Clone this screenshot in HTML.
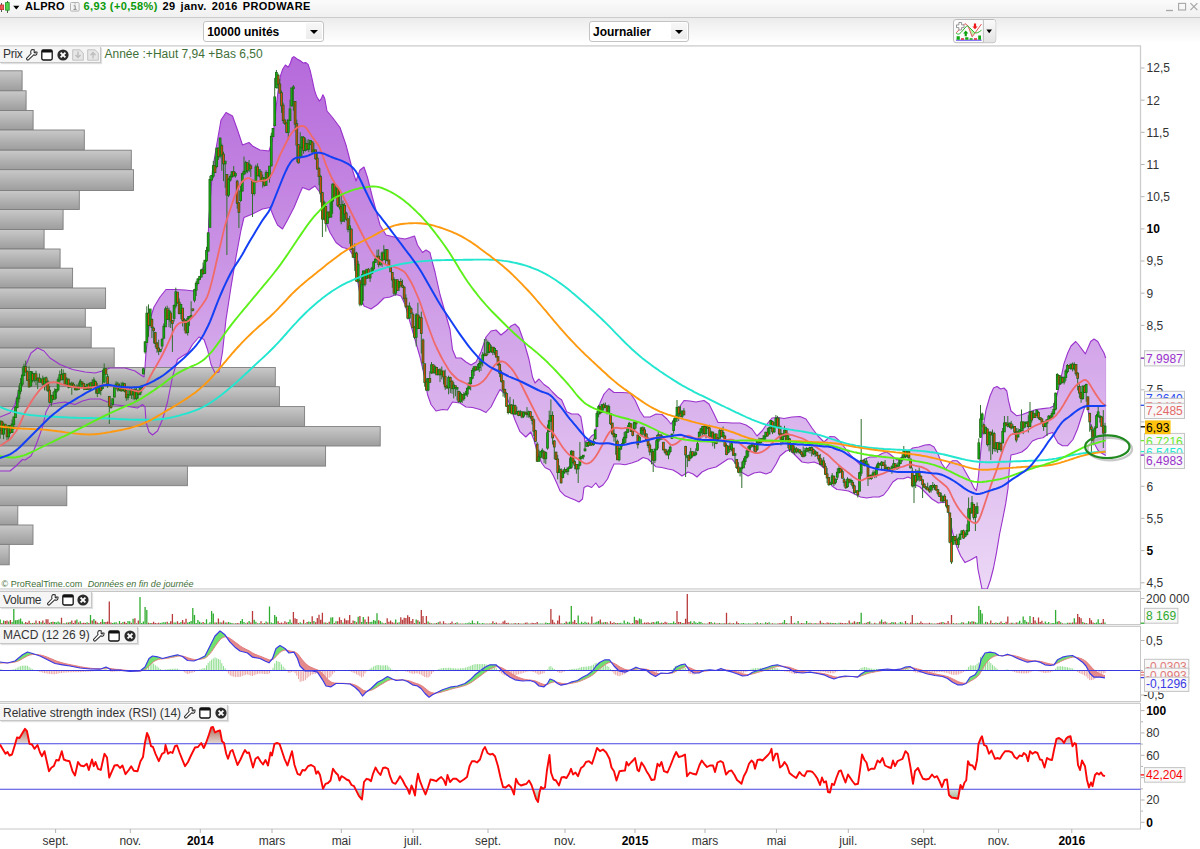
<!DOCTYPE html>
<html lang="fr"><head><meta charset="utf-8"><title>ALPRO PRODWARE</title>
<style>
html,body{margin:0;padding:0;background:#fff}
body{width:1200px;height:849px;position:relative;overflow:hidden;font-family:"Liberation Sans",Arial,sans-serif;font-size:12px;color:#333}
#title{position:absolute;left:0;top:0;width:1200px;height:17px;background:linear-gradient(#fbfbfb,#f0f0f0);border-bottom:1px solid #cbcbcb;box-sizing:content-box}
#title .t{position:absolute;top:0;line-height:13px;font-size:11px;font-weight:bold;color:#000;white-space:nowrap}
#tool{position:absolute;left:0;top:18px;width:1200px;height:28px;background:linear-gradient(#ececec,#f6f6f6 45%,#fff 90%)}
.dd{position:absolute;top:3px;height:21px;background:#fff;border:1px solid #c3c3c3;border-radius:3px;box-sizing:border-box;font-weight:bold;font-size:12px;color:#000;line-height:20px;padding-left:3px;white-space:nowrap}
.dd i{position:absolute;right:1px;top:1px;width:16px;height:16.4px;background:linear-gradient(#f7f7f7,#ececec);display:block}
.dd i:after{content:"";position:absolute;left:4px;top:7.2px;border-left:4px solid transparent;border-right:4px solid transparent;border-top:4.5px solid #000}
.plab{position:absolute;left:0;background:#f5f5f5;border-right:1px solid #c6c6c6;border-bottom:1px solid #c6c6c6;box-shadow:1px 1px 1px rgba(0,0,0,.12);box-sizing:border-box}
.plab .pt{position:absolute;left:3px;top:0.8px;font-size:12px;line-height:15px;color:#333;white-space:nowrap}
.plab .nar{letter-spacing:-0.3px}
#yr{position:absolute;left:104.5px;top:46.5px;font-size:12px;line-height:15px;color:#3f6f38;white-space:nowrap}
#copy{position:absolute;left:1.5px;top:578.6px;font-size:9px;line-height:11px;color:#3f6f38;white-space:nowrap}
#copy em{margin-left:3px}
.k{stroke:#1f6414;stroke-width:2.7}.u{stroke:#12b412;stroke-width:1.15}.d{stroke:#d9480c;stroke-width:1.15}
</style></head><body>
<div id="title">
 <svg width="20" height="17" viewBox="0 0 20 17" style="position:absolute;left:0;top:0"><path d="M1.5,3V12M7.5,1V13" stroke="#555" stroke-width="1"/><rect x="0" y="5" width="3.6" height="4.6" fill="#f25a5a" stroke="#c03030" stroke-width=".8"/><rect x="5.6" y="2.6" width="3.6" height="7.6" fill="#4fd34f" stroke="#1f8f1f" stroke-width=".8"/><path d="M13.2,5.8h6.2l-3.1,3.6z" fill="#000"/></svg>
 <span class="t" style="left:25px;top:-0.2px;letter-spacing:0.28px">ALPRO</span>
 <svg width="10" height="10" viewBox="0 0 10 10" style="position:absolute;left:69.5px;top:1.5px"><rect x=".5" y=".5" width="8.6" height="8.6" rx="1" fill="#f4f4f4" stroke="#b4b4b4"/><path d="M3.6,3.8h1.6v3.4M3.4,7.4h3.2M4.6,1.9h.9" stroke="#8a8a8a" stroke-width="1" fill="none"/></svg>
 <span class="t" style="left:83.6px;top:-0.2px;color:#0a9a0a;letter-spacing:0.36px">6,93 (+0,58%)</span>
 <span class="t" style="left:162.5px;top:-0.2px;letter-spacing:0.42px;word-spacing:1.4px">29 janv. 2016 PRODWARE</span>
 <svg width="36" height="14" viewBox="0 0 36 14" style="position:absolute;left:1164px;top:0"><path d="M2,10.5h7" stroke="#a6a6a6" stroke-width="1.3"/><rect x="14.6" y="3.4" width="7" height="6.6" fill="none" stroke="#a6a6a6" stroke-width="1.1"/><path d="M26.4,3.2l7,7M33.4,3.2l-7,7" stroke="#a6a6a6" stroke-width="1.2"/></svg>
</div>
<div id="tool">
 <div class="dd" style="left:203.2px;width:120.6px">10000 unités<i></i></div>
 <div class="dd" style="left:589px;width:99.8px">Journalier<i></i></div>
 <svg width="44" height="25" viewBox="0 0 44 25" style="position:absolute;left:953px;top:0.6px">
  <defs><linearGradient id="gbt" x1="0" y1="0" x2="0" y2="1"><stop offset="0" stop-color="#fafafa"/><stop offset="1" stop-color="#e4e4e4"/></linearGradient></defs>
  <rect x=".5" y=".5" width="42.2" height="23.2" rx="2.6" fill="#fbfbfb" stroke="#bcbcbc"/>
  <path d="M30.5,1H40.4a2.2,2.2 0 0 1 2.2,2.2V21a2.2,2.2 0 0 1 -2.2,2.2H30.5Z" fill="url(#gbt)"/>
  <path d="M30.4,1V23.3" stroke="#bdbdbd"/>
  <path d="M3,21.2h25.6" stroke="#6a5af0" stroke-width="1.2"/>
  <path d="M3.6,17.3h3.2v3.4H3.6ZM12.2,18.2h3.2v2.5h-3.2ZM16.6,19.2h3v1.5h-3ZM25.2,16.4h2.8v4.3h-2.8Z" fill="#12a812"/>
  <path d="M8,19.2h3v1.5H8ZM21,19.2h3v1.5h-3Z" fill="#e0203a"/>
  <path d="M15.5,7.4L19.3,17.4L22,13.6Z" fill="#b8f0a8"/>
  <path d="M3.2,13.8L12,4.6L15,6.8L19.2,17.8L28.5,5" fill="none" stroke="#e25a5a" stroke-width="1"/>
  <path d="M3.2,14.2C5,15.6 6,15.5 8,13.5L13.5,7.2C15,6.6 16,8 17,9L21.5,13.6C23,14.5 25,14 28.5,11.2" fill="none" stroke="#2cb82c" stroke-width="1"/>
  <path d="M5.9,3.5h2.7v2.4h2.4v2.7h-2.4v2.4h-2.7v-2.4h-2.4v-2.7h2.4z" fill="#fff" stroke="#8a8a8a" stroke-width=".9"/>
  <path d="M12.75,11.6l2.6,2.8h-1.5v2.8h-2.2v-2.8h-1.5z" fill="#0aa00a"/>
  <path d="M22,10.2l-2.6,-2.8h1.5v-2.8h2.2v2.8h1.5z" fill="#f01818"/>
  <path d="M33.4,10.6h5.6l-2.8,3.6z" fill="#000"/>
 </svg>
</div>
<svg id="chart" width="1200" height="849" viewBox="0 0 1200 849" style="position:absolute;left:0;top:0">
<defs>
<linearGradient id="gbar" x1="0" y1="0" x2="0" y2="1"><stop offset="0" stop-color="#c9c9c9"/><stop offset="1" stop-color="#9d9d9d"/></linearGradient>
<linearGradient id="gbb" gradientUnits="userSpaceOnUse" x1="0" y1="46" x2="0" y2="589"><stop offset="0" stop-color="#9a32cd" stop-opacity="0.74"/><stop offset="1" stop-color="#9a32cd" stop-opacity="0.19"/></linearGradient>
<linearGradient id="rsiu" gradientUnits="userSpaceOnUse" x1="0" y1="726" x2="0" y2="744"><stop offset="0" stop-color="#b0604e"/><stop offset="1" stop-color="#e2dcd8"/></linearGradient>
<linearGradient id="rsid" gradientUnits="userSpaceOnUse" x1="0" y1="789" x2="0" y2="804"><stop offset="0" stop-color="#e0e6dc"/><stop offset="1" stop-color="#7f9f6e"/></linearGradient>
<clipPath id="cmain"><rect x="0" y="47" width="1140.5" height="542"/></clipPath>
<clipPath id="cvol"><rect x="0" y="591.5" width="1140.5" height="33.0"/></clipPath>
<clipPath id="cmacd"><rect x="0" y="626.5" width="1140.5" height="75.0"/></clipPath>
<clipPath id="c70"><rect x="0" y="703.5" width="1140.5" height="40.25"/></clipPath>
<clipPath id="c30"><rect x="0" y="789.25" width="1140.5" height="39.75"/></clipPath>
</defs>
<rect x="-1" y="45.9" width="1141.5" height="543.1" fill="#fff" stroke="#cdcdcd" stroke-width="1.3"/>
<rect x="-1" y="591.5" width="1141.5" height="33.0" fill="#fff" stroke="#c6c6c6" stroke-width="1"/>
<rect x="-1" y="626.5" width="1141.5" height="75.0" fill="#fff" stroke="#c6c6c6" stroke-width="1"/>
<rect x="-1" y="703.5" width="1141.5" height="125.5" fill="#fff" stroke="#c6c6c6" stroke-width="1"/>
<rect x="0" y="589.6" width="1140.5" height="1.3" fill="#ececec"/>
<rect x="0" y="624.9" width="1140.5" height="1.3" fill="#ececec"/>
<rect x="0" y="701.9" width="1140.5" height="1.3" fill="#ececec"/>
<g clip-path="url(#cmain)">
<path d="M0,417L10,413 15,404.5 20,387 25,367 31,353 37.5,348 44,351 50,358 60,364.5 72.5,369.5 85,372 95,373 102.5,371 110,368 125,368 135,371 140,374.5 144,377 145,367 146,352 150,319.5 154,307 160,297 166,289.5 175,289.5 185,290 194,291 197.5,284.5 202.5,269.5 207.5,257 208.8,220 212.5,170 217.5,140 221,120 226,112.5 232.5,116 237.5,130 242.5,145 249,142.5 252.5,146 260,150 269,151 272.5,140 275,118 276.3,106 278.4,88.4 280.5,75.7 282.6,69.3 285.4,65 288.3,67.2 290.4,63 292.2,57.7 293.9,56.6 296.7,58.7 300.3,60.8 303.1,63 305.9,62.6 308.1,64.4 310.2,70.7 312.3,79.9 314.4,89.8 316.5,96.2 319.4,101.1 321.5,98.3 322.9,94.8 324.7,98.3 326.1,106 327,111 332.5,117.5 340,127.5 346,145 352.5,170 356,181 360,170 364,167 367.5,177.5 372.5,197.5 380,225 386,235 396,237.5 405,239 410,237.5 414.5,236 417.5,245 422.5,252.5 426,250 430,252.5 431,257 435,272 440,294.5 445,312 450,329.5 452.5,349.5 456,358 461,358 466,362 471,365 476,362 481,352 486,337 491,331 496,330 501,335 506,331 511,326 515,324 519,328 524,342 529,359.5 532.5,377 535,383 539,379 544,384.5 549,388 552.5,392 557.5,397 561.7,400 566.7,411.7 571.7,414 578,414 580.8,416.7 582.5,426.7 585,441.7 588,440 591.7,435.8 595,434 596.7,425 598,411.7 600,403 604,394 609,388.5 614,392.5 622,392.5 630,393 635,400 640,411 644,417 650,417 656,414 662,414.5 667,419 671,424 675,418 680,406 684,400.5 690,401 696,402 704,400.5 709,404 714,414 718,422.5 724,422.5 732,423 740,423 746,425 752,429 757,436 762,431 767,424 772,418 778,417.5 784,418.5 792,417 800,416.5 806,419 812,428 818,436 824,442 830,436.5 834.6,436.7 839,440.5 845,448 851.4,456 857.5,462 860.6,465 863.7,459.6 869.8,457 876,457 882,453.5 886.6,452 891,455 897,460 902,457 906.5,452.7 912.7,448 918.8,447 925,445 930,444.6 934,447 938,454 941.7,463.5 945.6,469 949.4,463.5 952.5,460.7 957,460.7 961.6,465 966,472.7 970.5,480.7 974.3,488.4 976.3,490.7 977.4,485.3 978.5,475.7 980.8,451 983,428 986,410 990,396 993.5,388 997,386.5 1000.6,389 1004,388 1006.8,391 1008.5,400.7 1011,411 1016.5,415.7 1021.8,414.8 1028.9,412 1036,409.5 1043,408.6 1050,407.7 1053.6,406 1057,395 1060.7,379.5 1064,363.6 1067.7,353 1071,346 1075.7,341.5 1078,344 1082,349.4 1085.4,353.9 1088,347.7 1090.7,341.5 1094,339 1097.8,341.5 1101,347.7 1104,353 1105.7,358 1105.7,455.4 1105.7,455.4 1101,452.8 1097.8,450 1094,443 1091.6,432.5 1089,414.8 1086.8,405 1084.5,407.7 1081,418 1077.5,429 1073,439.5 1067.7,445.7 1062.4,445.7 1058,443 1055,437.8 1052.7,432.5 1048,434 1043,437.8 1037.7,438.7 1032.4,441 1027,448 1021.8,452 1016.5,453.7 1011,455 1009.4,467.8 1008,488.4 1005.7,503.7 1002.7,519 999.6,534 996.5,552.7 993.5,568 990.4,580 987.3,589 982,589 980.5,581.7 978,569.5 976.6,556.5 970.5,560 965,562.6 960.6,555.7 956.7,546.5 953,534 950,520.5 947.5,505 944.5,502 938.4,503 932,499 926,493 920,487 915.7,485 912,478.8 908,477 903.5,478.8 897.4,478.8 892.8,482 888,489.5 883.6,495 879,497 873,497 866.7,498 860.6,497 854.5,494 848.4,491 842,490 837,489.5 832,486 828,478 824,468 819,464 814,462 808,463 802,462 796,456 790,450 786,451 780,456 776,464 771,472 766,474 760,472 754,473 748,476 741,472 736,464 732,459 728,459 722,463 716,467 708,469 702,472 697,477 693,474 688,472 682,476 678,473 673,470 668,469 661.7,467.5 655.8,466.7 651.7,462.5 648,459 643,457.5 638,460.8 631.7,463 625,464.7 620,464 614,464 610.8,471 607.5,479 603,485 599,487.5 595.8,483 591.7,487.5 587.5,485.8 584,487.5 582.5,499 579,502 575,500 570,498 565,495.8 560,490.8 556.7,483 553,475 550,470 545,467.5 541.7,463 537.5,453 534,440 530.8,432 525.8,437 520,431.7 515,420 508,400 504,393 500,389.5 496,397 491,407 486,412.5 480,409.5 472.5,407.5 466,407 460,403 452.5,402 447.5,410 442.5,409.5 436,411 431,404.5 427.5,394.5 424,374.5 420,357 415,339.5 410,322 405,304.5 401,296 396,294.5 390,297 384,298 377.5,304.5 371,309 364,306 360,294.5 356,272 354,257 349,249 342.5,247.5 336,242.5 330,232.5 325,220 322.5,207.5 320,192.5 315,186 309,190 302.5,187.5 300,193 294,207.5 287.5,220 282.5,229 277.5,225 274,217.5 270,207.5 262.5,209 252.5,214 244,217.5 241,230 236,257 231,287 226,319.5 222.5,352 219,372 215,373 211,364.5 207.5,349.5 204,339.5 199,337 192.5,344.5 187.5,353 182.5,356 177.5,359.5 172.5,377 167.5,402 162.5,419.5 157.5,431 152.5,435 149,432 146,422 145,407 142.5,404.5 137.5,408 125,406 112.5,404.5 107.5,402 100,399 90,399 82.5,401 75,404.5 65,402 57.5,403 50,404.5 46,412 42.5,427 37.5,441 34,450 31,456 25,460 22.5,459.5 16,466 10,471 0,471Z" fill="url(#gbb)" stroke="none"/>
<rect x="-1" y="70.8" width="23.1" height="20" fill="url(#gbar)" stroke="#7d7d7d" stroke-width="0.9"/>
<rect x="-1" y="90.8" width="27.1" height="19.8" fill="url(#gbar)" stroke="#7d7d7d" stroke-width="0.9"/>
<rect x="-1" y="110.5" width="34.1" height="19.5" fill="url(#gbar)" stroke="#7d7d7d" stroke-width="0.9"/>
<rect x="-1" y="130" width="85.3" height="20.2" fill="url(#gbar)" stroke="#7d7d7d" stroke-width="0.9"/>
<rect x="-1" y="150.2" width="132.3" height="19.4" fill="url(#gbar)" stroke="#7d7d7d" stroke-width="0.9"/>
<rect x="-1" y="169.7" width="134.5" height="20.8" fill="url(#gbar)" stroke="#7d7d7d" stroke-width="0.9"/>
<rect x="-1" y="190.5" width="80.3" height="19" fill="url(#gbar)" stroke="#7d7d7d" stroke-width="0.9"/>
<rect x="-1" y="209.5" width="64.1" height="20" fill="url(#gbar)" stroke="#7d7d7d" stroke-width="0.9"/>
<rect x="-1" y="229.5" width="45.1" height="19.5" fill="url(#gbar)" stroke="#7d7d7d" stroke-width="0.9"/>
<rect x="-1" y="249" width="61.1" height="19.2" fill="url(#gbar)" stroke="#7d7d7d" stroke-width="0.9"/>
<rect x="-1" y="268.2" width="73.6" height="19.8" fill="url(#gbar)" stroke="#7d7d7d" stroke-width="0.9"/>
<rect x="-1" y="288" width="106.6" height="20.5" fill="url(#gbar)" stroke="#7d7d7d" stroke-width="0.9"/>
<rect x="-1" y="308.5" width="86.3" height="18.8" fill="url(#gbar)" stroke="#7d7d7d" stroke-width="0.9"/>
<rect x="-1" y="327.2" width="92.2" height="20.8" fill="url(#gbar)" stroke="#7d7d7d" stroke-width="0.9"/>
<rect x="-1" y="348" width="115.2" height="19.5" fill="url(#gbar)" stroke="#7d7d7d" stroke-width="0.9"/>
<rect x="-1" y="367.5" width="276.3" height="19.2" fill="url(#gbar)" stroke="#7d7d7d" stroke-width="0.9"/>
<rect x="-1" y="386.7" width="280.4" height="19.9" fill="url(#gbar)" stroke="#7d7d7d" stroke-width="0.9"/>
<rect x="-1" y="406.6" width="305.6" height="20" fill="url(#gbar)" stroke="#7d7d7d" stroke-width="0.9"/>
<rect x="-1" y="426.6" width="381.2" height="19.4" fill="url(#gbar)" stroke="#7d7d7d" stroke-width="0.9"/>
<rect x="-1" y="446" width="326.6" height="20.1" fill="url(#gbar)" stroke="#7d7d7d" stroke-width="0.9"/>
<rect x="-1" y="466.1" width="188.4" height="19.6" fill="url(#gbar)" stroke="#7d7d7d" stroke-width="0.9"/>
<rect x="-1" y="485.7" width="67.8" height="20" fill="url(#gbar)" stroke="#7d7d7d" stroke-width="0.9"/>
<rect x="-1" y="505.7" width="18.8" height="19.3" fill="url(#gbar)" stroke="#7d7d7d" stroke-width="0.9"/>
<rect x="-1" y="525" width="34" height="19.4" fill="url(#gbar)" stroke="#7d7d7d" stroke-width="0.9"/>
<rect x="-1" y="544.4" width="10.2" height="20.4" fill="url(#gbar)" stroke="#7d7d7d" stroke-width="0.9"/>
<path d="M0,417L10,413 15,404.5 20,387 25,367 31,353 37.5,348 44,351 50,358 60,364.5 72.5,369.5 85,372 95,373 102.5,371 110,368 125,368 135,371 140,374.5 144,377 145,367 146,352 150,319.5 154,307 160,297 166,289.5 175,289.5 185,290 194,291 197.5,284.5 202.5,269.5 207.5,257 208.8,220 212.5,170 217.5,140 221,120 226,112.5 232.5,116 237.5,130 242.5,145 249,142.5 252.5,146 260,150 269,151 272.5,140 275,118 276.3,106 278.4,88.4 280.5,75.7 282.6,69.3 285.4,65 288.3,67.2 290.4,63 292.2,57.7 293.9,56.6 296.7,58.7 300.3,60.8 303.1,63 305.9,62.6 308.1,64.4 310.2,70.7 312.3,79.9 314.4,89.8 316.5,96.2 319.4,101.1 321.5,98.3 322.9,94.8 324.7,98.3 326.1,106 327,111 332.5,117.5 340,127.5 346,145 352.5,170 356,181 360,170 364,167 367.5,177.5 372.5,197.5 380,225 386,235 396,237.5 405,239 410,237.5 414.5,236 417.5,245 422.5,252.5 426,250 430,252.5 431,257 435,272 440,294.5 445,312 450,329.5 452.5,349.5 456,358 461,358 466,362 471,365 476,362 481,352 486,337 491,331 496,330 501,335 506,331 511,326 515,324 519,328 524,342 529,359.5 532.5,377 535,383 539,379 544,384.5 549,388 552.5,392 557.5,397 561.7,400 566.7,411.7 571.7,414 578,414 580.8,416.7 582.5,426.7 585,441.7 588,440 591.7,435.8 595,434 596.7,425 598,411.7 600,403 604,394 609,388.5 614,392.5 622,392.5 630,393 635,400 640,411 644,417 650,417 656,414 662,414.5 667,419 671,424 675,418 680,406 684,400.5 690,401 696,402 704,400.5 709,404 714,414 718,422.5 724,422.5 732,423 740,423 746,425 752,429 757,436 762,431 767,424 772,418 778,417.5 784,418.5 792,417 800,416.5 806,419 812,428 818,436 824,442 830,436.5 834.6,436.7 839,440.5 845,448 851.4,456 857.5,462 860.6,465 863.7,459.6 869.8,457 876,457 882,453.5 886.6,452 891,455 897,460 902,457 906.5,452.7 912.7,448 918.8,447 925,445 930,444.6 934,447 938,454 941.7,463.5 945.6,469 949.4,463.5 952.5,460.7 957,460.7 961.6,465 966,472.7 970.5,480.7 974.3,488.4 976.3,490.7 977.4,485.3 978.5,475.7 980.8,451 983,428 986,410 990,396 993.5,388 997,386.5 1000.6,389 1004,388 1006.8,391 1008.5,400.7 1011,411 1016.5,415.7 1021.8,414.8 1028.9,412 1036,409.5 1043,408.6 1050,407.7 1053.6,406 1057,395 1060.7,379.5 1064,363.6 1067.7,353 1071,346 1075.7,341.5 1078,344 1082,349.4 1085.4,353.9 1088,347.7 1090.7,341.5 1094,339 1097.8,341.5 1101,347.7 1104,353 1105.7,358" fill="none" stroke="#9a32cd" stroke-width="1.1" stroke-linejoin="round"/>
<path d="M0,471L10,471 16,466 22.5,459.5 25,460 31,456 34,450 37.5,441 42.5,427 46,412 50,404.5 57.5,403 65,402 75,404.5 82.5,401 90,399 100,399 107.5,402 112.5,404.5 125,406 137.5,408 142.5,404.5 145,407 146,422 149,432 152.5,435 157.5,431 162.5,419.5 167.5,402 172.5,377 177.5,359.5 182.5,356 187.5,353 192.5,344.5 199,337 204,339.5 207.5,349.5 211,364.5 215,373 219,372 222.5,352 226,319.5 231,287 236,257 241,230 244,217.5 252.5,214 262.5,209 270,207.5 274,217.5 277.5,225 282.5,229 287.5,220 294,207.5 300,193 302.5,187.5 309,190 315,186 320,192.5 322.5,207.5 325,220 330,232.5 336,242.5 342.5,247.5 349,249 354,257 356,272 360,294.5 364,306 371,309 377.5,304.5 384,298 390,297 396,294.5 401,296 405,304.5 410,322 415,339.5 420,357 424,374.5 427.5,394.5 431,404.5 436,411 442.5,409.5 447.5,410 452.5,402 460,403 466,407 472.5,407.5 480,409.5 486,412.5 491,407 496,397 500,389.5 504,393 508,400 515,420 520,431.7 525.8,437 530.8,432 534,440 537.5,453 541.7,463 545,467.5 550,470 553,475 556.7,483 560,490.8 565,495.8 570,498 575,500 579,502 582.5,499 584,487.5 587.5,485.8 591.7,487.5 595.8,483 599,487.5 603,485 607.5,479 610.8,471 614,464 620,464 625,464.7 631.7,463 638,460.8 643,457.5 648,459 651.7,462.5 655.8,466.7 661.7,467.5 668,469 673,470 678,473 682,476 688,472 693,474 697,477 702,472 708,469 716,467 722,463 728,459 732,459 736,464 741,472 748,476 754,473 760,472 766,474 771,472 776,464 780,456 786,451 790,450 796,456 802,462 808,463 814,462 819,464 824,468 828,478 832,486 837,489.5 842,490 848.4,491 854.5,494 860.6,497 866.7,498 873,497 879,497 883.6,495 888,489.5 892.8,482 897.4,478.8 903.5,478.8 908,477 912,478.8 915.7,485 920,487 926,493 932,499 938.4,503 944.5,502 947.5,505 950,520.5 953,534 956.7,546.5 960.6,555.7 965,562.6 970.5,560 976.6,556.5 978,569.5 980.5,581.7 982,589 987.3,589 990.4,580 993.5,568 996.5,552.7 999.6,534 1002.7,519 1005.7,503.7 1008,488.4 1009.4,467.8 1011,455 1016.5,453.7 1021.8,452 1027,448 1032.4,441 1037.7,438.7 1043,437.8 1048,434 1052.7,432.5 1055,437.8 1058,443 1062.4,445.7 1067.7,445.7 1073,439.5 1077.5,429 1081,418 1084.5,407.7 1086.8,405 1089,414.8 1091.6,432.5 1094,443 1097.8,450 1101,452.8 1105.7,455.4" fill="none" stroke="#9a32cd" stroke-width="1.1" stroke-linejoin="round"/>
<path d="M1105.7,358V455.4" stroke="#9a32cd" stroke-opacity="0.5" stroke-width="0.6"/>
<path d="M0.2,421V438.7M1.9,421V434.3M3.6,422.4V439.2M5.3,423.8V429.2M7,428V440.3M8.7,425.4V440M10.4,425.7V434M12.1,419.6V432.4M13.8,416.6V429.8M15.5,406.1V418M17.2,396.6V408.1M18.9,385.5V402.6M20.6,378.1V394.3M22.3,367.6V386.2M24,363.7V375.8M25.7,360.7V371.8M27.4,370.5V380.3M29.1,366.4V387.7M30.8,371.3V386.6M32.6,371.3V382.4M34.3,372.9V382.3M36,370.8V385.4M37.7,377.7V389.1M39.4,373.5V382M41.1,378.9V382.7M42.8,375.6V385.7M44.5,378V390.4M46.2,376.5V390.6M47.9,379.9V391.8M49.6,386V403.4M51.3,394.6V406.2M53,392V400.2M54.7,388.3V399.1M56.4,389.4V398.9M58.1,377.4V391.3M59.8,370.5V382.4M61.5,368.8V379.6M63.2,369.5V379.8M64.9,372.7V384.9M66.7,377.2V385.1M68.4,378.7V388.4M70.1,383V387.8M71.8,381.6V394.8M73.5,382.4V386.9M75.2,385.5V390M76.9,384.3V390.2M78.6,382.6V389.3M80.3,379.1V387.4M82,381.8V384.8M83.7,382.8V390.2M85.4,386.5V389.4M87.1,384.2V389.5M88.8,382.9V390.2M90.5,382.8V389.9M92.2,379.4V386.3M93.9,377.3V385.8M95.6,380.7V393.7M97.3,383.1V397M99,385.9V393.4M100.8,386.1V395.3M102.5,369.8V389.6M104.2,363.5V383M105.9,368.3V374.2M107.6,374V387.9M109.3,396.6V424M111,405.6V408.8M112.7,398.8V405.6M114.4,387V397.3M116.1,381.3V388.8M117.8,381.9V391.6M119.5,383.5V391.2M121.2,382.4V391.8M122.9,381.8V391M124.6,383.6V392.3M126.3,389.7V400.8M128,394.2V400.2M129.7,387.3V395.3M131.4,388V399M133.1,389.5V399.7M134.9,387.4V400.2M136.6,386.9V401.1M138.3,390.2V398.6M140,387V395.3M141.7,385V392.7M143.4,367.7V374.1M145.1,341.4V353.6M146.8,306.3V342.5M148.5,304.4V336.8M150.2,309.2V326.1M151.9,318.3V338.1M153.6,326.7V343.4M155.3,331.8V347.5M157,342V352.7M158.7,339.7V355.1M160.4,349.4V352.3M162.1,337.9V349.1M163.8,323.4V339.3M165.5,306.7V326.6M167.2,305.7V320M169,307.7V327.2M170.7,310.8V328M172.4,320V352M174.1,304.7V321.6M175.8,287.6V308.3M177.5,292V303.7M179.2,298.4V314.4M180.9,303.8V319.1M182.6,307.8V326.5M184.3,318.1V330.7M186,319.7V332.9M187.7,316V335.5M189.4,316.1V326M191.1,301.2V317.1M192.8,309V311.4M194.5,289.7V302.4M196.2,280.8V296M197.9,278.1V283.7M199.6,276.2V279.5M201.3,268.7V277.6M203.1,262.5V274.9M204.8,260V273.2M206.5,246.8V262M208.2,232V251.6M209.9,175.9V227.6M211.6,175.5V180.8M213.3,160.9V178.2M215,156.8V172.3M216.7,147.7V168.4M218.4,147.6V160M220.1,137.4V158.4M221.8,143.6V170.8M223.5,151.7V181.1M225.2,160.9V187.8M226.9,174.2V255M228.6,177.6V197.1M230.3,174.4V181.6M232,171.7V177.9M233.7,166V176.6M235.4,171.8V177.7M237.2,179.8V208.7M238.9,202.7V228M240.6,185.8V201.9M242.3,172.4V191.3M244,156.6V175.3M245.7,160.8V174.1M247.4,162.8V173.2M249.1,160V172.2M250.8,164.5V176.9M252.5,179.8V217M254.2,180V195.5M255.9,164.7V181.7M257.6,163.4V175.6M259.3,169.9V177.4M261,170.9V181M262.7,174.5V187.7M264.4,177.3V186.5M266.1,170.2V185.3M267.8,171.9V177.6M269.5,166.2V182.6M271.3,132.7V166.5M273,128.3V137.1M274.7,77.9V126.3M276.4,70V88.6M278.1,73.7V89.1M279.8,79V93.1M281.5,90.5V112.9M283.2,102.8V123.3M284.9,119.6V125M286.6,122.3V133.1M288.3,119.9V139.9M290,99.6V120.5M291.7,88.2V106.7M293.4,85V110.8M295.1,101.4V131.2M296.8,119.6V162.2M298.5,144.1V163.5M300.2,132.2V157.3M301.9,136.1V157.5M303.6,136.1V153.7M305.4,137.7V151.5M307.1,139.6V150.6M308.8,139V152.2M310.5,140.4V144.4M312.2,141.2V151.8M313.9,142.8V152.3M315.6,149.7V159.7M317.3,153V169.5M319,167V185.3M320.7,174.9V202.4M322.4,191.8V237M324.1,200.5V220.2M325.8,205.6V231.6M327.5,211.6V223.6M329.2,211.2V218.2M330.9,199.7V217.5M332.6,183.3V213.9M334.3,181.9V197.1M336,186.8V198.1M337.7,187.3V207M339.5,189.5V209.5M341.2,194.4V224.3M342.9,200.5V221.8M344.6,203.1V222.2M346.3,211.7V220.8M348,218.1V232.3M349.7,215.8V243.8M351.4,228.4V249.3M353.1,248.5V258M354.8,243.3V270.9M356.5,251.8V281.7M358.2,260.8V282.8M359.9,279.7V306.3M361.6,274.1V305.6M363.3,270.8V301.1M365,271.1V286.4M366.7,269.5V279M368.4,267.9V278M370.1,271.8V281.9M371.8,266.8V274.3M373.6,261.1V271.6M375.3,258.4V262.2M377,249.7V260.4M378.7,249.4V267.3M380.4,260V265.6M382.1,251.4V266.8M383.8,245.2V260M385.5,249.5V264.9M387.2,249.4V261.5M388.9,259.7V267.3M390.6,265.9V271.6M392.3,272.2V287.8M394,277.3V295.3M395.7,279.9V295.7M397.4,279.4V290.3M399.1,281.2V290.9M400.8,278.3V286.1M402.5,279.8V288M404.2,286.2V301.5M405.9,294.3V307.5M407.7,305.6V319.3M409.4,302.4V319M411.1,307.3V314.1M412.8,312.2V328.2M414.5,326.1V338.9M416.2,313V346.4M417.9,302.7V328.5M419.6,315.7V328.5M421.3,311.6V353.6M423,338.5V369.5M424.7,364V386.7M426.4,378.3V390.7M428.1,378.4V391.2M429.8,371.3V382.9M431.5,362V373.9M433.2,364.3V372.7M434.9,365.3V373.4M436.6,367.5V374.6M438.3,369V375M440,368.2V382.1M441.8,366.5V379.5M443.5,371.2V384.5M445.2,369.6V389.9M446.9,384.9V388.9M448.6,375.7V394.3M450.3,376.7V393.1M452,380.8V393.8M453.7,382V398.4M455.4,385.7V396.3M457.1,387.4V400.4M458.8,390.6V402.9M460.5,391.8V402.8M462.2,394.2V402.9M463.9,392.1V400.7M465.6,390.9V395.1M467.3,386.7V396.9M469,382.7V388.8M470.7,377.5V390.4M472.4,368.1V379.4M474.1,366.3V376M475.9,365.9V371M477.6,364V369.7M479.3,360.2V372.1M481,360.8V370.9M482.7,352.1V366.4M484.4,339V356.3M486.1,338.6V356.2M487.8,340.5V355M489.5,342.5V353.2M491.2,345.1V353M492.9,347.3V355.1M494.6,346.9V354.9M496.3,350.1V356.9M498,356.3V365.3M499.7,360.8V377.1M501.4,370.3V382.6M503.1,380V396.7M504.8,388.6V397.8M506.5,392.3V406.8M508.2,404.5V414.4M510,396.8V413.1M511.7,404V414.2M513.4,399.3V414.7M515.1,404.6V414.9M516.8,406.8V414M518.5,410.5V416.2M520.2,409.9V415.2M521.9,411.9V418.3M523.6,411.5V418M525.3,411.8V414.7M527,407.1V417.5M528.7,410.6V417.7M530.4,411.2V418.9M532.1,416.2V424.5M533.8,418.4V436.1M535.5,429.8V441.8M537.2,442.1V461.9M538.9,449.5V461.5M540.6,451V458.4M542.3,448.3V458.4M544.1,450.7V463.1M545.8,451.5V464.1M547.5,424.6V449.7M549.2,410.6V432.2M550.9,399.4V421.9M552.6,411.4V444.5M554.3,440.2V459.1M556,451.8V459.5M557.7,454.9V479.4M559.4,465.3V472.7M561.1,468.1V483.6M562.8,470.7V478.3M564.5,467.4V473.8M566.2,469V473.5M567.9,468V475.1M569.6,457.7V468.8M571.3,450V468.8M573,450.6V464M574.7,459.8V469.3M576.4,464.5V473.7M578.2,464.9V483M579.9,442V466.3M581.6,456V459.2M583.3,455.3V459.3M585,441.6V451.5M586.7,442.3V446.8M588.4,440.7V446.9M590.1,439.7V445.5M591.8,440.4V446.1M593.5,438.6V445.7M595.2,428.8V439.7M596.9,411.2V426.9M598.6,404.8V417.3M600.3,406.8V414.3M602,403.9V412.7M603.7,402.9V410.3M605.4,402.5V408M607.1,405.1V414.4M608.8,404.6V413.4M610.5,413.4V425.1M612.3,422.7V435.2M614,428V441.7M615.7,434.4V454.8M617.4,439.5V459.7M619.1,448.1V461.4M620.8,444.6V450.1M622.5,438.7V446.5M624.2,432V445.2M625.9,431.5V443M627.6,425.1V432.6M629.3,421.9V428.6M631,423.8V431.9M632.7,431V436.4M634.4,421.9V431.6M636.1,420.9V428.5M637.8,434.9V448.5M639.5,436.2V442.9M641.2,426.9V435.6M642.9,426.3V435.7M644.6,427.1V438M646.4,433.4V441.4M648.1,437.1V448.1M649.8,443.1V455.4M651.5,449.6V464.3M653.2,451.2V472M654.9,448.8V463.1M656.6,434.9V450.3M658.3,431.4V448.5M660,435V440.4M661.7,434.3V439.5M663.4,441.9V450.4M665.1,448.9V454.1M666.8,449.4V455M668.5,449.3V459.2M670.2,445.4V453.4M671.9,433.5V439.1M673.6,418.3V433.6M675.3,416.9V425.8M677,400V422M678.7,406.1V421M680.5,406.1V416.6M682.2,410.7V419.2M683.9,408.1V415.1M685.6,445.8V477M687.3,455.7V467.1M689,454.3V461.4M690.7,447.8V458.8M692.4,451.3V457.6M694.1,451V455.7M695.8,448.3V455.8M697.5,438.7V451.2M699.2,430.8V441.8M700.9,427.8V436.8M702.6,426.3V437.2M704.3,423.9V436M706,426V438.4M707.7,426.4V428.5M709.4,424.8V437.2M711.1,430.7V439.5M712.8,431.6V446.3M714.6,434.1V448.7M716.3,433.7V444.2M718,437.5V440.8M719.7,428.7V438.3M721.4,428.8V437.1M723.1,426.6V438.1M724.8,434.7V447.1M726.5,443.4V455.2M728.2,446.3V453.5M729.9,442V452M731.6,441.9V451.3M733.3,448.2V455.6M735,453.1V464.1M736.7,459.7V469M738.4,462.2V473.3M740.1,468.2V476.5M741.8,461.6V488M743.5,458.2V467.9M745.2,455.7V464.8M746.9,449.2V458.7M748.7,445.5V456.7M750.4,445.9V450.7M752.1,443.1V446.1M753.8,442.9V451.4M755.5,446.1V452.7M757.2,440.4V450.9M758.9,437.5V445.2M760.6,438.4V443.5M762.3,437.9V441.4M764,435.7V440.6M765.7,431.7V439.7M767.4,428V436.7M769.1,427.4V434.2M770.8,420.6V428.5M772.5,420.8V434.1M774.2,422.1V432.8M775.9,415V427.2M777.6,415.9V428.2M779.3,417.7V438.1M781,425.8V445.5M782.8,433.2V444.4M784.5,425.8V436.9M786.2,428.2V442.3M787.9,432.8V448.1M789.6,438V452M791.3,443.3V452.6M793,444.2V453.3M794.7,446.3V454.7M796.4,447.1V453.4M798.1,448.1V453.4M799.8,449V453.9M801.5,450.9V456.8M803.2,446.5V456.9M804.9,447.9V456.9M806.6,447.2V452.1M808.3,448.6V452.5M810,446.6V453.5M811.7,446.5V456.4M813.4,448.4V455.1M815.1,450V456.9M816.9,452.3V455.6M818.6,455.1V461.5M820.3,454V464.8M822,458.6V466.1M823.7,457.2V467.4M825.4,463.1V474.8M827.1,467.9V483.1M828.8,477.3V485.8M830.5,482.7V485M832.2,473.1V484.4M833.9,475.9V486M835.6,478.4V484.4M837.3,468.4V480M839,465.8V473.3M840.7,468.4V472.1M842.4,469V478.5M844.1,477.9V486.5M845.8,482.1V489M847.5,477.2V487.9M849.2,478.9V483.3M851,478.7V484.9M852.7,480V488.7M854.4,484.6V494.3M856.1,490.6V492.6M857.8,490.6V497.5M859.5,471.8V491.2M861.2,419V476.1M862.9,460.5V465.4M864.6,458.7V466.4M866.3,458V466.2M868,463.2V486M869.7,475V479.5M871.4,474.6V479.8M873.1,470.4V477M874.8,470.6V478.2M876.5,464.4V477.5M878.2,461.6V468.5M879.9,463V464.8M881.6,461.1V470.5M883.3,462.5V465.7M885.1,460V469.6M886.8,466.9V469.5M888.5,466.8V470.5M890.2,467.9V471.8M891.9,465.3V473.8M893.6,459.5V468.5M895.3,463.5V468.2M897,464.5V470M898.7,459V469.1M900.4,458V464.3M902.1,454.4V461.7M903.8,446V457.6M905.5,450.3V458.1M907.2,450.3V458M908.9,451.5V459M910.6,458.6V468.4M912.3,467.6V487.4M914,475.1V503M915.7,469.1V488.1M917.4,470.6V480.7M919.2,467.5V481.5M920.9,475V480.5M922.6,479.5V498M924.3,483.3V487.6M926,486.5V490M927.7,482.6V489.7M929.4,485.7V492.9M931.1,485V492.6M932.8,482V490.3M934.5,483.9V489.9M936.2,485.2V490.5M937.9,489.4V495.4M939.6,492.7V496.4M941.3,492.7V501.2M943,495.9V503.2M944.7,494.1V500.6M946.4,500V508.3M948.1,505.8V512.6M949.8,512.5V543.3M951.5,518V563.9M953.3,535.8V544.4M955,536.7V540.5M956.7,534.4V544.9M958.4,536.7V547.8M960.1,534.2V539.8M961.8,530.5V534.6M963.5,529.6V538.8M965.2,532.1V537.3M966.9,524.2V535.6M968.6,497.5V531.7M970.3,507.8V520.2M972,496V512.9M973.7,504.1V519.7M975.4,506.2V531M977.1,502.4V513.8M978.8,438.3V459.5M980.5,405V437.8M982.2,412.5V427.4M983.9,423.8V434.6M985.6,427.3V434.1M987.4,428.3V446.4M989.1,431.3V451.3M990.8,431.2V460M992.5,429.6V454.3M994.2,431.8V451.5M995.9,442.4V451.8M997.6,442.2V452.9M999.3,441.6V449.5M1001,441.9V451.9M1002.7,428V442.8M1004.4,416V431.8M1006.1,422.1V425.3M1007.8,416V427.4M1009.5,422.7V428M1011.2,420.9V429.5M1012.9,424.1V427.9M1014.6,426.6V434.8M1016.3,428V442.4M1018,428.2V437.1M1019.7,429V434.2M1021.5,409.5V431.7M1023.2,421.6V434.1M1024.9,421.6V427.5M1026.6,421.8V423.4M1028.3,415.2V432.5M1030,402V426.3M1031.7,411.2V422.7M1033.4,410.5V418.3M1035.1,412.7V418M1036.8,409.7V415.6M1038.5,411.2V419.3M1040.2,417.5V420.4M1041.9,418.1V423.3M1043.6,421.4V430.8M1045.3,420.5V427.2M1047,419.9V436M1048.7,415.1V420.8M1050.4,414.9V419.5M1052.1,411.1V418.2M1053.8,402.9V414.6M1055.6,392.6V410.4M1057.3,373.2V389.5M1059,375.8V384.8M1060.7,375.2V385M1062.4,376.6V383.3M1064.1,376.9V384.4M1065.8,369.2V380.9M1067.5,364V373.4M1069.2,365.4V368M1070.9,363.9V370M1072.6,362.5V371.4M1074.3,362.3V370.6M1076,364.5V375.9M1077.7,372.1V390.4M1079.4,384.3V397.8M1081.1,391.7V402.7M1082.8,385.4V399.9M1084.5,385.1V393M1086.2,383.6V401.7M1087.9,396.2V410.1M1089.7,412.7V431.7M1091.4,424.4V452M1093.1,429.3V445.4M1094.8,426.2V437.5M1096.5,414V428.5M1098.2,405.5V416.5M1099.9,415.9V422.6M1101.6,416V426.3M1103.3,410V448M1105,422.9V435.3" stroke="#2f6e2c" stroke-width="1" fill="none"/>
<g fill="none">
<path class="k" d="M0.2,420.6V431"/><path class="u" d="M0.2,421.3V430.3"/>
<path class="k" d="M1.9,420.9V434.5"/><path class="d" d="M1.9,421.6V433.8"/>
<path class="k" d="M3.6,423.9V434.5"/><path class="u" d="M3.6,424.6V433.8"/>
<path class="k" d="M5.3,423.9V429.5"/><path class="d" d="M5.3,424.6V428.8"/>
<path class="k" d="M7,428.1V437.2"/><path class="d" d="M7,428.8V436.5"/>
<path class="k" d="M8.7,425V437.2"/><path class="u" d="M8.7,425.7V436.5"/>
<path class="k" d="M10.4,425V433"/><path class="d" d="M10.4,425.7V432.3"/>
<path class="k" d="M12.1,423.5V433"/><path class="u" d="M12.1,424.2V432.3"/>
<path class="k" d="M13.8,416.6V424.9"/><path class="u" d="M13.8,417.3V424.2"/>
<path class="k" d="M15.5,406.7V418"/><path class="u" d="M15.5,407.4V417.3"/>
<path class="k" d="M17.2,397.8V408.1"/><path class="u" d="M17.2,398.5V407.4"/>
<path class="k" d="M18.9,390.2V399.2"/><path class="u" d="M18.9,390.9V398.5"/>
<path class="k" d="M20.6,383.1V391.6"/><path class="u" d="M20.6,383.8V390.9"/>
<path class="k" d="M22.3,374.7V384.5"/><path class="u" d="M22.3,375.4V383.8"/>
<path class="k" d="M24,366.2V376.1"/><path class="u" d="M24,366.9V375.4"/>
<path class="k" d="M25.7,366.2V372.5"/><path class="d" d="M25.7,366.9V371.8"/>
<path class="k" d="M27.4,371.1V380.8"/><path class="d" d="M27.4,371.8V380.1"/>
<path class="k" d="M29.1,379.4V387.3"/><path class="d" d="M29.1,380.1V386.6"/>
<path class="k" d="M30.8,371.1V386.5"/><path class="u" d="M30.8,371.8V385.8"/>
<path class="k" d="M32.6,373.2V380.6"/><path class="d" d="M32.6,373.9V379.9"/>
<path class="k" d="M34.3,373.4V380.6"/><path class="u" d="M34.3,374.1V379.9"/>
<path class="k" d="M36,373.4V380.6"/><path class="d" d="M36,374.1V379.9"/>
<path class="k" d="M37.7,377.7V380.6"/><path class="u" d="M37.7,378.4V379.9"/>
<path class="k" d="M39.4,377.7V382.6"/><path class="d" d="M39.4,378.4V381.9"/>
<path class="k" d="M41.1,378.6V382.6"/><path class="u" d="M41.1,379.3V381.9"/>
<path class="k" d="M42.8,378.6V384.5"/><path class="d" d="M42.8,379.3V383.8"/>
<path class="k" d="M44.5,377.5V384.5"/><path class="u" d="M44.5,378.2V383.8"/>
<path class="k" d="M46.2,377.5V382.2"/><path class="d" d="M46.2,378.2V381.5"/>
<path class="k" d="M47.9,381.4V391.2"/><path class="d" d="M47.9,382.1V390.5"/>
<path class="k" d="M49.6,389.8V402.6"/><path class="d" d="M49.6,390.5V401.9"/>
<path class="k" d="M51.3,395V402.6"/><path class="u" d="M51.3,395.7V401.9"/>
<path class="k" d="M53,395V399.6"/><path class="d" d="M53,395.7V398.9"/>
<path class="k" d="M54.7,390.9V399.6"/><path class="u" d="M54.7,391.6V398.9"/>
<path class="k" d="M56.4,388.9V392.3"/><path class="u" d="M56.4,389.6V391.6"/>
<path class="k" d="M58.1,379.3V390.3"/><path class="u" d="M58.1,380V389.6"/>
<path class="k" d="M59.8,374.3V380.7"/><path class="u" d="M59.8,375V380"/>
<path class="k" d="M61.5,374.3V380.2"/><path class="d" d="M61.5,375V379.5"/>
<path class="k" d="M63.2,373.3V380.2"/><path class="u" d="M63.2,374V379.5"/>
<path class="k" d="M64.9,373.3V384.6"/><path class="d" d="M64.9,374V383.9"/>
<path class="k" d="M66.7,378.7V384.6"/><path class="u" d="M66.7,379.4V383.9"/>
<path class="k" d="M68.4,378.7V387.5"/><path class="d" d="M68.4,379.4V386.8"/>
<path class="k" d="M70.1,382.8V387.5"/><path class="u" d="M70.1,383.5V386.8"/>
<path class="k" d="M71.8,382.8V385.2"/><path class="d" d="M71.8,383.5V384.5"/>
<path class="k" d="M73.5,383.9V387.2"/><path class="d" d="M73.5,384.6V386.5"/>
<path class="k" d="M75.2,386.1V390.3"/><path class="d" d="M75.2,386.8V389.6"/>
<path class="k" d="M76.9,385.7V390.3"/><path class="u" d="M76.9,386.4V389.6"/>
<path class="k" d="M78.6,385.7V389.8"/><path class="d" d="M78.6,386.4V389.1"/>
<path class="k" d="M80.3,380.7V387.9"/><path class="u" d="M80.3,381.4V387.2"/>
<path class="k" d="M82,381.5V384.5"/><path class="d" d="M82,382.2V383.8"/>
<path class="k" d="M83.7,383.1V387.6"/><path class="d" d="M83.7,383.8V386.9"/>
<path class="k" d="M85.4,386.2V389.9"/><path class="d" d="M85.4,386.9V389.2"/>
<path class="k" d="M87.1,383.8V389.9"/><path class="u" d="M87.1,384.5V389.2"/>
<path class="k" d="M88.8,383.8V389.5"/><path class="d" d="M88.8,384.5V388.8"/>
<path class="k" d="M90.5,382.4V389.5"/><path class="u" d="M90.5,383.1V388.8"/>
<path class="k" d="M92.2,382.4V386.1"/><path class="d" d="M92.2,383.1V385.4"/>
<path class="k" d="M93.9,379.5V386.1"/><path class="u" d="M93.9,380.2V385.4"/>
<path class="k" d="M95.6,381.3V387.2"/><path class="d" d="M95.6,382V386.5"/>
<path class="k" d="M97.3,385.8V393.7"/><path class="d" d="M97.3,386.5V393"/>
<path class="k" d="M99,385.5V393.7"/><path class="u" d="M99,386.2V393"/>
<path class="k" d="M100.8,385.5V391"/><path class="d" d="M100.8,386.2V390.3"/>
<path class="k" d="M102.5,386.5V388.9"/><path class="u" d="M102.5,387.2V388.2"/>
<path class="k" d="M104.2,368.3V382.4"/><path class="u" d="M104.2,369V381.7"/>
<path class="k" d="M105.9,368.3V374.6"/><path class="d" d="M105.9,369V373.9"/>
<path class="k" d="M107.6,376.3V384.3"/><path class="d" d="M107.6,377V383.6"/>
<path class="k" d="M109.3,396V406.9"/><path class="d" d="M109.3,396.7V406.2"/>
<path class="k" d="M111,405.5V407.9"/><path class="d" d="M111,406.2V407.2"/>
<path class="k" d="M112.7,398.3V404.8"/><path class="u" d="M112.7,399V404.1"/>
<path class="k" d="M114.4,386.7V397.5"/><path class="u" d="M114.4,387.4V396.8"/>
<path class="k" d="M116.1,383.6V388.1"/><path class="u" d="M116.1,384.3V387.4"/>
<path class="k" d="M117.8,383.6V390.4"/><path class="d" d="M117.8,384.3V389.7"/>
<path class="k" d="M119.5,385.7V390.4"/><path class="u" d="M119.5,386.4V389.7"/>
<path class="k" d="M121.2,385.7V391.2"/><path class="d" d="M121.2,386.4V390.5"/>
<path class="k" d="M122.9,383.3V391.2"/><path class="u" d="M122.9,384V390.5"/>
<path class="k" d="M124.6,383.3V391.5"/><path class="d" d="M124.6,384V390.8"/>
<path class="k" d="M126.3,390.1V398.1"/><path class="d" d="M126.3,390.8V397.4"/>
<path class="k" d="M128,394.1V398.1"/><path class="u" d="M128,394.8V397.4"/>
<path class="k" d="M129.7,389.8V395.5"/><path class="u" d="M129.7,390.5V394.8"/>
<path class="k" d="M131.4,389.8V395.2"/><path class="d" d="M131.4,390.5V394.5"/>
<path class="k" d="M133.1,388.9V395.2"/><path class="u" d="M133.1,389.6V394.5"/>
<path class="k" d="M134.9,388.9V398.8"/><path class="d" d="M134.9,389.6V398.1"/>
<path class="k" d="M136.6,389.9V398.8"/><path class="u" d="M136.6,390.6V398.1"/>
<path class="k" d="M138.3,389.9V394.8"/><path class="d" d="M138.3,390.6V394.1"/>
<path class="k" d="M140,386.8V394.8"/><path class="u" d="M140,387.5V394.1"/>
<path class="k" d="M141.7,385.8V388.2"/><path class="u" d="M141.7,386.5V387.5"/>
<path class="k" d="M143.4,368.4V374.3"/><path class="u" d="M143.4,369.1V373.6"/>
<path class="k" d="M145.1,341.4V352.3"/><path class="u" d="M145.1,342.1V351.6"/>
<path class="k" d="M146.8,312.8V342.8"/><path class="u" d="M146.8,313.5V342.1"/>
<path class="k" d="M148.5,312.8V325.8"/><path class="d" d="M148.5,313.5V325.1"/>
<path class="k" d="M150.2,308.6V325.8"/><path class="u" d="M150.2,309.3V325.1"/>
<path class="k" d="M151.9,319V327.8"/><path class="d" d="M151.9,319.7V327.1"/>
<path class="k" d="M153.6,327.8V331.1"/><path class="d" d="M153.6,328.5V330.4"/>
<path class="k" d="M155.3,332.1V343.9"/><path class="d" d="M155.3,332.8V343.2"/>
<path class="k" d="M157,342.5V349"/><path class="d" d="M157,343.2V348.3"/>
<path class="k" d="M158.7,347.6V351.7"/><path class="d" d="M158.7,348.3V351"/>
<path class="k" d="M160.4,349V351.7"/><path class="u" d="M160.4,349.7V351"/>
<path class="k" d="M162.1,338.9V346.4"/><path class="u" d="M162.1,339.6V345.7"/>
<path class="k" d="M163.8,325.8V338.5"/><path class="u" d="M163.8,326.5V337.8"/>
<path class="k" d="M165.5,308.4V327.2"/><path class="u" d="M165.5,309.1V326.5"/>
<path class="k" d="M167.2,308.4V319.7"/><path class="d" d="M167.2,309.1V319"/>
<path class="k" d="M169,310.3V319.7"/><path class="u" d="M169,311V319"/>
<path class="k" d="M170.7,312.6V321.6"/><path class="d" d="M170.7,313.3V320.9"/>
<path class="k" d="M172.4,320.2V323.9"/><path class="d" d="M172.4,320.9V323.2"/>
<path class="k" d="M174.1,304.9V318.8"/><path class="u" d="M174.1,305.6V318.1"/>
<path class="k" d="M175.8,291.4V306.3"/><path class="u" d="M175.8,292.1V305.6"/>
<path class="k" d="M177.5,291.8V303.2"/><path class="d" d="M177.5,292.5V302.5"/>
<path class="k" d="M179.2,301.8V314"/><path class="d" d="M179.2,302.5V313.3"/>
<path class="k" d="M180.9,304V314"/><path class="u" d="M180.9,304.7V313.3"/>
<path class="k" d="M182.6,307.8V320.7"/><path class="d" d="M182.6,308.5V320"/>
<path class="k" d="M184.3,319.3V321.7"/><path class="d" d="M184.3,320V321"/>
<path class="k" d="M186,320.3V333.4"/><path class="d" d="M186,321V332.7"/>
<path class="k" d="M187.7,318V333"/><path class="u" d="M187.7,318.7V332.3"/>
<path class="k" d="M189.4,316.1V319.4"/><path class="u" d="M189.4,316.8V318.7"/>
<path class="k" d="M191.1,315.1V317.5"/><path class="u" d="M191.1,315.8V316.8"/>
<path class="k" d="M192.8,308.4V310.8"/><path class="d" d="M192.8,309.1V310.1"/>
<path class="k" d="M194.5,289.2V300.7"/><path class="u" d="M194.5,289.9V300"/>
<path class="k" d="M196.2,282.7V290.6"/><path class="u" d="M196.2,283.4V289.9"/>
<path class="k" d="M197.9,278.5V284.1"/><path class="u" d="M197.9,279.2V283.4"/>
<path class="k" d="M199.6,276V279.9"/><path class="u" d="M199.6,276.7V279.2"/>
<path class="k" d="M201.3,269.5V277.4"/><path class="u" d="M201.3,270.2V276.7"/>
<path class="k" d="M203.1,269.5V273.9"/><path class="d" d="M203.1,270.2V273.2"/>
<path class="k" d="M204.8,259.8V273.9"/><path class="u" d="M204.8,260.5V273.2"/>
<path class="k" d="M206.5,250V261.2"/><path class="u" d="M206.5,250.7V260.5"/>
<path class="k" d="M208.2,232.5V251.4"/><path class="u" d="M208.2,233.2V250.7"/>
<path class="k" d="M209.9,179.1V227.7"/><path class="u" d="M209.9,179.8V227"/>
<path class="k" d="M211.6,175.1V180.5"/><path class="u" d="M211.6,175.8V179.8"/>
<path class="k" d="M213.3,165.2V176.5"/><path class="u" d="M213.3,165.9V175.8"/>
<path class="k" d="M215,165.2V172.9"/><path class="d" d="M215,165.9V172.2"/>
<path class="k" d="M216.7,147.7V166.9"/><path class="u" d="M216.7,148.4V166.2"/>
<path class="k" d="M218.4,147.7V156.7"/><path class="d" d="M218.4,148.4V156"/>
<path class="k" d="M220.1,137.7V156.5"/><path class="u" d="M220.1,138.4V155.8"/>
<path class="k" d="M221.8,145.2V155.2"/><path class="d" d="M221.8,145.9V154.5"/>
<path class="k" d="M223.5,153.8V164.2"/><path class="d" d="M223.5,154.5V163.5"/>
<path class="k" d="M225.2,160.8V164.2"/><path class="u" d="M225.2,161.5V163.5"/>
<path class="k" d="M226.9,174V195.6"/><path class="d" d="M226.9,174.7V194.9"/>
<path class="k" d="M228.6,179.1V195.6"/><path class="u" d="M228.6,179.8V194.9"/>
<path class="k" d="M230.3,175.9V180.5"/><path class="u" d="M230.3,176.6V179.8"/>
<path class="k" d="M232,171.2V177.3"/><path class="u" d="M232,171.9V176.6"/>
<path class="k" d="M233.7,171.2V176.3"/><path class="d" d="M233.7,171.9V175.6"/>
<path class="k" d="M235.4,173V176.3"/><path class="u" d="M235.4,173.7V175.6"/>
<path class="k" d="M237.2,180.8V203.7"/><path class="d" d="M237.2,181.5V203"/>
<path class="k" d="M238.9,202.3V212.8"/><path class="d" d="M238.9,203V212.1"/>
<path class="k" d="M240.6,190.6V201.1"/><path class="u" d="M240.6,191.3V200.4"/>
<path class="k" d="M242.3,173.2V191.5"/><path class="u" d="M242.3,173.9V190.8"/>
<path class="k" d="M244,170.8V174.6"/><path class="u" d="M244,171.5V173.9"/>
<path class="k" d="M245.7,162.2V172.2"/><path class="u" d="M245.7,162.9V171.5"/>
<path class="k" d="M247.4,162.2V170.6"/><path class="d" d="M247.4,162.9V169.9"/>
<path class="k" d="M249.1,163.7V170.6"/><path class="u" d="M249.1,164.4V169.9"/>
<path class="k" d="M250.8,165.6V169.1"/><path class="d" d="M250.8,166.3V168.4"/>
<path class="k" d="M252.5,179.8V194.1"/><path class="d" d="M252.5,180.5V193.4"/>
<path class="k" d="M254.2,181V194.1"/><path class="u" d="M254.2,181.7V193.4"/>
<path class="k" d="M255.9,166.5V182.4"/><path class="u" d="M255.9,167.2V181.7"/>
<path class="k" d="M257.6,166.5V176.2"/><path class="d" d="M257.6,167.2V175.5"/>
<path class="k" d="M259.3,169.3V176.2"/><path class="u" d="M259.3,170V175.5"/>
<path class="k" d="M261,171.4V181.7"/><path class="d" d="M261,172.1V181"/>
<path class="k" d="M262.7,177.3V181.7"/><path class="u" d="M262.7,178V181"/>
<path class="k" d="M264.4,177.6V185.7"/><path class="d" d="M264.4,178.3V185"/>
<path class="k" d="M266.1,172.2V185.7"/><path class="u" d="M266.1,172.9V185"/>
<path class="k" d="M267.8,172.2V178.2"/><path class="d" d="M267.8,172.9V177.5"/>
<path class="k" d="M269.5,165.7V178.2"/><path class="u" d="M269.5,166.4V177.5"/>
<path class="k" d="M271.3,135.7V166.3"/><path class="u" d="M271.3,136.4V165.6"/>
<path class="k" d="M273,128.1V137.1"/><path class="u" d="M273,128.8V136.4"/>
<path class="k" d="M274.7,96.4V126"/><path class="u" d="M274.7,97.1V125.3"/>
<path class="k" d="M276.4,72V88.1"/><path class="u" d="M276.4,72.7V87.4"/>
<path class="k" d="M278.1,74.8V85"/><path class="d" d="M278.1,75.5V84.3"/>
<path class="k" d="M279.8,83.6V93.6"/><path class="d" d="M279.8,84.3V92.9"/>
<path class="k" d="M281.5,92.2V106.2"/><path class="d" d="M281.5,92.9V105.5"/>
<path class="k" d="M283.2,104.8V121"/><path class="d" d="M283.2,105.5V120.3"/>
<path class="k" d="M284.9,119.6V123.9"/><path class="d" d="M284.9,120.3V123.2"/>
<path class="k" d="M286.6,122.5V132.7"/><path class="d" d="M286.6,123.2V132"/>
<path class="k" d="M288.3,119.6V132.7"/><path class="u" d="M288.3,120.3V132"/>
<path class="k" d="M290,108.5V121"/><path class="u" d="M290,109.2V120.3"/>
<path class="k" d="M291.7,87.5V106.3"/><path class="u" d="M291.7,88.2V105.6"/>
<path class="k" d="M293.4,86.5V88.9"/><path class="u" d="M293.4,87.2V88.2"/>
<path class="k" d="M295.1,101V124.6"/><path class="d" d="M295.1,101.7V123.9"/>
<path class="k" d="M296.8,123.2V145.6"/><path class="d" d="M296.8,123.9V144.9"/>
<path class="k" d="M298.5,144.2V163.3"/><path class="d" d="M298.5,144.9V162.6"/>
<path class="k" d="M300.2,146.9V157.7"/><path class="u" d="M300.2,147.6V157"/>
<path class="k" d="M301.9,136.5V148.3"/><path class="u" d="M301.9,137.2V147.6"/>
<path class="k" d="M303.6,137.1V150.8"/><path class="d" d="M303.6,137.8V150.1"/>
<path class="k" d="M305.4,143V150.8"/><path class="u" d="M305.4,143.7V150.1"/>
<path class="k" d="M307.1,143V149.8"/><path class="d" d="M307.1,143.7V149.1"/>
<path class="k" d="M308.8,143.5V149.8"/><path class="u" d="M308.8,144.2V149.1"/>
<path class="k" d="M310.5,140V144.9"/><path class="u" d="M310.5,140.7V144.2"/>
<path class="k" d="M312.2,141.5V152.4"/><path class="d" d="M312.2,142.2V151.7"/>
<path class="k" d="M313.9,149.6V152.4"/><path class="u" d="M313.9,150.3V151.7"/>
<path class="k" d="M315.6,149.6V159.2"/><path class="d" d="M315.6,150.3V158.5"/>
<path class="k" d="M317.3,157.8V169.6"/><path class="d" d="M317.3,158.5V168.9"/>
<path class="k" d="M319,168.2V177.1"/><path class="d" d="M319,168.9V176.4"/>
<path class="k" d="M320.7,176.3V193.7"/><path class="d" d="M320.7,177V193"/>
<path class="k" d="M322.4,192.3V219.5"/><path class="d" d="M322.4,193V218.8"/>
<path class="k" d="M324.1,201.7V219.5"/><path class="u" d="M324.1,202.4V218.8"/>
<path class="k" d="M325.8,206V223.8"/><path class="d" d="M325.8,206.7V223.1"/>
<path class="k" d="M327.5,211.7V223.8"/><path class="u" d="M327.5,212.4V223.1"/>
<path class="k" d="M329.2,211.7V217.4"/><path class="d" d="M329.2,212.4V216.7"/>
<path class="k" d="M330.9,200.1V217.4"/><path class="u" d="M330.9,200.8V216.7"/>
<path class="k" d="M332.6,183.8V201.5"/><path class="u" d="M332.6,184.5V200.8"/>
<path class="k" d="M334.3,183.8V197.6"/><path class="d" d="M334.3,184.5V196.9"/>
<path class="k" d="M336,187.4V197.6"/><path class="u" d="M336,188.1V196.9"/>
<path class="k" d="M337.7,188.5V205.7"/><path class="d" d="M337.7,189.2V205"/>
<path class="k" d="M339.5,204.3V207.5"/><path class="d" d="M339.5,205V206.8"/>
<path class="k" d="M341.2,206.1V221.5"/><path class="d" d="M341.2,206.8V220.8"/>
<path class="k" d="M342.9,204V221.5"/><path class="u" d="M342.9,204.7V220.8"/>
<path class="k" d="M344.6,205V214.2"/><path class="d" d="M344.6,205.7V213.5"/>
<path class="k" d="M346.3,212.8V219.8"/><path class="d" d="M346.3,213.5V219.1"/>
<path class="k" d="M348,218.4V229.7"/><path class="d" d="M348,219.1V229"/>
<path class="k" d="M349.7,225.4V229.7"/><path class="u" d="M349.7,226.1V229"/>
<path class="k" d="M351.4,228.8V249.8"/><path class="d" d="M351.4,229.5V249.1"/>
<path class="k" d="M353.1,248.4V257.6"/><path class="d" d="M353.1,249.1V256.9"/>
<path class="k" d="M354.8,252.8V257.6"/><path class="u" d="M354.8,253.5V256.9"/>
<path class="k" d="M356.5,252.8V281.6"/><path class="d" d="M356.5,253.5V280.9"/>
<path class="k" d="M358.2,263.8V281.6"/><path class="u" d="M358.2,264.5V280.9"/>
<path class="k" d="M359.9,280.4V304.6"/><path class="d" d="M359.9,281.1V303.9"/>
<path class="k" d="M361.6,283.8V304.6"/><path class="u" d="M361.6,284.5V303.9"/>
<path class="k" d="M363.3,270.5V285.2"/><path class="u" d="M363.3,271.2V284.5"/>
<path class="k" d="M365,270.5V284.6"/><path class="d" d="M365,271.2V283.9"/>
<path class="k" d="M366.7,268.9V278.6"/><path class="u" d="M366.7,269.6V277.9"/>
<path class="k" d="M368.4,268.9V278.4"/><path class="d" d="M368.4,269.6V277.7"/>
<path class="k" d="M370.1,272.6V278.4"/><path class="u" d="M370.1,273.3V277.7"/>
<path class="k" d="M371.8,267.8V274"/><path class="u" d="M371.8,268.5V273.3"/>
<path class="k" d="M373.6,261.5V269.2"/><path class="u" d="M373.6,262.2V268.5"/>
<path class="k" d="M375.3,258.7V262.9"/><path class="u" d="M375.3,259.4V262.2"/>
<path class="k" d="M377,255.8V260.1"/><path class="u" d="M377,256.5V259.4"/>
<path class="k" d="M378.7,255.8V265.1"/><path class="d" d="M378.7,256.5V264.4"/>
<path class="k" d="M380.4,259.3V265.1"/><path class="u" d="M380.4,260V264.4"/>
<path class="k" d="M382.1,252.6V260.7"/><path class="u" d="M382.1,253.3V260"/>
<path class="k" d="M383.8,252.6V260.1"/><path class="d" d="M383.8,253.3V259.4"/>
<path class="k" d="M385.5,249.3V260.1"/><path class="u" d="M385.5,250V259.4"/>
<path class="k" d="M387.2,249.3V261"/><path class="d" d="M387.2,250V260.3"/>
<path class="k" d="M388.9,259.6V267.9"/><path class="d" d="M388.9,260.3V267.2"/>
<path class="k" d="M390.6,266.5V272.2"/><path class="d" d="M390.6,267.2V271.5"/>
<path class="k" d="M392.3,272V280.5"/><path class="d" d="M392.3,272.7V279.8"/>
<path class="k" d="M394,279.3V293.6"/><path class="d" d="M394,280V292.9"/>
<path class="k" d="M395.7,279.4V293.6"/><path class="u" d="M395.7,280.1V292.9"/>
<path class="k" d="M397.4,279.4V291"/><path class="d" d="M397.4,280.1V290.3"/>
<path class="k" d="M399.1,281V287.7"/><path class="u" d="M399.1,281.7V287"/>
<path class="k" d="M400.8,281V286.3"/><path class="d" d="M400.8,281.7V285.6"/>
<path class="k" d="M402.5,284.9V287.5"/><path class="d" d="M402.5,285.6V286.8"/>
<path class="k" d="M404.2,286.7V299.1"/><path class="d" d="M404.2,287.4V298.4"/>
<path class="k" d="M405.9,297.7V307.2"/><path class="d" d="M405.9,298.4V306.5"/>
<path class="k" d="M407.7,305.8V318.5"/><path class="d" d="M407.7,306.5V317.8"/>
<path class="k" d="M409.4,305.7V318.5"/><path class="u" d="M409.4,306.4V317.8"/>
<path class="k" d="M411.1,308.2V313.7"/><path class="d" d="M411.1,308.9V313"/>
<path class="k" d="M412.8,313.9V328.2"/><path class="d" d="M412.8,314.6V327.5"/>
<path class="k" d="M414.5,326.8V337.7"/><path class="d" d="M414.5,327.5V337"/>
<path class="k" d="M416.2,314.5V337.7"/><path class="u" d="M416.2,315.2V337"/>
<path class="k" d="M417.9,314.5V329"/><path class="d" d="M417.9,315.2V328.3"/>
<path class="k" d="M419.6,317.3V329"/><path class="u" d="M419.6,318V328.3"/>
<path class="k" d="M421.3,317.3V333.9"/><path class="d" d="M421.3,318V333.2"/>
<path class="k" d="M423,339.6V363.3"/><path class="d" d="M423,340.3V362.6"/>
<path class="k" d="M424.7,363.3V382.9"/><path class="d" d="M424.7,364V382.2"/>
<path class="k" d="M426.4,381.5V390.5"/><path class="d" d="M426.4,382.2V389.8"/>
<path class="k" d="M428.1,378V390.5"/><path class="u" d="M428.1,378.7V389.8"/>
<path class="k" d="M429.8,378V382.7"/><path class="d" d="M429.8,378.7V382"/>
<path class="k" d="M431.5,364.4V373.4"/><path class="u" d="M431.5,365.1V372.7"/>
<path class="k" d="M433.2,364.4V373.3"/><path class="d" d="M433.2,365.1V372.6"/>
<path class="k" d="M434.9,366.3V373.3"/><path class="u" d="M434.9,367V372.6"/>
<path class="k" d="M436.6,367V375.2"/><path class="d" d="M436.6,367.7V374.5"/>
<path class="k" d="M438.3,369.5V375.2"/><path class="u" d="M438.3,370.2V374.5"/>
<path class="k" d="M440,369.5V375.2"/><path class="d" d="M440,370.2V374.5"/>
<path class="k" d="M441.8,370.6V375.2"/><path class="u" d="M441.8,371.3V374.5"/>
<path class="k" d="M443.5,370.6V377.3"/><path class="d" d="M443.5,371.3V376.6"/>
<path class="k" d="M445.2,375.9V387.3"/><path class="d" d="M445.2,376.6V386.6"/>
<path class="k" d="M446.9,385.9V388.3"/><path class="d" d="M446.9,386.6V387.6"/>
<path class="k" d="M448.6,377.1V388.3"/><path class="u" d="M448.6,377.8V387.6"/>
<path class="k" d="M450.3,377.1V382"/><path class="d" d="M450.3,377.8V381.3"/>
<path class="k" d="M452,380.6V389.1"/><path class="d" d="M452,381.3V388.4"/>
<path class="k" d="M453.7,384.6V389.1"/><path class="u" d="M453.7,385.3V388.4"/>
<path class="k" d="M455.4,385.3V387.7"/><path class="d" d="M455.4,386V387"/>
<path class="k" d="M457.1,387.1V389.5"/><path class="u" d="M457.1,387.8V388.8"/>
<path class="k" d="M458.8,391V402"/><path class="d" d="M458.8,391.7V401.3"/>
<path class="k" d="M460.5,393.1V402"/><path class="u" d="M460.5,393.8V401.3"/>
<path class="k" d="M462.2,394.1V400.4"/><path class="d" d="M462.2,394.8V399.7"/>
<path class="k" d="M463.9,394.1V399.1"/><path class="u" d="M463.9,394.8V398.4"/>
<path class="k" d="M465.6,393V395.5"/><path class="u" d="M465.6,393.7V394.8"/>
<path class="k" d="M467.3,388V394.4"/><path class="u" d="M467.3,388.7V393.7"/>
<path class="k" d="M469,382.6V389.4"/><path class="u" d="M469,383.3V388.7"/>
<path class="k" d="M470.7,377.1V384"/><path class="u" d="M470.7,377.8V383.3"/>
<path class="k" d="M472.4,370V378.5"/><path class="u" d="M472.4,370.7V377.8"/>
<path class="k" d="M474.1,366.4V371.4"/><path class="u" d="M474.1,367.1V370.7"/>
<path class="k" d="M475.9,366.4V370.3"/><path class="d" d="M475.9,367.1V369.6"/>
<path class="k" d="M477.6,366.6V370.3"/><path class="u" d="M477.6,367.3V369.6"/>
<path class="k" d="M479.3,363V368"/><path class="u" d="M479.3,363.7V367.3"/>
<path class="k" d="M481,361.3V364.4"/><path class="u" d="M481,362V363.7"/>
<path class="k" d="M482.7,354.6V362.7"/><path class="u" d="M482.7,355.3V362"/>
<path class="k" d="M484.4,353.6V356"/><path class="u" d="M484.4,354.3V355.3"/>
<path class="k" d="M486.1,353.6V356"/><path class="d" d="M486.1,354.3V355.3"/>
<path class="k" d="M487.8,342V353.1"/><path class="u" d="M487.8,342.7V352.4"/>
<path class="k" d="M489.5,343.8V352.1"/><path class="d" d="M489.5,344.5V351.4"/>
<path class="k" d="M491.2,346.8V352.1"/><path class="u" d="M491.2,347.5V351.4"/>
<path class="k" d="M492.9,346.8V352.6"/><path class="d" d="M492.9,347.5V351.9"/>
<path class="k" d="M494.6,348V352.6"/><path class="u" d="M494.6,348.7V351.9"/>
<path class="k" d="M496.3,350.2V357.6"/><path class="d" d="M496.3,350.9V356.9"/>
<path class="k" d="M498,356.2V365.5"/><path class="d" d="M498,356.9V364.8"/>
<path class="k" d="M499.7,364.1V373.8"/><path class="d" d="M499.7,364.8V373.1"/>
<path class="k" d="M501.4,372.4V381.8"/><path class="d" d="M501.4,373.1V381.1"/>
<path class="k" d="M503.1,380.4V390.4"/><path class="d" d="M503.1,381.1V389.7"/>
<path class="k" d="M504.8,389V393.1"/><path class="d" d="M504.8,389.7V392.4"/>
<path class="k" d="M506.5,393V406.7"/><path class="d" d="M506.5,393.7V406"/>
<path class="k" d="M508.2,405.3V413"/><path class="d" d="M508.2,406V412.3"/>
<path class="k" d="M510,404.6V413"/><path class="u" d="M510,405.3V412.3"/>
<path class="k" d="M511.7,404.6V414.1"/><path class="d" d="M511.7,405.3V413.4"/>
<path class="k" d="M513.4,405.3V414.1"/><path class="u" d="M513.4,406V413.4"/>
<path class="k" d="M515.1,405.3V414.4"/><path class="d" d="M515.1,406V413.7"/>
<path class="k" d="M516.8,411.2V414.4"/><path class="u" d="M516.8,411.9V413.7"/>
<path class="k" d="M518.5,411.2V415.8"/><path class="d" d="M518.5,411.9V415.1"/>
<path class="k" d="M520.2,411.4V415.8"/><path class="u" d="M520.2,412.1V415.1"/>
<path class="k" d="M521.9,411.4V417.4"/><path class="d" d="M521.9,412.1V416.7"/>
<path class="k" d="M523.6,411.7V416.6"/><path class="u" d="M523.6,412.4V415.9"/>
<path class="k" d="M525.3,411.7V414.1"/><path class="d" d="M525.3,412.4V413.4"/>
<path class="k" d="M527,412.7V415.1"/><path class="d" d="M527,413.4V414.4"/>
<path class="k" d="M528.7,411.4V415.1"/><path class="u" d="M528.7,412.1V414.4"/>
<path class="k" d="M530.4,411.4V417.3"/><path class="d" d="M530.4,412.1V416.6"/>
<path class="k" d="M532.1,415.9V420.8"/><path class="d" d="M532.1,416.6V420.1"/>
<path class="k" d="M533.8,419.4V431.6"/><path class="d" d="M533.8,420.1V430.9"/>
<path class="k" d="M535.5,430.2V441.7"/><path class="d" d="M535.5,430.9V441"/>
<path class="k" d="M537.2,443.8V461.7"/><path class="d" d="M537.2,444.5V461"/>
<path class="k" d="M538.9,456.3V461.7"/><path class="u" d="M538.9,457V461"/>
<path class="k" d="M540.6,451.1V457.7"/><path class="u" d="M540.6,451.8V457"/>
<path class="k" d="M542.3,449.9V452.5"/><path class="u" d="M542.3,450.6V451.8"/>
<path class="k" d="M544.1,451.4V459.1"/><path class="d" d="M544.1,452.1V458.4"/>
<path class="k" d="M545.8,452.2V459.1"/><path class="u" d="M545.8,452.9V458.4"/>
<path class="k" d="M547.5,432.3V448.5"/><path class="u" d="M547.5,433V447.8"/>
<path class="k" d="M549.2,420.2V431.9"/><path class="u" d="M549.2,420.9V431.2"/>
<path class="k" d="M550.9,415V421.6"/><path class="u" d="M550.9,415.7V420.9"/>
<path class="k" d="M552.6,415V438.3"/><path class="d" d="M552.6,415.7V437.6"/>
<path class="k" d="M554.3,440.5V447.4"/><path class="d" d="M554.3,441.2V446.7"/>
<path class="k" d="M556,451.7V460"/><path class="d" d="M556,452.4V459.3"/>
<path class="k" d="M557.7,458.6V472.9"/><path class="d" d="M557.7,459.3V472.2"/>
<path class="k" d="M559.4,469.3V472.9"/><path class="u" d="M559.4,470V472.2"/>
<path class="k" d="M561.1,469.3V483.2"/><path class="d" d="M561.1,470V482.5"/>
<path class="k" d="M562.8,471.1V477.9"/><path class="u" d="M562.8,471.8V477.2"/>
<path class="k" d="M564.5,469.2V472.5"/><path class="u" d="M564.5,469.9V471.8"/>
<path class="k" d="M566.2,469.2V471.8"/><path class="d" d="M566.2,469.9V471.1"/>
<path class="k" d="M567.9,467.4V471.8"/><path class="u" d="M567.9,468.1V471.1"/>
<path class="k" d="M569.6,466.4V468.8"/><path class="u" d="M569.6,467.1V468.1"/>
<path class="k" d="M571.3,450.9V467.8"/><path class="u" d="M571.3,451.6V467.1"/>
<path class="k" d="M573,450.9V462.6"/><path class="d" d="M573,451.6V461.9"/>
<path class="k" d="M574.7,461.2V465.5"/><path class="d" d="M574.7,461.9V464.8"/>
<path class="k" d="M576.4,464.1V469.3"/><path class="d" d="M576.4,464.8V468.6"/>
<path class="k" d="M578.2,464.2V469.3"/><path class="u" d="M578.2,464.9V468.6"/>
<path class="k" d="M579.9,457.2V465.6"/><path class="u" d="M579.9,457.9V464.9"/>
<path class="k" d="M581.6,455.9V458.6"/><path class="u" d="M581.6,456.6V457.9"/>
<path class="k" d="M583.3,454.8V457.3"/><path class="u" d="M583.3,455.5V456.6"/>
<path class="k" d="M585,448.5V451.2"/><path class="u" d="M585,449.2V450.5"/>
<path class="k" d="M586.7,442.2V446.7"/><path class="u" d="M586.7,442.9V446"/>
<path class="k" d="M588.4,442.2V445.7"/><path class="d" d="M588.4,442.9V445"/>
<path class="k" d="M590.1,441.2V445.7"/><path class="u" d="M590.1,441.9V445"/>
<path class="k" d="M591.8,441.2V445.1"/><path class="d" d="M591.8,441.9V444.4"/>
<path class="k" d="M593.5,441.1V445.1"/><path class="u" d="M593.5,441.8V444.4"/>
<path class="k" d="M595.2,429.6V439.2"/><path class="u" d="M595.2,430.3V438.5"/>
<path class="k" d="M596.9,413.1V426.9"/><path class="u" d="M596.9,413.8V426.2"/>
<path class="k" d="M598.6,406.2V414.5"/><path class="u" d="M598.6,406.9V413.8"/>
<path class="k" d="M600.3,406.2V413.2"/><path class="d" d="M600.3,406.9V412.5"/>
<path class="k" d="M602,404.3V412.7"/><path class="u" d="M602,405V412"/>
<path class="k" d="M603.7,404.3V408.1"/><path class="d" d="M603.7,405V407.4"/>
<path class="k" d="M605.4,405.5V408.1"/><path class="u" d="M605.4,406.2V407.4"/>
<path class="k" d="M607.1,405.5V413.1"/><path class="d" d="M607.1,406.2V412.4"/>
<path class="k" d="M608.8,406.1V413.1"/><path class="u" d="M608.8,406.8V412.4"/>
<path class="k" d="M610.5,413V424.1"/><path class="d" d="M610.5,413.7V423.4"/>
<path class="k" d="M612.3,422.7V434.4"/><path class="d" d="M612.3,423.4V433.7"/>
<path class="k" d="M614,433V437.2"/><path class="d" d="M614,433.7V436.5"/>
<path class="k" d="M615.7,434V437.2"/><path class="u" d="M615.7,434.7V436.5"/>
<path class="k" d="M617.4,440.8V460.2"/><path class="d" d="M617.4,441.5V459.5"/>
<path class="k" d="M619.1,448.1V460.2"/><path class="u" d="M619.1,448.8V459.5"/>
<path class="k" d="M620.8,444.5V449.5"/><path class="u" d="M620.8,445.2V448.8"/>
<path class="k" d="M622.5,442.9V445.3"/><path class="u" d="M622.5,443.6V444.6"/>
<path class="k" d="M624.2,436.8V443.3"/><path class="u" d="M624.2,437.5V442.6"/>
<path class="k" d="M625.9,431.4V438.2"/><path class="u" d="M625.9,432.1V437.5"/>
<path class="k" d="M627.6,427.2V432.8"/><path class="u" d="M627.6,427.9V432.1"/>
<path class="k" d="M629.3,422.8V428.6"/><path class="u" d="M629.3,423.5V427.9"/>
<path class="k" d="M631,423.3V432"/><path class="d" d="M631,424V431.3"/>
<path class="k" d="M632.7,430.6V435.8"/><path class="d" d="M632.7,431.3V435.1"/>
<path class="k" d="M634.4,421.8V429.3"/><path class="u" d="M634.4,422.5V428.6"/>
<path class="k" d="M636.1,421.8V424.2"/><path class="d" d="M636.1,422.5V423.5"/>
<path class="k" d="M637.8,434.6V445.1"/><path class="d" d="M637.8,435.3V444.4"/>
<path class="k" d="M639.5,436.8V442.5"/><path class="u" d="M639.5,437.5V441.8"/>
<path class="k" d="M641.2,427.5V435.1"/><path class="u" d="M641.2,428.2V434.4"/>
<path class="k" d="M642.9,427.5V430.8"/><path class="d" d="M642.9,428.2V430.1"/>
<path class="k" d="M644.6,429.4V434.5"/><path class="d" d="M644.6,430.1V433.8"/>
<path class="k" d="M646.4,433.6V440.6"/><path class="d" d="M646.4,434.3V439.9"/>
<path class="k" d="M648.1,439.2V446"/><path class="d" d="M648.1,439.9V445.3"/>
<path class="k" d="M649.8,444.6V452.3"/><path class="d" d="M649.8,445.3V451.6"/>
<path class="k" d="M651.5,448.9V452.3"/><path class="u" d="M651.5,449.6V451.6"/>
<path class="k" d="M653.2,451.2V460.7"/><path class="d" d="M653.2,451.9V460"/>
<path class="k" d="M654.9,448.7V460.7"/><path class="u" d="M654.9,449.4V460"/>
<path class="k" d="M656.6,440.2V450.1"/><path class="u" d="M656.6,440.9V449.4"/>
<path class="k" d="M658.3,434.4V441.6"/><path class="u" d="M658.3,435.1V440.9"/>
<path class="k" d="M660,434.4V439.4"/><path class="d" d="M660,435.1V438.7"/>
<path class="k" d="M661.7,435.6V439.4"/><path class="u" d="M661.7,436.3V438.7"/>
<path class="k" d="M663.4,441.9V450.3"/><path class="d" d="M663.4,442.6V449.6"/>
<path class="k" d="M665.1,448.9V452.7"/><path class="d" d="M665.1,449.6V452"/>
<path class="k" d="M666.8,451.3V455.3"/><path class="d" d="M666.8,452V454.6"/>
<path class="k" d="M668.5,450.6V455.3"/><path class="u" d="M668.5,451.3V454.6"/>
<path class="k" d="M670.2,446.7V452"/><path class="u" d="M670.2,447.4V451.3"/>
<path class="k" d="M671.9,433.8V438.7"/><path class="u" d="M671.9,434.5V438"/>
<path class="k" d="M673.6,420.5V431"/><path class="u" d="M673.6,421.2V430.3"/>
<path class="k" d="M675.3,417.6V421.9"/><path class="u" d="M675.3,418.3V421.2"/>
<path class="k" d="M677,406.9V419"/><path class="u" d="M677,407.6V418.3"/>
<path class="k" d="M678.7,406.9V414.3"/><path class="d" d="M678.7,407.6V413.6"/>
<path class="k" d="M680.5,412.9V416.7"/><path class="d" d="M680.5,413.6V416"/>
<path class="k" d="M682.2,410.6V416.7"/><path class="u" d="M682.2,411.3V416"/>
<path class="k" d="M683.9,410.6V415.3"/><path class="d" d="M683.9,411.3V414.6"/>
<path class="k" d="M685.6,446V455.3"/><path class="d" d="M685.6,446.7V454.6"/>
<path class="k" d="M687.3,455.3V457.7"/><path class="u" d="M687.3,456V457"/>
<path class="k" d="M689,455.3V460.7"/><path class="d" d="M689,456V460"/>
<path class="k" d="M690.7,451.4V458.4"/><path class="u" d="M690.7,452.1V457.7"/>
<path class="k" d="M692.4,451.4V456.2"/><path class="d" d="M692.4,452.1V455.5"/>
<path class="k" d="M694.1,453.5V456.2"/><path class="u" d="M694.1,454.2V455.5"/>
<path class="k" d="M695.8,452.2V454.9"/><path class="u" d="M695.8,452.9V454.2"/>
<path class="k" d="M697.5,443.3V450.7"/><path class="u" d="M697.5,444V450"/>
<path class="k" d="M699.2,432V440.3"/><path class="u" d="M699.2,432.7V439.6"/>
<path class="k" d="M700.9,428.4V433.4"/><path class="u" d="M700.9,429.1V432.7"/>
<path class="k" d="M702.6,426V429.8"/><path class="u" d="M702.6,426.7V429.1"/>
<path class="k" d="M704.3,426V434"/><path class="d" d="M704.3,426.7V433.3"/>
<path class="k" d="M706,426.3V434"/><path class="u" d="M706,427V433.3"/>
<path class="k" d="M707.7,426.3V428.9"/><path class="d" d="M707.7,427V428.2"/>
<path class="k" d="M709.4,427.5V436.6"/><path class="d" d="M709.4,428.2V435.9"/>
<path class="k" d="M711.1,431.7V436.6"/><path class="u" d="M711.1,432.4V435.9"/>
<path class="k" d="M712.8,431.7V442.7"/><path class="d" d="M712.8,432.4V442"/>
<path class="k" d="M714.6,433.6V442.7"/><path class="u" d="M714.6,434.3V442"/>
<path class="k" d="M716.3,433.6V443.9"/><path class="d" d="M716.3,434.3V443.2"/>
<path class="k" d="M718,437.4V439.8"/><path class="d" d="M718,438.1V439.1"/>
<path class="k" d="M719.7,430.1V438.7"/><path class="u" d="M719.7,430.8V438"/>
<path class="k" d="M721.4,430.1V436.9"/><path class="d" d="M721.4,430.8V436.2"/>
<path class="k" d="M723.1,432V436.9"/><path class="u" d="M723.1,432.7V436.2"/>
<path class="k" d="M724.8,435.6V446.4"/><path class="d" d="M724.8,436.3V445.7"/>
<path class="k" d="M726.5,445V455"/><path class="d" d="M726.5,445.7V454.3"/>
<path class="k" d="M728.2,445.7V452.8"/><path class="u" d="M728.2,446.4V452.1"/>
<path class="k" d="M729.9,445.7V449.7"/><path class="d" d="M729.9,446.4V449"/>
<path class="k" d="M731.6,443.3V449.7"/><path class="u" d="M731.6,444V449"/>
<path class="k" d="M733.3,447.7V455.7"/><path class="d" d="M733.3,448.4V455"/>
<path class="k" d="M735,453.3V455.7"/><path class="u" d="M735,454V455"/>
<path class="k" d="M736.7,459V468"/><path class="d" d="M736.7,459.7V467.3"/>
<path class="k" d="M738.4,466.6V472.6"/><path class="d" d="M738.4,467.3V471.9"/>
<path class="k" d="M740.1,467.8V472.6"/><path class="u" d="M740.1,468.5V471.9"/>
<path class="k" d="M741.8,466.8V469.2"/><path class="u" d="M741.8,467.5V468.5"/>
<path class="k" d="M743.5,460.6V468.2"/><path class="u" d="M743.5,461.3V467.5"/>
<path class="k" d="M745.2,456.3V462"/><path class="u" d="M745.2,457V461.3"/>
<path class="k" d="M746.9,450.4V457.7"/><path class="u" d="M746.9,451.1V457"/>
<path class="k" d="M748.7,446.3V451.8"/><path class="u" d="M748.7,447V451.1"/>
<path class="k" d="M750.4,445.2V447.7"/><path class="u" d="M750.4,445.9V447"/>
<path class="k" d="M752.1,443.3V446.6"/><path class="u" d="M752.1,444V445.9"/>
<path class="k" d="M753.8,443.3V447.2"/><path class="d" d="M753.8,444V446.5"/>
<path class="k" d="M755.5,445.8V452.1"/><path class="d" d="M755.5,446.5V451.4"/>
<path class="k" d="M757.2,440.9V449.8"/><path class="u" d="M757.2,441.6V449.1"/>
<path class="k" d="M758.9,440.9V443.3"/><path class="d" d="M758.9,441.6V442.6"/>
<path class="k" d="M760.6,438.4V443.2"/><path class="u" d="M760.6,439.1V442.5"/>
<path class="k" d="M762.3,438.4V442.1"/><path class="d" d="M762.3,439.1V441.4"/>
<path class="k" d="M764,435.3V440"/><path class="u" d="M764,436V439.3"/>
<path class="k" d="M765.7,431.9V436.7"/><path class="u" d="M765.7,432.6V436"/>
<path class="k" d="M767.4,431.9V436.3"/><path class="d" d="M767.4,432.6V435.6"/>
<path class="k" d="M769.1,427.3V434.5"/><path class="u" d="M769.1,428V433.8"/>
<path class="k" d="M770.8,420V428.7"/><path class="u" d="M770.8,420.7V428"/>
<path class="k" d="M772.5,421.3V432.3"/><path class="d" d="M772.5,422V431.6"/>
<path class="k" d="M774.2,425.8V432.3"/><path class="u" d="M774.2,426.5V431.6"/>
<path class="k" d="M775.9,417.7V427"/><path class="u" d="M775.9,418.4V426.3"/>
<path class="k" d="M777.6,417.7V427.3"/><path class="d" d="M777.6,418.4V426.6"/>
<path class="k" d="M779.3,425.9V434.5"/><path class="d" d="M779.3,426.6V433.8"/>
<path class="k" d="M781,433.1V440"/><path class="d" d="M781,433.8V439.3"/>
<path class="k" d="M782.8,433.7V440"/><path class="u" d="M782.8,434.4V439.3"/>
<path class="k" d="M784.5,429.7V435.1"/><path class="u" d="M784.5,430.4V434.4"/>
<path class="k" d="M786.2,429.7V442.1"/><path class="d" d="M786.2,430.4V441.4"/>
<path class="k" d="M787.9,434.8V442.1"/><path class="u" d="M787.9,435.5V441.4"/>
<path class="k" d="M789.6,438.5V449.7"/><path class="d" d="M789.6,439.2V449"/>
<path class="k" d="M791.3,443.7V449.7"/><path class="u" d="M791.3,444.4V449"/>
<path class="k" d="M793,444.6V452.5"/><path class="d" d="M793,445.3V451.8"/>
<path class="k" d="M794.7,448.5V452.5"/><path class="u" d="M794.7,449.2V451.8"/>
<path class="k" d="M796.4,448.5V452.1"/><path class="d" d="M796.4,449.2V451.4"/>
<path class="k" d="M798.1,449.5V452.1"/><path class="u" d="M798.1,450.2V451.4"/>
<path class="k" d="M799.8,449.5V452.8"/><path class="d" d="M799.8,450.2V452.1"/>
<path class="k" d="M801.5,451.4V455.1"/><path class="d" d="M801.5,452.1V454.4"/>
<path class="k" d="M803.2,453.7V457.2"/><path class="d" d="M803.2,454.4V456.5"/>
<path class="k" d="M804.9,450.3V456.1"/><path class="u" d="M804.9,451V455.4"/>
<path class="k" d="M806.6,448.1V451.7"/><path class="u" d="M806.6,448.8V451"/>
<path class="k" d="M808.3,448.1V451"/><path class="d" d="M808.3,448.8V450.3"/>
<path class="k" d="M810,447V451"/><path class="u" d="M810,447.7V450.3"/>
<path class="k" d="M811.7,447.2V450.6"/><path class="d" d="M811.7,447.9V449.9"/>
<path class="k" d="M813.4,449.2V454.3"/><path class="d" d="M813.4,449.9V453.6"/>
<path class="k" d="M815.1,450.9V454.3"/><path class="u" d="M815.1,451.6V453.6"/>
<path class="k" d="M816.9,451.8V456.2"/><path class="d" d="M816.9,452.5V455.5"/>
<path class="k" d="M818.6,454.8V459.3"/><path class="d" d="M818.6,455.5V458.6"/>
<path class="k" d="M820.3,457.9V464.8"/><path class="d" d="M820.3,458.6V464.1"/>
<path class="k" d="M822,460.5V464.8"/><path class="u" d="M822,461.2V464.1"/>
<path class="k" d="M823.7,460.5V467.3"/><path class="d" d="M823.7,461.2V466.6"/>
<path class="k" d="M825.4,465.9V474.8"/><path class="d" d="M825.4,466.6V474.1"/>
<path class="k" d="M827.1,473.4V478.4"/><path class="d" d="M827.1,474.1V477.7"/>
<path class="k" d="M828.8,477V485.1"/><path class="d" d="M828.8,477.7V484.4"/>
<path class="k" d="M830.5,482.5V485.1"/><path class="u" d="M830.5,483.2V484.4"/>
<path class="k" d="M832.2,475.4V483.9"/><path class="u" d="M832.2,476.1V483.2"/>
<path class="k" d="M833.9,475.7V484.1"/><path class="d" d="M833.9,476.4V483.4"/>
<path class="k" d="M835.6,478.8V482.8"/><path class="u" d="M835.6,479.5V482.1"/>
<path class="k" d="M837.3,471.8V477.6"/><path class="u" d="M837.3,472.5V476.9"/>
<path class="k" d="M839,468V473.2"/><path class="u" d="M839,468.7V472.5"/>
<path class="k" d="M840.7,468V472.5"/><path class="d" d="M840.7,468.7V471.8"/>
<path class="k" d="M842.4,471.1V478.6"/><path class="d" d="M842.4,471.8V477.9"/>
<path class="k" d="M844.1,479.3V482.8"/><path class="d" d="M844.1,480V482.1"/>
<path class="k" d="M845.8,481.4V488.1"/><path class="d" d="M845.8,482.1V487.4"/>
<path class="k" d="M847.5,478.8V487.1"/><path class="u" d="M847.5,479.5V486.4"/>
<path class="k" d="M849.2,478.8V482.4"/><path class="d" d="M849.2,479.5V481.7"/>
<path class="k" d="M851,480V482.4"/><path class="u" d="M851,480.7V481.7"/>
<path class="k" d="M852.7,482V486.2"/><path class="d" d="M852.7,482.7V485.5"/>
<path class="k" d="M854.4,485.5V492.9"/><path class="d" d="M854.4,486.2V492.2"/>
<path class="k" d="M856.1,490.4V492.9"/><path class="u" d="M856.1,491.1V492.2"/>
<path class="k" d="M857.8,490.4V495.3"/><path class="d" d="M857.8,491.1V494.6"/>
<path class="k" d="M859.5,472.2V491.6"/><path class="u" d="M859.5,472.9V490.9"/>
<path class="k" d="M861.2,459.9V473.6"/><path class="u" d="M861.2,460.6V472.9"/>
<path class="k" d="M862.9,459.9V464.8"/><path class="d" d="M862.9,460.6V464.1"/>
<path class="k" d="M864.6,463.4V466"/><path class="d" d="M864.6,464.1V465.3"/>
<path class="k" d="M866.3,460.6V466"/><path class="u" d="M866.3,461.3V465.3"/>
<path class="k" d="M868,464.3V479.1"/><path class="d" d="M868,465V478.4"/>
<path class="k" d="M869.7,474.8V479.1"/><path class="u" d="M869.7,475.5V478.4"/>
<path class="k" d="M871.4,474.8V479"/><path class="d" d="M871.4,475.5V478.3"/>
<path class="k" d="M873.1,472.4V476.8"/><path class="u" d="M873.1,473.1V476.1"/>
<path class="k" d="M874.8,472.4V475.8"/><path class="d" d="M874.8,473.1V475.1"/>
<path class="k" d="M876.5,466.6V475.3"/><path class="u" d="M876.5,467.3V474.6"/>
<path class="k" d="M878.2,463.1V468"/><path class="u" d="M878.2,463.8V467.3"/>
<path class="k" d="M879.9,463.1V465.5"/><path class="d" d="M879.9,463.8V464.8"/>
<path class="k" d="M881.6,461.8V465.5"/><path class="u" d="M881.6,462.5V464.8"/>
<path class="k" d="M883.3,461.8V466"/><path class="d" d="M883.3,462.5V465.3"/>
<path class="k" d="M885.1,464.6V469.3"/><path class="d" d="M885.1,465.3V468.6"/>
<path class="k" d="M886.8,466.9V469.3"/><path class="u" d="M886.8,467.6V468.6"/>
<path class="k" d="M888.5,466.9V471"/><path class="d" d="M888.5,467.6V470.3"/>
<path class="k" d="M890.2,469.6V472"/><path class="d" d="M890.2,470.3V471.3"/>
<path class="k" d="M891.9,466.3V472"/><path class="u" d="M891.9,467V471.3"/>
<path class="k" d="M893.6,463.3V467.7"/><path class="u" d="M893.6,464V467"/>
<path class="k" d="M895.3,463.3V467.7"/><path class="d" d="M895.3,464V467"/>
<path class="k" d="M897,465.3V467.7"/><path class="u" d="M897,466V467"/>
<path class="k" d="M898.7,462.5V466.7"/><path class="u" d="M898.7,463.2V466"/>
<path class="k" d="M900.4,458.9V463.9"/><path class="u" d="M900.4,459.6V463.2"/>
<path class="k" d="M902.1,457.4V460.3"/><path class="u" d="M902.1,458.1V459.6"/>
<path class="k" d="M903.8,449.6V457.7"/><path class="u" d="M903.8,450.3V457"/>
<path class="k" d="M905.5,450.2V456.7"/><path class="d" d="M905.5,450.9V456"/>
<path class="k" d="M907.2,450.9V456.7"/><path class="u" d="M907.2,451.6V456"/>
<path class="k" d="M908.9,451.1V458"/><path class="d" d="M908.9,451.8V457.3"/>
<path class="k" d="M910.6,458.7V468.3"/><path class="d" d="M910.6,459.4V467.6"/>
<path class="k" d="M912.3,470.8V486.3"/><path class="d" d="M912.3,471.5V485.6"/>
<path class="k" d="M914,475.2V486.3"/><path class="u" d="M914,475.9V485.6"/>
<path class="k" d="M915.7,475.2V482.4"/><path class="d" d="M915.7,475.9V481.7"/>
<path class="k" d="M917.4,470.8V480.3"/><path class="u" d="M917.4,471.5V479.6"/>
<path class="k" d="M919.2,470.8V477.3"/><path class="d" d="M919.2,471.5V476.6"/>
<path class="k" d="M920.9,475.9V480.8"/><path class="d" d="M920.9,476.6V480.1"/>
<path class="k" d="M922.6,479.4V485.1"/><path class="d" d="M922.6,480.1V484.4"/>
<path class="k" d="M924.3,483.7V487.7"/><path class="d" d="M924.3,484.4V487"/>
<path class="k" d="M926,486.3V488.8"/><path class="d" d="M926,487V488.1"/>
<path class="k" d="M927.7,487.4V490.4"/><path class="d" d="M927.7,488.1V489.7"/>
<path class="k" d="M929.4,489V491.6"/><path class="d" d="M929.4,489.7V490.9"/>
<path class="k" d="M931.1,485.2V490.4"/><path class="u" d="M931.1,485.9V489.7"/>
<path class="k" d="M932.8,485.2V487.6"/><path class="d" d="M932.8,485.9V486.9"/>
<path class="k" d="M934.5,485.1V487.6"/><path class="u" d="M934.5,485.8V486.9"/>
<path class="k" d="M936.2,485.1V490.6"/><path class="d" d="M936.2,485.8V489.9"/>
<path class="k" d="M937.9,489.2V493.7"/><path class="d" d="M937.9,489.9V493"/>
<path class="k" d="M939.6,492.3V497"/><path class="d" d="M939.6,493V496.3"/>
<path class="k" d="M941.3,495.6V501.5"/><path class="d" d="M941.3,496.3V500.8"/>
<path class="k" d="M943,495.8V501.5"/><path class="u" d="M943,496.5V500.8"/>
<path class="k" d="M944.7,495.8V501"/><path class="d" d="M944.7,496.5V500.3"/>
<path class="k" d="M946.4,499.6V506.5"/><path class="d" d="M946.4,500.3V505.8"/>
<path class="k" d="M948.1,505.1V512.7"/><path class="d" d="M948.1,505.8V512"/>
<path class="k" d="M949.8,512.6V542.6"/><path class="d" d="M949.8,513.3V541.9"/>
<path class="k" d="M951.5,541.2V562.3"/><path class="d" d="M951.5,541.9V561.6"/>
<path class="k" d="M953.3,536V544.7"/><path class="u" d="M953.3,536.7V544"/>
<path class="k" d="M955,536V540.9"/><path class="d" d="M955,536.7V540.2"/>
<path class="k" d="M956.7,539.5V544.9"/><path class="d" d="M956.7,540.2V544.2"/>
<path class="k" d="M958.4,538.3V544.9"/><path class="u" d="M958.4,539V544.2"/>
<path class="k" d="M960.1,533.6V539.7"/><path class="u" d="M960.1,534.3V539"/>
<path class="k" d="M961.8,530.4V535"/><path class="u" d="M961.8,531.1V534.3"/>
<path class="k" d="M963.5,530.4V538.5"/><path class="d" d="M963.5,531.1V537.8"/>
<path class="k" d="M965.2,533.5V536.7"/><path class="u" d="M965.2,534.2V536"/>
<path class="k" d="M966.9,530V534.9"/><path class="u" d="M966.9,530.7V534.2"/>
<path class="k" d="M968.6,508.4V531.4"/><path class="u" d="M968.6,509.1V530.7"/>
<path class="k" d="M970.3,508.4V513.5"/><path class="d" d="M970.3,509.1V512.8"/>
<path class="k" d="M972,502.3V513.5"/><path class="u" d="M972,503V512.8"/>
<path class="k" d="M973.7,503.9V517.8"/><path class="d" d="M973.7,504.6V517.1"/>
<path class="k" d="M975.4,514.1V517.8"/><path class="u" d="M975.4,514.8V517.1"/>
<path class="k" d="M977.1,506.2V513.8"/><path class="u" d="M977.1,506.9V513.1"/>
<path class="k" d="M978.8,442.4V459.2"/><path class="u" d="M978.8,443.1V458.5"/>
<path class="k" d="M980.5,418.5V437.7"/><path class="u" d="M980.5,419.2V437"/>
<path class="k" d="M982.2,413.6V419.9"/><path class="u" d="M982.2,414.3V419.2"/>
<path class="k" d="M983.9,424.4V433.6"/><path class="d" d="M983.9,425.1V432.9"/>
<path class="k" d="M985.6,426.7V433.6"/><path class="u" d="M985.6,427.4V432.9"/>
<path class="k" d="M987.4,428.6V444.8"/><path class="d" d="M987.4,429.3V444.1"/>
<path class="k" d="M989.1,431.9V444.8"/><path class="u" d="M989.1,432.6V444.1"/>
<path class="k" d="M990.8,431.9V435.3"/><path class="d" d="M990.8,432.6V434.6"/>
<path class="k" d="M992.5,432.9V435.3"/><path class="u" d="M992.5,433.6V434.6"/>
<path class="k" d="M994.2,433.2V449"/><path class="d" d="M994.2,433.9V448.3"/>
<path class="k" d="M995.9,442.3V449"/><path class="u" d="M995.9,443V448.3"/>
<path class="k" d="M997.6,442.3V450"/><path class="d" d="M997.6,443V449.3"/>
<path class="k" d="M999.3,443V450"/><path class="u" d="M999.3,443.7V449.3"/>
<path class="k" d="M1001,443V450.3"/><path class="d" d="M1001,443.7V449.6"/>
<path class="k" d="M1002.7,430.9V443.4"/><path class="u" d="M1002.7,431.6V442.7"/>
<path class="k" d="M1004.4,422.5V432.3"/><path class="u" d="M1004.4,423.2V431.6"/>
<path class="k" d="M1006.1,422.5V425.6"/><path class="d" d="M1006.1,423.2V424.9"/>
<path class="k" d="M1007.8,424.2V426.6"/><path class="d" d="M1007.8,424.9V425.9"/>
<path class="k" d="M1009.5,422.6V426.6"/><path class="u" d="M1009.5,423.3V425.9"/>
<path class="k" d="M1011.2,423.4V428.4"/><path class="d" d="M1011.2,424.1V427.7"/>
<path class="k" d="M1012.9,426V428.4"/><path class="u" d="M1012.9,426.7V427.7"/>
<path class="k" d="M1014.6,426V432.5"/><path class="d" d="M1014.6,426.7V431.8"/>
<path class="k" d="M1016.3,431.1V440.5"/><path class="d" d="M1016.3,431.8V439.8"/>
<path class="k" d="M1018,431.4V437.4"/><path class="u" d="M1018,432.1V436.7"/>
<path class="k" d="M1019.7,429.5V432.8"/><path class="u" d="M1019.7,430.2V432.1"/>
<path class="k" d="M1021.5,421.4V430.9"/><path class="u" d="M1021.5,422.1V430.2"/>
<path class="k" d="M1023.2,421.4V428.5"/><path class="d" d="M1023.2,422.1V427.8"/>
<path class="k" d="M1024.9,421.9V427.6"/><path class="u" d="M1024.9,422.6V426.9"/>
<path class="k" d="M1026.6,421.6V424"/><path class="u" d="M1026.6,422.3V423.3"/>
<path class="k" d="M1028.3,421.6V426.9"/><path class="d" d="M1028.3,422.3V426.2"/>
<path class="k" d="M1030,411.3V426.9"/><path class="u" d="M1030,412V426.2"/>
<path class="k" d="M1031.7,411.3V420.4"/><path class="d" d="M1031.7,412V419.7"/>
<path class="k" d="M1033.4,413.4V418.1"/><path class="u" d="M1033.4,414.1V417.4"/>
<path class="k" d="M1035.1,413.4V417.9"/><path class="d" d="M1035.1,414.1V417.2"/>
<path class="k" d="M1036.8,409.7V415.7"/><path class="u" d="M1036.8,410.4V415"/>
<path class="k" d="M1038.5,412.1V418.3"/><path class="d" d="M1038.5,412.8V417.6"/>
<path class="k" d="M1040.2,416.9V419.9"/><path class="d" d="M1040.2,417.6V419.2"/>
<path class="k" d="M1041.9,418.5V423"/><path class="d" d="M1041.9,419.2V422.3"/>
<path class="k" d="M1043.6,421.6V427"/><path class="d" d="M1043.6,422.3V426.3"/>
<path class="k" d="M1045.3,422.2V427"/><path class="u" d="M1045.3,422.9V426.3"/>
<path class="k" d="M1047,419.3V423.6"/><path class="u" d="M1047,420V422.9"/>
<path class="k" d="M1048.7,415.8V420.3"/><path class="u" d="M1048.7,416.5V419.6"/>
<path class="k" d="M1050.4,415.8V418.2"/><path class="d" d="M1050.4,416.5V417.5"/>
<path class="k" d="M1052.1,412.9V418.2"/><path class="u" d="M1052.1,413.6V417.5"/>
<path class="k" d="M1053.8,408.9V414.3"/><path class="u" d="M1053.8,409.6V413.6"/>
<path class="k" d="M1055.6,392.7V409.5"/><path class="u" d="M1055.6,393.4V408.8"/>
<path class="k" d="M1057.3,374.1V390.1"/><path class="u" d="M1057.3,374.8V389.4"/>
<path class="k" d="M1059,375.1V384.5"/><path class="d" d="M1059,375.8V383.8"/>
<path class="k" d="M1060.7,376.7V383.7"/><path class="u" d="M1060.7,377.4V383"/>
<path class="k" d="M1062.4,377.3V382.4"/><path class="d" d="M1062.4,378V381.7"/>
<path class="k" d="M1064.1,376.7V382.4"/><path class="u" d="M1064.1,377.4V381.7"/>
<path class="k" d="M1065.8,370.5V378.1"/><path class="u" d="M1065.8,371.2V377.4"/>
<path class="k" d="M1067.5,365.1V371.9"/><path class="u" d="M1067.5,365.8V371.2"/>
<path class="k" d="M1069.2,365.1V368.7"/><path class="d" d="M1069.2,365.8V368"/>
<path class="k" d="M1070.9,363.8V368.7"/><path class="u" d="M1070.9,364.5V368"/>
<path class="k" d="M1072.6,363.8V369.3"/><path class="d" d="M1072.6,364.5V368.6"/>
<path class="k" d="M1074.3,364.1V369.2"/><path class="u" d="M1074.3,364.8V368.5"/>
<path class="k" d="M1076,364.1V374.2"/><path class="d" d="M1076,364.8V373.5"/>
<path class="k" d="M1077.7,372.8V378.7"/><path class="d" d="M1077.7,373.5V378"/>
<path class="k" d="M1079.4,386V393.5"/><path class="d" d="M1079.4,386.7V392.8"/>
<path class="k" d="M1081.1,392.1V398.9"/><path class="d" d="M1081.1,392.8V398.2"/>
<path class="k" d="M1082.8,385.7V398.9"/><path class="u" d="M1082.8,386.4V398.2"/>
<path class="k" d="M1084.5,385.7V392.7"/><path class="d" d="M1084.5,386.4V392"/>
<path class="k" d="M1086.2,384.1V392.7"/><path class="u" d="M1086.2,384.8V392"/>
<path class="k" d="M1087.9,396.4V410"/><path class="d" d="M1087.9,397.1V409.3"/>
<path class="k" d="M1089.7,413.1V422.3"/><path class="d" d="M1089.7,413.8V421.6"/>
<path class="k" d="M1091.4,426.5V429.7"/><path class="d" d="M1091.4,427.2V429"/>
<path class="k" d="M1093.1,429.7V440.9"/><path class="d" d="M1093.1,430.4V440.2"/>
<path class="k" d="M1094.8,427.7V436.5"/><path class="u" d="M1094.8,428.4V435.8"/>
<path class="k" d="M1096.5,415.3V427.9"/><path class="u" d="M1096.5,416V427.2"/>
<path class="k" d="M1098.2,411.4V416.7"/><path class="u" d="M1098.2,412.1V416"/>
<path class="k" d="M1099.9,415.6V418"/><path class="u" d="M1099.9,416.3V417.3"/>
<path class="k" d="M1101.6,416.5V426.8"/><path class="d" d="M1101.6,417.2V426.1"/>
<path class="k" d="M1103.3,425.4V433.6"/><path class="d" d="M1103.3,426.1V432.9"/>
<path class="k" d="M1105,425.7V432.7"/><path class="u" d="M1105,426.4V432"/>
</g>
<path d="M0,446L1.5,445 3,444.1 4.5,443.1 6,442.1 7.5,441.1 9,440 10.5,438.6 12,436.8 13.5,434.8 15,432.8 16.5,430.7 18,428 19.5,424.8 21,421.3 22.5,417.8 24,414.4 25.5,411.4 27,408.7 28.5,406.2 30,403.7 31.5,401.2 33,398.9 34.5,396.8 36,394.8 37.5,392.8 39,390.9 40.5,389.2 42,387.8 43.5,386.5 45,385.2 46.5,384 48,383.2 49.5,382.7 51,382.5 52.5,382.3 54,382.2 55.5,382.3 57,382.7 58.5,383.2 60,383.7 61.5,384.2 63,384.6 64.5,385 66,385.4 67.5,385.8 69,386.1 70.5,386.5 72,386.8 73.5,387.1 75,387.2 76.5,387.4 78,387.6 79.5,387.7 81,387.8 82.5,387.9 84,387.9 85.5,387.8 87,387.6 88.5,387.5 90,387.4 91.5,387.3 93,387.2 94.5,387 96,386.7 97.5,386.4 99,386 100.5,385.6 102,385.2 103.5,384.9 105,384.7 106.5,384.8 108,385.1 109.5,385.4 111,385.7 112.5,386 114,386.3 115.5,386.6 117,386.9 118.5,387.2 120,387.5 121.5,387.8 123,388.1 124.5,388.4 126,388.7 127.5,389 129,389.3 130.5,389.6 132,390 133.5,390.4 135,390.8 136.5,391.1 138,391.5 139.5,391.5 141,390.8 142.5,389.5 144,387.8 145.5,385.7 147,383 148.5,380 150,377 151.5,374.1 153,371.3 154.5,368.7 156,366.2 157.5,363.7 159,361.1 160.5,358.4 162,355.5 163.5,352.5 165,349.5 166.5,346.4 168,343.2 169.5,339.8 171,336.3 172.5,332.8 174,329.6 175.5,327 177,325.2 178.5,323.8 180,322.9 181.5,322.4 183,322.3 184.5,322.2 186,322.1 187.5,321.5 189,320.5 190.5,319 192,317.5 193.5,316 195,314.3 196.5,312.5 198,310.5 199.5,308.5 201,306.5 202.5,304.4 204,302.2 205.5,300 207,297.1 208.5,293.2 210,288.2 211.5,282.8 213,276.9 214.5,270.5 216,263.8 217.5,257.2 219,250.8 220.5,244.5 222,238.1 223.5,231.6 225,225.7 226.5,220.5 228,216 229.5,211.5 231,207 232.5,202.5 234,198.1 235.5,194.2 237,190.6 238.5,187.3 240,184.6 241.5,182.5 243,181 244.5,179.7 246,178.7 247.5,178.1 249,178.1 250.5,178.8 252,180.2 253.5,181.2 255,181.7 256.5,181.6 258,181.3 259.5,181.1 261,180.9 262.5,180.7 264,180.5 265.5,180.3 267,179.7 268.5,178.7 270,177 271.5,174.6 273,171.8 274.5,168.4 276,164.9 277.5,161.2 279,157.6 280.5,154.2 282,151 283.5,148 285,145 286.5,142 288,139 289.5,136.3 291,133.9 292.5,132 294,130.3 295.5,128.9 297,127.8 298.5,126.9 300,126.3 301.5,126 303,126 304.5,126.5 306,127.8 307.5,129.8 309,132 310.5,134.2 312,136.4 313.5,138.5 315,140.6 316.5,142.6 318,144.7 319.5,147.3 321,150.8 322.5,155 324,159.4 325.5,163.4 327,167.2 328.5,170.7 330,174.2 331.5,177.5 333,180.3 334.5,182.7 336,184.7 337.5,186.7 339,188.8 340.5,191.2 342,194 343.5,197 345,200 346.5,203 348,206 349.5,209 351,212 352.5,215 354,218 355.5,221 357,224 358.5,227 360,230 361.5,233 363,235.9 364.5,238.8 366,241.7 367.5,244.6 369,247.3 370.5,249.9 372,252.2 373.5,254.6 375,256.6 376.5,258.1 378,259.2 379.5,260.4 381,261.5 382.5,262.6 384,263.7 385.5,264.5 387,265.1 388.5,265.5 390,265.9 391.5,266.3 393,266.7 394.5,267.2 396,267.6 397.5,268.1 399,268.8 400.5,269.6 402,270.4 403.5,271.2 405,272.6 406.5,274.5 408,277 409.5,279.5 411,282 412.5,284.8 414,288 415.5,291.5 417,295 418.5,298.5 420,302.3 421.5,306.5 423,311 424.5,315.5 426,320 427.5,324.3 429,328.5 430.5,332.5 432,336.5 433.5,340.5 435,344.2 436.5,347.5 438,350.5 439.5,353.5 441,356.5 442.5,359.3 444,362 445.5,364.5 447,367 448.5,369.5 450,371.7 451.5,373.5 453,375 454.5,376.5 456,378 457.5,379.2 459,380.2 460.5,380.9 462,381.6 463.5,382.3 465,383 466.5,383.7 468,384.4 469.5,385.1 471,385.8 472.5,386.1 474,386 475.5,385.6 477,385.1 478.5,384.5 480,383.6 481.5,382.4 483,381.2 484.5,379.7 486,377.9 487.5,375.8 489,373.5 490.5,371.2 492,369 493.5,366.8 495,364.9 496.5,363.4 498,362.4 499.5,361.7 501,361.3 502.5,361.5 504,361.9 505.5,362.8 507,364 508.5,365.5 510,367 511.5,368.6 513,370.6 514.5,372.8 516,375.3 517.5,377.8 519,380.4 520.5,383.1 522,386 523.5,389 525,392 526.5,395 528,398 529.5,401 531,404 532.5,407 534,409.9 535.5,412.9 537,415.8 538.5,418.8 540,421.3 541.5,423.3 543,425 544.5,426.6 546,428 547.5,429.1 549,429.8 550.5,430.5 552,431.7 553.5,433.4 555,435.6 556.5,437.8 558,440.1 559.5,442.4 561,444.8 562.5,447 564,449 565.5,450.8 567,452.5 568.5,454.1 570,455.4 571.5,456.3 573,456.8 574.5,457.3 576,457.9 577.5,458.7 579,459.7 580.5,460.8 582,461.8 583.5,462.7 585,463.4 586.5,463.6 588,463.3 589.5,462.8 591,461.9 592.5,460.5 594,458.8 595.5,456.8 597,454.6 598.5,452 600,449.3 601.5,446.5 603,443.6 604.5,440.6 606,437.8 607.5,435.2 609,432.8 610.5,431 612,429.6 613.5,428.6 615,427.9 616.5,427.7 618,427.9 619.5,428.1 621,428.3 622.5,428.3 624,428.2 625.5,427.9 627,427.8 628.5,427.9 630,428.3 631.5,429 633,429.7 634.5,430.6 636,431.7 637.5,432.9 639,434.1 640.5,435.1 642,436 643.5,436.8 645,437.5 646.5,438.2 648,438.7 649.5,438.8 651,438.5 652.5,438.2 654,438 655.5,437.8 657,437.5 658.5,437.2 660,437.3 661.5,437.8 663,438.5 664.5,439.2 666,440.3 667.5,441.7 669,443.3 670.5,444.5 672,445 673.5,444.8 675,444.2 676.5,443.4 678,442.3 679.5,441.1 681,439.9 682.5,438.7 684,437.7 685.5,436.7 687,435.9 688.5,435.6 690,436 691.5,436.8 693,437.5 694.5,438 696,438.5 697.5,438.6 699,438.2 700.5,437.3 702,436.3 703.5,435.7 705,435.7 706.5,436.2 708,437 709.5,437.8 711,438.5 712.5,439.2 714,440 715.5,440.5 717,440.8 718.5,440.7 720,440.5 721.5,440.3 723,440.1 724.5,440 726,439.9 727.5,439.8 729,439.7 730.5,439.6 732,439.7 733.5,440.1 735,440.8 736.5,441.4 738,442.2 739.5,443.2 741,444.5 742.5,445.8 744,446.9 745.5,448 747,449 748.5,450 750,450.9 751.5,451.6 753,452.2 754.5,452.9 756,453.2 757.5,453.1 759,452.8 760.5,452.4 762,451.8 763.5,451 765,450 766.5,449 768,447.8 769.5,446.2 771,444.5 772.5,442.8 774,441.2 775.5,439.8 777,438.5 778.5,437.2 780,436.2 781.5,435.5 783,435 784.5,434.5 786,434.2 787.5,434.2 789,434.5 790.5,434.8 792,435.1 793.5,435.5 795,436 796.5,436.5 798,437 799.5,437.5 801,438 802.5,438.5 804,439.2 805.5,440 807,441 808.5,442 810,443 811.5,444 813,445 814.5,446 816,447 817.5,448 819,449 820.5,450 822,451 823.5,452 825,453 826.5,454 828,455.1 829.5,456.4 831,457.9 832.5,459.3 834,460.8 835.5,462.2 837,463.6 838.5,464.9 840,466.2 841.5,467.5 843,468.7 844.5,469.8 846,470.9 847.5,472.1 849,473.3 850.5,474.5 852,475.8 853.5,477.1 855,478.1 856.5,479 858,479.7 859.5,480.3 861,480.4 862.5,480.1 864,479.3 865.5,478.6 867,478 868.5,477.6 870,477.2 871.5,476.9 873,476.5 874.5,476.1 876,475.8 877.5,475.4 879,474.9 880.5,474.4 882,473.8 883.5,473.3 885,472.7 886.5,472 888,471.3 889.5,470.7 891,470.1 892.5,469.5 894,469.1 895.5,468.6 897,468.1 898.5,467.7 900,467.4 901.5,467 903,466.6 904.5,466.1 906,465.5 907.5,464.9 909,464.5 910.5,464.4 912,464.7 913.5,465.2 915,465.6 916.5,465.9 918,466.3 919.5,466.5 921,466.9 922.5,467.4 924,468.1 925.5,468.8 927,469.6 928.5,470.7 930,472.1 931.5,473.7 933,475.3 934.5,476.8 936,478.2 937.5,479.4 939,480.6 940.5,481.8 942,483 943.5,484.3 945,485.5 946.5,486.8 948,488.7 949.5,491.2 951,494.5 952.5,497.7 954,500.7 955.5,503.4 957,506 958.5,508.3 960,510.4 961.5,512.3 963,514.2 964.5,515.9 966,517.4 967.5,518.7 969,520 970.5,521.1 972,522 973.5,522.7 975,523.2 976.5,522.8 978,521.3 979.5,518.5 981,514.9 982.5,510.5 984,506.1 985.5,501.5 987,497 988.5,492.4 990,488 991.5,483.6 993,479.6 994.5,475.7 996,471.8 997.5,467.4 999,462.5 1000.5,457.5 1002,452.7 1003.5,448.4 1005,444.6 1006.5,441.3 1008,438.6 1009.5,436.1 1011,434.7 1012.5,434 1014,433.9 1015.5,433.9 1017,433.7 1018.5,433.4 1020,433 1021.5,432.5 1023,432.1 1024.5,431.6 1026,431 1027.5,430.2 1029,429.3 1030.5,428.3 1032,427.4 1033.5,426.5 1035,425.8 1036.5,425.1 1038,424.5 1039.5,423.9 1041,423.4 1042.5,422.9 1044,422.4 1045.5,421.8 1047,421.2 1048.5,420.6 1050,419.9 1051.5,419 1053,418 1054.5,416.8 1056,415.3 1057.5,413.5 1059,411.6 1060.5,409.6 1062,407.3 1063.5,404.9 1065,402.3 1066.5,399.8 1068,397.1 1069.5,394.5 1071,392.1 1072.5,389.9 1074,388 1075.5,386.2 1077,384.7 1078.5,383.5 1080,382.4 1081.5,381.4 1083,380.4 1084.5,379.9 1086,380.2 1087.5,381.3 1089,383.3 1090.5,385.6 1092,388.1 1093.5,390.5 1095,392.9 1096.5,395.2 1098,397.5 1099.5,399.6 1101,401.6 1102.5,403.2 1104,404.7 1105.5,405.5 1105.7,406" fill="none" stroke="#f06a6a" stroke-width="1.8" stroke-linejoin="round"/>
<path d="M0,407L2,407.8 4,408.6 6,409.4 8,410.1 10,410.7 12,411.2 14,411.8 16,412.3 18,412.8 20,413.3 22,413.7 24,414.1 26,414.4 28,414.7 30,415 32,415.2 34,415.4 36,415.6 38,415.8 40,415.9 42,416.1 44,416.2 46,416.3 48,416.5 50,416.6 52,416.7 54,416.8 56,416.9 58,417 60,417.1 62,417.2 64,417.3 66,417.4 68,417.5 70,417.6 72,417.7 74,417.8 76,417.8 78,417.9 80,417.9 82,418 84,418 86,418 88,418 90,418 92,418 94,418.1 96,418.1 98,418.1 100,418.2 102,418.3 104,418.3 106,418.4 108,418.5 110,418.6 112,418.7 114,418.8 116,418.9 118,419.1 120,419.2 122,419.2 124,419.3 126,419.4 128,419.5 130,419.6 132,419.6 134,419.7 136,419.7 138,419.8 140,419.8 142,419.8 144,419.8 146,419.8 148,419.8 150,419.8 152,419.8 154,419.7 156,419.6 158,419.4 160,419.3 162,419 164,418.8 166,418.5 168,418.1 170,417.8 172,417.3 174,416.9 176,416.3 178,415.8 180,415.3 182,414.7 184,414.2 186,413.6 188,413 190,412.3 192,411.6 194,410.9 196,410.1 198,409.3 200,408.5 202,407.5 204,406.5 206,405.4 208,404.3 210,403 212,401.7 214,400.3 216,398.9 218,397.4 220,395.9 222,394.4 224,392.8 226,391.2 228,389.6 230,387.9 232,386.2 234,384.5 236,382.7 238,380.9 240,379.1 242,377.3 244,375.4 246,373.5 248,371.7 250,369.8 252,367.8 254,366 256,364.1 258,362.2 260,360.4 262,358.6 264,356.8 266,354.9 268,353 270,351 272,349 274,347 276,344.9 278,342.8 280,340.7 282,338.5 284,336.2 286,334 288,331.7 290,329.4 292,327.1 294,324.9 296,322.8 298,320.6 300,318.5 302,316.5 304,314.5 306,312.5 308,310.6 310,308.8 312,307 314,305.2 316,303.5 318,301.8 320,300.2 322,298.6 324,297 326,295.5 328,294 330,292.6 332,291.3 334,290 336,288.7 338,287.5 340,286.3 342,285.2 344,284.1 346,283.1 348,282.2 350,281.3 352,280.4 354,279.5 356,278.7 358,277.8 360,277 362,276.2 364,275.4 366,274.6 368,273.9 370,273.1 372,272.4 374,271.6 376,270.9 378,270.2 380,269.5 382,268.9 384,268.3 386,267.7 388,267.1 390,266.6 392,266.1 394,265.6 396,265.1 398,264.7 400,264.3 402,263.9 404,263.5 406,263.2 408,262.9 410,262.6 412,262.3 414,262.1 416,261.9 418,261.6 420,261.4 422,261.3 424,261.1 426,260.9 428,260.8 430,260.6 432,260.5 434,260.4 436,260.3 438,260.2 440,260.2 442,260.1 444,260.1 446,260 448,260 450,260 452,260 454,260 456,260 458,259.9 460,259.9 462,259.9 464,259.8 466,259.8 468,259.8 470,259.7 472,259.7 474,259.6 476,259.6 478,259.6 480,259.6 482,259.6 484,259.6 486,259.6 488,259.6 490,259.7 492,259.8 494,259.9 496,260 498,260.2 500,260.4 502,260.6 504,260.9 506,261.1 508,261.4 510,261.8 512,262.2 514,262.6 516,263 518,263.5 520,264 522,264.5 524,265.1 526,265.7 528,266.3 530,267 532,267.8 534,268.6 536,269.4 538,270.2 540,271.2 542,272.1 544,273.2 546,274.2 548,275.3 550,276.5 552,277.7 554,279 556,280.3 558,281.7 560,283.1 562,284.5 564,286 566,287.5 568,289.1 570,290.7 572,292.4 574,294 576,295.8 578,297.5 580,299.2 582,301 584,302.7 586,304.5 588,306.3 590,308.1 592,310 594,311.8 596,313.6 598,315.5 600,317.4 602,319.3 604,321.2 606,323.2 608,325.2 610,327.2 612,329.2 614,331.3 616,333.4 618,335.4 620,337.4 622,339.5 624,341.5 626,343.5 628,345.4 630,347.3 632,349.2 634,351 636,352.8 638,354.5 640,356.2 642,357.9 644,359.5 646,361.1 648,362.6 650,364.1 652,365.6 654,367 656,368.4 658,369.8 660,371.2 662,372.5 664,373.9 666,375.2 668,376.5 670,377.8 672,379.1 674,380.4 676,381.6 678,382.9 680,384.1 682,385.3 684,386.4 686,387.5 688,388.6 690,389.7 692,390.7 694,391.8 696,392.8 698,393.8 700,394.8 702,395.7 704,396.7 706,397.7 708,398.6 710,399.6 712,400.6 714,401.6 716,402.6 718,403.6 720,404.6 722,405.6 724,406.5 726,407.5 728,408.4 730,409.4 732,410.4 734,411.3 736,412.3 738,413.2 740,414.2 742,415.1 744,416 746,417 748,417.9 750,418.7 752,419.6 754,420.4 756,421.2 758,421.9 760,422.6 762,423.3 764,424 766,424.6 768,425.1 770,425.7 772,426.2 774,426.6 776,427.1 778,427.5 780,427.9 782,428.3 784,428.6 786,429 788,429.3 790,429.6 792,429.9 794,430.3 796,430.6 798,430.8 800,431.1 802,431.4 804,431.7 806,432.1 808,432.5 810,432.9 812,433.3 814,433.7 816,434.2 818,434.7 820,435.2 822,435.8 824,436.4 826,437.1 828,437.7 830,438.4 832,439.1 834,439.7 836,440.4 838,441 840,441.6 842,442.2 844,442.8 846,443.4 848,443.9 850,444.4 852,444.8 854,445.2 856,445.6 858,445.9 860,446.3 862,446.6 864,446.9 866,447.2 868,447.5 870,447.7 872,447.9 874,448.1 876,448.3 878,448.5 880,448.7 882,448.8 884,449 886,449.1 888,449.2 890,449.3 892,449.4 894,449.5 896,449.6 898,449.7 900,449.8 902,449.9 904,450 906,450.1 908,450.2 910,450.3 912,450.4 914,450.5 916,450.6 918,450.8 920,450.9 922,451.1 924,451.3 926,451.5 928,451.7 930,452 932,452.2 934,452.5 936,452.9 938,453.3 940,453.7 942,454.1 944,454.5 946,455 948,455.5 950,456 952,456.5 954,457 956,457.5 958,458 960,458.5 962,459 964,459.4 966,459.9 968,460.3 970,460.6 972,461 974,461.3 976,461.5 978,461.7 980,461.9 982,462 984,462.1 986,462.2 988,462.2 990,462.2 992,462.2 994,462.1 996,462.1 998,462 1000,461.9 1002,461.8 1004,461.8 1006,461.7 1008,461.6 1010,461.5 1012,461.5 1014,461.4 1016,461.3 1018,461.2 1020,461.2 1022,461.1 1024,461 1026,461 1028,460.9 1030,460.8 1032,460.8 1034,460.7 1036,460.6 1038,460.5 1040,460.4 1042,460.2 1044,460.1 1046,460 1048,459.8 1050,459.5 1052,459.3 1054,458.9 1056,458.6 1058,458.2 1060,457.8 1062,457.4 1064,457 1066,456.6 1068,456.1 1070,455.7 1072,455.2 1074,454.8 1076,454.4 1078,454.1 1080,453.7 1082,453.4 1084,453.2 1086,453 1088,452.8 1090,452.6 1092,452.4 1094,452.3 1096,452.1 1098,452 1100,451.9 1102,451.8 1104,451.7 1105.7,451.6" fill="none" stroke="#22e6cf" stroke-width="1.9" stroke-linejoin="round"/>
<path d="M0,426.5L2,426.7 4,427 6,427.2 8,427.4 10,427.6 12,427.8 14,428 16,428.2 18,428.4 20,428.5 22,428.6 24,428.7 26,428.8 28,428.9 30,429 32,429 34,429.1 36,429.2 38,429.2 40,429.3 42,429.5 44,429.6 46,429.8 48,430 50,430.2 52,430.5 54,430.7 56,431 58,431.3 60,431.5 62,431.8 64,432.1 66,432.4 68,432.6 70,432.9 72,433.1 74,433.4 76,433.6 78,433.9 80,434 82,434.2 84,434.3 86,434.4 88,434.5 90,434.5 92,434.4 94,434.3 96,434.2 98,433.9 100,433.7 102,433.4 104,433.1 106,432.8 108,432.4 110,432.1 112,431.7 114,431.3 116,431 118,430.6 120,430.2 122,429.8 124,429.4 126,428.9 128,428.5 130,428 132,427.4 134,426.8 136,426.2 138,425.5 140,424.8 142,424 144,423.2 146,422.3 148,421.4 150,420.3 152,419.3 154,418.2 156,417.1 158,415.9 160,414.7 162,413.5 164,412.3 166,411.1 168,409.9 170,408.8 172,407.6 174,406.4 176,405.2 178,404 180,402.7 182,401.5 184,400.2 186,398.9 188,397.6 190,396.2 192,394.8 194,393.4 196,391.9 198,390.3 200,388.6 202,386.9 204,385.1 206,383.2 208,381.3 210,379.2 212,377 214,374.8 216,372.5 218,370.3 220,367.9 222,365.6 224,363.2 226,360.8 228,358.4 230,356.1 232,353.7 234,351.5 236,349.2 238,347 240,344.8 242,342.7 244,340.6 246,338.6 248,336.6 250,334.7 252,332.8 254,330.9 256,329.1 258,327.3 260,325.5 262,323.8 264,322 266,320.3 268,318.5 270,316.7 272,314.8 274,312.9 276,310.9 278,308.8 280,306.7 282,304.6 284,302.5 286,300.3 288,298.1 290,296 292,293.9 294,292 296,290 298,288.2 300,286.4 302,284.7 304,283 306,281.3 308,279.6 310,278 312,276.4 314,274.8 316,273.2 318,271.6 320,270 322,268.4 324,266.8 326,265.1 328,263.5 330,262 332,260.4 334,258.9 336,257.4 338,255.9 340,254.4 342,253 344,251.7 346,250.4 348,249.2 350,248 352,246.8 354,245.7 356,244.6 358,243.5 360,242.5 362,241.5 364,240.5 366,239.5 368,238.5 370,237.5 372,236.5 374,235.4 376,234.3 378,233.2 380,232.1 382,231 384,230 386,229 388,228.1 390,227.2 392,226.4 394,225.7 396,225.2 398,224.7 400,224.3 402,224 404,223.8 406,223.6 408,223.4 410,223.3 412,223.2 414,223.1 416,223.1 418,223.2 420,223.3 422,223.5 424,223.7 426,224 428,224.4 430,224.8 432,225.2 434,225.7 436,226.3 438,226.9 440,227.5 442,228.2 444,228.9 446,229.6 448,230.3 450,231.1 452,231.9 454,232.8 456,233.7 458,234.7 460,235.7 462,236.7 464,237.8 466,239 468,240.2 470,241.4 472,242.7 474,244.1 476,245.5 478,246.9 480,248.4 482,249.9 484,251.4 486,252.9 488,254.4 490,255.8 492,257.4 494,258.9 496,260.5 498,262.1 500,263.7 502,265.3 504,267 506,268.7 508,270.5 510,272.3 512,274.2 514,276.2 516,278.1 518,280.1 520,282.1 522,284.2 524,286.3 526,288.4 528,290.5 530,292.7 532,294.9 534,297.2 536,299.5 538,301.8 540,304.1 542,306.5 544,308.8 546,311.2 548,313.6 550,316 552,318.4 554,320.8 556,323.1 558,325.5 560,327.8 562,330.1 564,332.4 566,334.6 568,336.8 570,339 572,341.1 574,343.2 576,345.3 578,347.4 580,349.4 582,351.4 584,353.3 586,355.3 588,357.1 590,359 592,360.9 594,362.7 596,364.6 598,366.5 600,368.3 602,370.2 604,372 606,373.8 608,375.7 610,377.5 612,379.2 614,380.9 616,382.6 618,384.2 620,385.7 622,387.2 624,388.7 626,390.1 628,391.6 630,393 632,394.4 634,395.8 636,397.2 638,398.6 640,400 642,401.4 644,402.7 646,404 648,405.2 650,406.5 652,407.6 654,408.7 656,409.7 658,410.7 660,411.6 662,412.4 664,413.2 666,413.9 668,414.6 670,415.2 672,415.8 674,416.4 676,417 678,417.6 680,418.1 682,418.7 684,419.3 686,419.8 688,420.4 690,421 692,421.6 694,422.1 696,422.7 698,423.2 700,423.7 702,424.2 704,424.7 706,425.1 708,425.6 710,426 712,426.4 714,426.9 716,427.3 718,427.8 720,428.3 722,428.8 724,429.4 726,430 728,430.6 730,431.3 732,432 734,432.7 736,433.5 738,434.2 740,435 742,435.8 744,436.5 746,437.2 748,437.8 750,438.5 752,439 754,439.5 756,439.9 758,440.3 760,440.6 762,440.8 764,441 766,441.2 768,441.3 770,441.4 772,441.4 774,441.4 776,441.4 778,441.4 780,441.4 782,441.3 784,441.3 786,441.2 788,441.2 790,441.1 792,441.1 794,441.1 796,441.1 798,441.2 800,441.3 802,441.4 804,441.5 806,441.6 808,441.7 810,441.9 812,442 814,442.1 816,442.2 818,442.3 820,442.4 822,442.4 824,442.5 826,442.6 828,442.8 830,442.9 832,443.1 834,443.3 836,443.5 838,443.8 840,444.1 842,444.5 844,444.9 846,445.2 848,445.6 850,446 852,446.3 854,446.7 856,447.1 858,447.4 860,447.7 862,448 864,448.4 866,448.6 868,448.9 870,449.2 872,449.5 874,449.7 876,450 878,450.3 880,450.5 882,450.7 884,451 886,451.2 888,451.4 890,451.7 892,451.9 894,452.1 896,452.4 898,452.6 900,452.8 902,453 904,453.3 906,453.5 908,453.7 910,453.9 912,454.2 914,454.4 916,454.7 918,455 920,455.3 922,455.7 924,456 926,456.4 928,456.8 930,457.3 932,457.7 934,458.2 936,458.6 938,459.1 940,459.6 942,460.1 944,460.6 946,461.1 948,461.6 950,462.1 952,462.7 954,463.3 956,463.8 958,464.4 960,465 962,465.6 964,466.2 966,466.8 968,467.3 970,467.9 972,468.4 974,468.8 976,469.1 978,469.4 980,469.6 982,469.7 984,469.8 986,469.7 988,469.7 990,469.5 992,469.4 994,469.2 996,469 998,468.9 1000,468.7 1002,468.5 1004,468.4 1006,468.2 1008,468.1 1010,467.9 1012,467.8 1014,467.6 1016,467.5 1018,467.3 1020,467.2 1022,467 1024,466.9 1026,466.8 1028,466.7 1030,466.6 1032,466.5 1034,466.4 1036,466.3 1038,466.2 1040,466 1042,465.9 1044,465.8 1046,465.6 1048,465.3 1050,465 1052,464.7 1054,464.3 1056,463.8 1058,463.3 1060,462.8 1062,462.2 1064,461.6 1066,460.9 1068,460.3 1070,459.6 1072,459 1074,458.3 1076,457.7 1078,457 1080,456.4 1082,455.9 1084,455.4 1086,454.9 1088,454.4 1090,454 1092,453.6 1094,453.2 1096,452.9 1098,452.6 1100,452.3 1102,452.1 1104,451.8 1105.7,451.6" fill="none" stroke="#ff9a10" stroke-width="1.9" stroke-linejoin="round"/>
<path d="M0,456L2,456.4 4,456.8 6,457.1 8,457.3 10,457.5 12,457.5 14,457.5 16,457.3 18,456.9 20,456.5 22,455.9 24,455.3 26,454.6 28,453.7 30,452.8 32,451.9 34,451 36,450 38,449 40,448 42,447 44,446 46,445 48,444 50,443 52,442.1 54,441.1 56,440.1 58,439.2 60,438.2 62,437.2 64,436.3 66,435.3 68,434.4 70,433.4 72,432.4 74,431.4 76,430.4 78,429.4 80,428.4 82,427.4 84,426.3 86,425.3 88,424.2 90,423.2 92,422.2 94,421.1 96,420.1 98,419.1 100,418.1 102,417.1 104,416.1 106,415.1 108,414.2 110,413.2 112,412.3 114,411.4 116,410.5 118,409.6 120,408.7 122,407.8 124,406.9 126,406.1 128,405.2 130,404.3 132,403.4 134,402.5 136,401.4 138,400.4 140,399.3 142,398.1 144,396.8 146,395.5 148,394.2 150,392.9 152,391.6 154,390.3 156,388.9 158,387.5 160,386.1 162,384.7 164,383.2 166,381.6 168,380.1 170,378.5 172,377.1 174,375.7 176,374.3 178,373.1 180,371.9 182,370.9 184,369.9 186,368.9 188,368 190,367.1 192,366.2 194,365.4 196,364.5 198,363.5 200,362.3 202,361 204,359.5 206,357.7 208,355.7 210,353.6 212,351.3 214,348.8 216,346.1 218,343.4 220,340.6 222,337.7 224,334.9 226,332 228,329.2 230,326.6 232,323.9 234,321.4 236,318.9 238,316.5 240,314 242,311.6 244,309.2 246,306.8 248,304.4 250,302 252,299.6 254,297.2 256,294.8 258,292.4 260,290 262,287.6 264,285.2 266,282.8 268,280.4 270,278 272,275.5 274,273 276,270.4 278,267.8 280,265.2 282,262.4 284,259.5 286,256.6 288,253.7 290,250.7 292,247.8 294,244.8 296,241.8 298,238.8 300,235.9 302,232.9 304,230 306,227.1 308,224.3 310,221.7 312,219.1 314,216.7 316,214.4 318,212.3 320,210.2 322,208.1 324,206 326,204.1 328,202.4 330,200.9 332,199.5 334,198.2 336,197.1 338,196.2 340,195.3 342,194.4 344,193.5 346,192.6 348,191.8 350,191 352,190.3 354,189.7 356,189.1 358,188.7 360,188.2 362,187.9 364,187.6 366,187.3 368,186.9 370,186.6 372,186.5 374,186.5 376,186.6 378,186.9 380,187.4 382,188 384,188.8 386,189.7 388,190.6 390,191.5 392,192.6 394,193.8 396,195 398,196.2 400,197.6 402,199 404,200.6 406,202.2 408,203.8 410,205.5 412,207.4 414,209.2 416,211.1 418,213.1 420,215 422,217.1 424,219.3 426,221.6 428,223.9 430,226.3 432,228.8 434,231.4 436,234 438,236.6 440,239.3 442,242 444,244.8 446,247.6 448,250.5 450,253.6 452,256.7 454,259.9 456,263.2 458,266.6 460,269.9 462,273.1 464,276.2 466,279.2 468,282.2 470,285 472,287.7 474,290.3 476,292.9 478,295.5 480,298 482,300.4 484,302.7 486,305 488,307.2 490,309.4 492,311.5 494,313.5 496,315.5 498,317.5 500,319.5 502,321.5 504,323.5 506,325.5 508,327.5 510,329.4 512,331.3 514,333.2 516,335 518,336.8 520,338.6 522,340.3 524,342 526,343.7 528,345.4 530,347 532,348.6 534,350.3 536,351.9 538,353.6 540,355.4 542,357.2 544,359 546,360.9 548,362.8 550,364.8 552,366.8 554,368.9 556,371 558,373.1 560,375.3 562,377.5 564,379.7 566,381.9 568,384.2 570,386.5 572,388.9 574,391.5 576,394 578,396.3 580,398.5 582,400.5 584,402.4 586,404 588,405.2 590,406.3 592,407.4 594,408.4 596,409.2 598,410 600,410.7 602,411.3 604,412 606,412.6 608,413.2 610,413.9 612,414.5 614,415.1 616,415.8 618,416.4 620,417 622,417.5 624,418 626,418.5 628,419 630,419.6 632,420.1 634,420.7 636,421.3 638,422 640,422.7 642,423.5 644,424.3 646,425.2 648,426.1 650,427.1 652,428 654,429 656,430 658,431 660,432 662,432.9 664,433.8 666,434.6 668,435.4 670,436.1 672,436.8 674,437.4 676,437.9 678,438.4 680,438.8 682,439.1 684,439.5 686,439.8 688,440 690,440.2 692,440.5 694,440.7 696,440.9 698,441.1 700,441.2 702,441.3 704,441.4 706,441.4 708,441.5 710,441.5 712,441.5 714,441.5 716,441.5 718,441.4 720,441.4 722,441.3 724,441.2 726,441.1 728,441 730,440.9 732,440.8 734,440.7 736,440.6 738,440.6 740,440.5 742,440.5 744,440.5 746,440.5 748,440.5 750,440.5 752,440.5 754,440.5 756,440.5 758,440.5 760,440.5 762,440.5 764,440.5 766,440.5 768,440.5 770,440.5 772,440.5 774,440.6 776,440.6 778,440.7 780,440.8 782,440.9 784,441 786,441.1 788,441.3 790,441.4 792,441.6 794,441.8 796,442 798,442.2 800,442.4 802,442.6 804,442.7 806,442.9 808,443 810,443.1 812,443.3 814,443.4 816,443.6 818,443.8 820,444 822,444.2 824,444.4 826,444.7 828,445 830,445.4 832,445.8 834,446.3 836,446.9 838,447.5 840,448.1 842,448.8 844,449.4 846,450 848,450.5 850,451.1 852,451.6 854,452.1 856,452.5 858,453 860,453.4 862,453.8 864,454.2 866,454.5 868,454.9 870,455.2 872,455.5 874,455.8 876,456 878,456.3 880,456.5 882,456.8 884,457 886,457.2 888,457.4 890,457.6 892,457.8 894,458.1 896,458.3 898,458.5 900,458.8 902,459 904,459.3 906,459.6 908,459.8 910,460.1 912,460.4 914,460.7 916,461.1 918,461.4 920,461.7 922,462.1 924,462.5 926,462.9 928,463.3 930,463.8 932,464.4 934,464.9 936,465.6 938,466.3 940,467 942,467.8 944,468.7 946,469.6 948,470.5 950,471.4 952,472.4 954,473.4 956,474.3 958,475.3 960,476.3 962,477.2 964,478.2 966,479 968,479.8 970,480.6 972,481.2 974,481.6 976,481.9 978,482 980,482.1 982,482 984,481.7 986,481.5 988,481.2 990,480.9 992,480.6 994,480.3 996,479.9 998,479.5 1000,479.1 1002,478.6 1004,478.1 1006,477.5 1008,476.9 1010,476.3 1012,475.6 1014,474.9 1016,474.2 1018,473.4 1020,472.7 1022,472 1024,471.3 1026,470.6 1028,469.9 1030,469.2 1032,468.5 1034,467.9 1036,467.2 1038,466.6 1040,466 1042,465.4 1044,464.8 1046,464.1 1048,463.5 1050,462.9 1052,462.2 1054,461.5 1056,460.8 1058,460 1060,459.1 1062,458.2 1064,457.2 1066,456.2 1068,455.2 1070,454.2 1072,453.1 1074,452.1 1076,451.1 1078,450.1 1080,449.1 1082,448.1 1084,447.2 1086,446.4 1088,445.6 1090,444.9 1092,444.2 1094,443.6 1096,443.1 1098,442.5 1100,441.9 1102,441.4 1104,440.9 1105.7,440.4" fill="none" stroke="#5cf01a" stroke-width="1.9" stroke-linejoin="round"/>
<path d="M0,458L2,457.3 4,456.6 6,455.9 8,455.2 10,454.3 12,453.2 14,451.8 16,450.4 18,448.8 20,447 22,445 24,443 26,441 28,439 30,437 32,435 34,433 36,431 38,429 40,427 42,425 44,423 46,421 48,419 50,417.1 52,415.4 54,413.8 56,412.2 58,410.6 60,409 62,407.5 64,406.1 66,404.9 68,403.7 70,402.5 72,401.3 74,400.1 76,398.9 78,397.7 80,396.5 82,395.3 84,394.1 86,392.9 88,391.8 90,390.8 92,389.8 94,388.9 96,387.9 98,387 100,386.2 102,385.6 104,385.2 106,384.9 108,384.8 110,385 112,385.4 114,385.8 116,386.2 118,386.5 120,386.7 122,386.9 124,387 126,387.2 128,387.3 130,387.4 132,387.4 134,387.3 136,387.2 138,387.1 140,386.8 142,386.2 144,385.4 146,384.6 148,383.8 150,382.9 152,381.9 154,380.8 156,379.6 158,378.5 160,377.4 162,376.2 164,374.8 166,373.2 168,371.6 170,370 172,368.4 174,366.8 176,365.1 178,363.3 180,361.5 182,359.7 184,357.9 186,356 188,354 190,352 192,350 194,347.9 196,345.6 198,343 200,340.3 202,337.3 204,333.9 206,330 208,326 210,321.6 212,316.7 214,311.3 216,306.1 218,301 220,296.2 222,291.5 224,286.9 226,282.6 228,278.5 230,274.5 232,270.8 234,267.4 236,264.4 238,261.4 240,258.3 242,255 244,251.5 246,247.8 248,244.3 250,240.8 252,237.5 254,234.2 256,230.8 258,227.5 260,224.2 262,221 264,218.1 266,215.3 268,212.7 270,209.2 272,205 274,200 276,195 278,190 280,185 282,180 284,175.2 286,170.7 288,166.5 290,163.2 292,160.5 294,158.8 296,157.8 298,157.5 300,157.4 302,157.1 304,156.7 306,156.3 308,155.6 310,154.8 312,153.9 314,153.1 316,152.7 318,152.7 320,152.8 322,153.2 324,153.7 326,154.6 328,155.5 330,156.4 332,157.2 334,158 336,158.7 338,159.4 340,160.1 342,160.9 344,161.8 346,162.9 348,163.9 350,165.3 352,167 354,169 356,171.7 358,175 360,179.1 362,183.2 364,187.5 366,191.7 368,195.9 370,200 372,204 374,207.8 376,211 378,213.8 380,216.2 382,218.8 384,221.3 386,223.9 388,226.5 390,229.2 392,231.8 394,234.5 396,237.2 398,239.8 400,242.5 402,245.2 404,247.8 406,250.5 408,253.1 410,255.7 412,258.4 414,261.2 416,263.9 418,266.7 420,269.7 422,273 424,276.5 426,280 428,283.5 430,287 432,290.5 434,294 436,297.5 438,301 440,304.3 442,307.5 444,310.5 446,313.5 448,316.5 450,319.5 452,322.5 454,325.5 456,328.5 458,331.5 460,334.4 462,337.2 464,339.9 466,342.6 468,345.3 470,347.9 472,350.3 474,352.6 476,354.9 478,357.2 480,359.2 482,361 484,362.5 486,364 488,365.5 490,366.8 492,368 494,369 496,370 498,371 500,372 502,373 504,374 506,375 508,376 510,376.9 512,377.8 514,378.6 516,379.4 518,380.2 520,381.1 522,382 524,383 526,384 528,385 530,386 532,387 534,388 536,389 538,390 540,390.9 542,391.7 544,392.4 546,393.1 548,393.8 550,395 552,396.7 554,398.9 556,401.2 558,403.6 560,406 562,408.5 564,411.2 566,413.9 568,416.6 570,419.1 572,421.4 574,423.8 576,426.2 578,428.6 580,431 582,433.3 584,435.6 586,437.8 588,439.5 590,440.9 592,441.7 594,442.5 596,443 598,443.3 600,443.5 602,443.5 604,443.4 606,443.2 608,443.2 610,443.5 612,444 614,444.5 616,444.8 618,445 620,445 622,445 624,444.8 626,444.5 628,444 630,443.5 632,443.1 634,442.8 636,442.5 638,442.2 640,441.9 642,441.5 644,441 646,440.5 648,440 650,439.5 652,439 654,438.5 656,438.1 658,437.8 660,437.5 662,437.2 664,437 666,436.8 668,436.5 670,436.2 672,436 674,435.6 676,435.2 678,434.9 680,434.8 682,435.1 684,435.8 686,436.4 688,437 690,437.5 692,438 694,438.5 696,438.9 698,439.2 700,439.5 702,439.8 704,439.9 706,440 708,440 710,440 712,440 714,440.1 716,440.2 718,440.4 720,440.5 722,440.8 724,441 726,441.2 728,441.5 730,441.8 732,442 734,442.2 736,442.5 738,442.6 740,442.8 742,442.9 744,443 746,443.1 748,443.2 750,443.4 752,443.5 754,443.8 756,444 758,444.2 760,444.5 762,444.6 764,444.8 766,444.9 768,444.9 770,444.8 772,444.5 774,444.2 776,444 778,443.9 780,443.8 782,443.6 784,443.6 786,443.6 788,443.8 790,443.9 792,444 794,444.1 796,444.2 798,444.4 800,444.5 802,444.6 804,444.8 806,444.9 808,445 810,445.1 812,445.2 814,445.4 816,445.5 818,445.8 820,446 822,446.2 824,446.4 826,446.5 828,446.6 830,446.9 832,447.4 834,448.2 836,449 838,449.7 840,450.3 842,451.2 844,452.2 846,453.5 848,454.8 850,456.1 852,457.4 854,458.6 856,459.9 858,461.1 860,462.3 862,463.4 864,464.4 866,465.4 868,466.2 870,467 872,467.6 874,468.2 876,468.8 878,469.3 880,469.6 882,469.8 884,470 886,470.2 888,470.5 890,470.8 892,471.2 894,471.5 896,471.8 898,471.9 900,472 902,472 904,472 906,472 908,472 910,472 912,472 914,472 916,472 918,472 920,472 922,472.1 924,472.2 926,472.5 928,472.7 930,472.9 932,473.2 934,473.4 936,473.6 938,473.8 940,474.2 942,474.8 944,475.7 946,476.6 948,477.6 950,478.7 952,479.8 954,481 956,482.3 958,483.7 960,485.1 962,486.6 964,488.1 966,489.4 968,490.6 970,491.6 972,492.5 974,493.3 976,493.9 978,494 980,493.7 982,493.2 984,492.6 986,491.9 988,491.3 990,490.6 992,490 994,489.3 996,488.7 998,488 1000,487.2 1002,486.3 1004,485.2 1006,483.9 1008,482.4 1010,480.9 1012,479.4 1014,478.1 1016,476.9 1018,475.6 1020,474.2 1022,472.9 1024,471.6 1026,470.1 1028,468.4 1030,466.5 1032,464.3 1034,461.8 1036,459.2 1038,456.6 1040,454 1042,451.2 1044,448.3 1046,445.2 1048,442.2 1050,439.5 1052,436.9 1054,434.1 1056,431 1058,427.8 1060,425 1062,422.4 1064,420.4 1066,418.8 1068,417.5 1070,416 1072,414.4 1074,412.8 1076,411.3 1078,409.9 1080,408.7 1082,407.6 1084,406.8 1086,406.2 1088,406 1090,406 1092,406 1094,406 1096,406 1098,406 1100,406 1102,405.9 1104,405.8 1105.7,405.6" fill="none" stroke="#1440f5" stroke-width="2.0" stroke-linejoin="round"/>
</g>
<ellipse cx="1109.8" cy="449" rx="22.2" ry="11.3" fill="none" stroke="#9a9a9a" stroke-opacity="0.55" stroke-width="2.4"/>
<ellipse cx="1107.3" cy="446.7" rx="22.2" ry="11.3" fill="none" stroke="#208a20" stroke-width="2.2"/>
<g clip-path="url(#cvol)">
<path d="M0.2,624V619.5M3.6,624V620.5M8.7,624V621.5M12.1,624V622M13.8,624V609M15.5,624V620.3M17.2,624V620.1M18.9,624V619.6M20.6,624V618.4M22.3,624V621.4M24,624V623.3M30.8,624V623M34.3,624V622.7M37.7,624V623.3M41.1,624V622.3M44.5,624V622.7M51.3,624V621.9M54.7,624V622.1M56.4,624V622.4M58.1,624V621.4M59.8,624V622.6M63.2,624V623.2M66.7,624V622.4M70.1,624V622.1M76.9,624V619.5M80.3,624V621.2M87.1,624V622.2M90.5,624V615M93.9,624V619.1M99,624V623M102.5,624V619.2M104.2,624V622.1M112.7,624V622.9M114.4,624V622.4M116.1,624V622.3M119.5,624V621.1M122.9,624V622.1M128,624V621.1M129.7,624V621.2M133.1,624V618.7M136.6,624V623.2M140,624V597M141.7,624V623.1M143.4,624V621.6M145.1,624V607M146.8,624V610M150.2,624V622.9M160.4,624V623M162.1,624V622.4M163.8,624V622.2M165.5,624V622.3M169,624V623.1M174.1,624V622.5M175.8,624V622.4M180.9,624V621.9M187.7,624V622.4M189.4,624V621.9M191.1,624V621M192.8,624V608M194.5,624V615M196.2,624V623.1M197.9,624V620M199.6,624V621.8M201.3,624V622.7M204.8,624V623M206.5,624V619.3M208.2,624V623.4M209.9,624V622.2M211.6,624V611M213.3,624V613.5M216.7,624V622.6M220.1,624V622.2M225.2,624V622.6M228.6,624V622M230.3,624V622.7M232,624V623.1M235.4,624V623.3M240.6,624V621M242.3,624V619.1M244,624V622M245.7,624V623.2M249.1,624V620.9M254.2,624V619.7M255.9,624V621.8M259.3,624V623.2M262.7,624V623.2M266.1,624V621.4M269.5,624V606.5M271.3,624V622.4M273,624V622.9M274.7,624V615M276.4,624V616.8M288.3,624V621.9M290,624V619.6M291.7,624V622.7M300.2,624V622.2M301.9,624V623.2M305.4,624V623.2M308.8,624V621.4M310.5,624V622.1M313.9,624V621.1M324.1,624V622.4M327.5,624V622.9M330.9,624V617.5M332.6,624V617.3M336,624V621.3M342.9,624V622.5M354.8,624V620.9M358.2,624V616.8M361.6,624V622M363.3,624V617M366.7,624V621.9M370.1,624V622.1M371.8,624V621.8M373.6,624V620.1M375.3,624V620.7M377,624V613.2M380.4,624V621M382.1,624V622.6M385.5,624V623M395.7,624V619.5M399.1,624V622.3M416.2,624V619.6M419.6,624V621.8M428.1,624V621.4M431.5,624V623.3M434.9,624V623.2M438.3,624V622.2M441.8,624V623.5M448.6,624V623.5M453.7,624V623.4M457.1,624V622.3M460.5,624V623.5M463.9,624V623.5M465.6,624V623.2M467.3,624V623.3M469,624V622.5M470.7,624V622.9M472.4,624V620.4M474.1,624V622.9M477.6,624V621.3M479.3,624V623.2M481,624V623.4M482.7,624V623.1M484.4,624V623.5M487.8,624V623.5M491.2,624V623.2M494.6,624V622.9M510,624V623.4M513.4,624V623.5M516.8,624V623.5M520.2,624V623.4M523.6,624V623.4M528.7,624V623.5M538.9,624V623.5M540.6,624V623.5M542.3,624V623.5M545.8,624V622.4M547.5,624V623.1M549.2,624V622.9M562.8,624V623.4M564.5,624V622.9M567.9,624V622.4M569.6,624V621.8M571.3,624V606M578.2,624V615.5M579.9,624V623.2M581.6,624V621.7M583.3,624V622.9M585,624V621.8M586.7,624V622.7M590.1,624V623.4M593.5,624V623.3M595.2,624V622.5M596.9,624V621.8M598.6,624V621M602,624V622.6M605.4,624V621.9M608.8,624V623.5M615.7,624V622.9M619.1,624V623.1M620.8,624V622.7M622.5,624V623.4M624.2,624V620.6M625.9,624V623.3M627.6,624V621.7M629.3,624V622.8M634.4,624V616.8M639.5,624V618.5M641.2,624V619.3M651.5,624V622.5M654.9,624V622.4M656.6,624V621.4M658.3,624V621.3M661.7,624V622.5M668.5,624V623.2M670.2,624V622.9M671.9,624V622.9M673.6,624V621.6M675.3,624V623.1M682.2,624V623.1M690.7,624V621.2M694.1,624V621.2M695.8,624V622.6M697.5,624V623.1M699.2,624V621.7M700.9,624V622M702.6,624V623.2M706,624V623.5M711.1,624V622M714.6,624V622.4M719.7,624V622.9M723.1,624V623.3M728.2,624V623.3M731.6,624V623.5M735,624V623.5M740.1,624V623.4M741.8,624V623.3M743.5,624V622.9M745.2,624V623.5M746.9,624V623.4M748.7,624V623.3M750.4,624V623.5M752.1,624V623.5M757.2,624V622.3M760.6,624V623.1M764,624V623.5M765.7,624V622.3M769.1,624V622.3M770.8,624V623.4M774.2,624V623.5M775.9,624V623.5M782.8,624V622.6M784.5,624V620.1M787.9,624V623.3M794.7,624V622.8M798.1,624V620.9M804.9,624V623.3M806.6,624V620.9M810,624V622.7M815.1,624V623.1M822,624V622.7M830.5,624V622.8M832.2,624V623.1M835.6,624V623.1M837.3,624V623.5M839,624V622.7M847.5,624V623.3M851,624V622.7M856.1,624V622.5M859.5,624V622.1M861.2,624V612.8M866.3,624V622.7M869.7,624V621.6M873.1,624V623.5M876.5,624V623.5M878.2,624V623.4M881.6,624V619.6M886.8,624V622.5M891.9,624V621.9M893.6,624V622.6M897,624V623.5M898.7,624V623.4M900.4,624V622.1M902.1,624V622.6M903.8,624V623.5M907.2,624V623.1M914,624V623.3M917.4,624V622.7M931.1,624V623.3M934.5,624V623.5M943,624V621.9M953.3,624V623.1M958.4,624V623.5M960.1,624V623.2M961.8,624V622.3M965.2,624V623.5M966.9,624V623.2M968.6,624V621.3M972,624V621.2M975.4,624V622.2M977.1,624V622.8M978.8,624V606M980.5,624V610M982.2,624V613.5M985.6,624V621.7M989.1,624V623.3M992.5,624V623.1M995.9,624V622.5M999.3,624V622.8M1002.7,624V623.1M1004.4,624V622.9M1009.5,624V623.4M1012.9,624V622.7M1018,624V622.6M1019.7,624V620.8M1021.5,624V623.2M1023.2,624V616.5M1024.9,624V620.1M1026.6,624V621.8M1030,624V616M1036.8,624V622.8M1045.3,624V621.6M1047,624V623.1M1048.7,624V621.9M1052.1,624V622.9M1053.8,624V622.9M1055.6,624V610M1057.3,624V621.8M1060.7,624V622.3M1064.1,624V623.4M1065.8,624V623.5M1067.5,624V622.8M1070.9,624V622.7M1074.3,624V618.3M1082.8,624V621.9M1086.2,624V623M1094.8,624V623M1096.5,624V622.4M1098.2,624V619.2M1099.9,624V623.1M1105,624V622.6" stroke="#30ac30" stroke-width="1.3" fill="none"/>
<path d="M1.9,624V622.9M5.3,624V621.1M7,624V620.4M10.4,624V620.1M25.7,624V622M27.4,624V622.7M29.1,624V620.7M32.6,624V622.9M36,624V620.5M39.4,624V621M42.8,624V620.5M46.2,624V619.3M47.9,624V619.3M49.6,624V622.7M53,624V621.8M61.5,624V617.7M64.9,624V623.3M68.4,624V622.4M71.8,624V620.6M73.5,624V622.9M75.2,624V620.5M78.6,624V622.4M82,624V623M83.7,624V622.7M85.4,624V623M88.8,624V623.1M92.2,624V620.5M95.6,624V620.8M97.3,624V622.6M100.8,624V622.1M105.9,624V621.9M107.6,624V621.6M109.3,624V601.5M111,624V622.4M117.8,624V623.4M121.2,624V622.9M124.6,624V621.7M126.3,624V623M131.4,624V622.8M134.9,624V618.2M138.3,624V620.5M148.5,624V622.7M151.9,624V623.1M153.6,624V621.7M155.3,624V623.1M157,624V623.2M158.7,624V622.7M167.2,624V621.8M170.7,624V621.2M172.4,624V614M177.5,624V621.3M179.2,624V623.1M182.6,624V620M184.3,624V622.6M186,624V618.8M203.1,624V622M215,624V622.6M218.4,624V618.6M221.8,624V622.5M223.5,624V620.6M226.9,624V622.6M233.7,624V623.4M237.2,624V623.1M238.9,624V623.3M247.4,624V622.4M250.8,624V622.5M252.5,624V611M257.6,624V623.3M261,624V621.2M264.4,624V623M267.8,624V622.6M278.1,624V621.2M279.8,624V623M281.5,624V622.6M283.2,624V623.3M284.9,624V621.3M286.6,624V622.4M293.4,624V612M295.1,624V618.2M296.8,624V619M298.5,624V623.1M303.6,624V619.8M307.1,624V622M312.2,624V616.2M315.6,624V622.2M317.3,624V618M319,624V614.8M320.7,624V619.8M322.4,624V612.8M325.8,624V622.6M329.2,624V621.7M334.3,624V622.9M337.7,624V621.3M339.5,624V617.2M341.2,624V619.9M344.6,624V618.6M346.3,624V620.3M348,624V620.3M349.7,624V615M351.4,624V623M353.1,624V620.4M356.5,624V622.2M359.9,624V616M365,624V619.5M368.4,624V616.5M378.7,624V620.2M383.8,624V623.2M387.2,624V618.2M388.9,624V621.8M390.6,624V620.4M392.3,624V622.3M394,624V622.8M397.4,624V622.8M400.8,624V617.3M402.5,624V619.8M404.2,624V617.8M405.9,624V617.9M407.7,624V615.3M409.4,624V617M411.1,624V621M412.8,624V618.9M414.5,624V623M417.9,624V620.2M421.3,624V610M423,624V615.9M424.7,624V622.9M426.4,624V616M429.8,624V622.8M433.2,624V623.5M436.6,624V623.1M440,624V621.4M443.5,624V621.3M445.2,624V623.2M446.9,624V623.5M450.3,624V623M452,624V621.6M455.4,624V623M458.8,624V623.4M462.2,624V623.5M475.9,624V623.5M486.1,624V623.5M489.5,624V623.5M492.9,624V621.3M496.3,624V622.5M498,624V623.5M499.7,624V623.5M501.4,624V623.4M503.1,624V621.6M504.8,624V620.4M506.5,624V623M508.2,624V622.8M511.7,624V623.5M515.1,624V623.1M518.5,624V623.1M521.9,624V623.5M525.3,624V622.7M527,624V622.5M530.4,624V623.4M532.1,624V622.7M533.8,624V623M535.5,624V623.3M537.2,624V621.9M544.1,624V623.4M550.9,624V609M552.6,624V619.8M554.3,624V622.6M556,624V623.4M557.7,624V620.6M559.4,624V615.5M561.1,624V623.2M566.2,624V621.4M573,624V621.8M574.7,624V619.9M576.4,624V623.1M588.4,624V622.6M591.8,624V616.4M600.3,624V619.6M603.7,624V622.6M607.1,624V622.3M610.5,624V621.2M612.3,624V623M614,624V622.3M617.4,624V622.9M631,624V623.5M632.7,624V622.9M636.1,624V620.1M637.8,624V620.6M642.9,624V623.2M644.6,624V622.6M646.4,624V622.8M648.1,624V622.2M649.8,624V623.1M653.2,624V621.9M660,624V623.1M663.4,624V623M665.1,624V621.7M666.8,624V622.6M677,624V611M678.7,624V622M680.5,624V622.1M683.9,624V622.9M685.6,624V618.8M687.3,624V594M689,624V621.9M692.4,624V622.9M704.3,624V623.4M707.7,624V623.4M709.4,624V622M712.8,624V623.2M716.3,624V623.5M718,624V623.2M721.4,624V623.5M724.8,624V623.3M726.5,624V612.8M729.9,624V622.8M733.3,624V622.9M736.7,624V621.5M738.4,624V622.9M753.8,624V623.4M755.5,624V623.3M758.9,624V623.4M762.3,624V623.5M767.4,624V623M772.5,624V623.2M777.6,624V623.5M779.3,624V623.3M781,624V623.1M786.2,624V623.1M789.6,624V623.5M791.3,624V616M793,624V623.3M796.4,624V623.4M799.8,624V623.5M801.5,624V623M803.2,624V623.3M808.3,624V623.2M811.7,624V623.2M813.4,624V623.5M816.9,624V623.3M818.6,624V623.5M820.3,624V620.8M823.7,624V623.1M825.4,624V623.5M827.1,624V622.6M828.8,624V622.8M833.9,624V623M840.7,624V622.8M842.4,624V622.9M844.1,624V623.2M845.8,624V622.9M849.2,624V620.6M852.7,624V622.8M854.4,624V621.3M857.8,624V622M862.9,624V623.5M864.6,624V623.2M868,624V621.9M871.4,624V623.5M874.8,624V622.8M879.9,624V621.6M883.3,624V622.3M885.1,624V621.4M888.5,624V623.5M890.2,624V623M895.3,624V622.3M905.5,624V620.9M908.9,624V623.5M910.6,624V622.5M912.3,624V615M915.7,624V623.3M919.2,624V623M920.9,624V621.4M922.6,624V623.1M924.3,624V623.5M926,624V623.3M927.7,624V623.5M929.4,624V622.8M932.8,624V623.5M936.2,624V623.4M937.9,624V623M939.6,624V622.8M941.3,624V622.3M944.7,624V622.7M946.4,624V623.2M948.1,624V621M949.8,624V623.5M951.5,624V615M955,624V623.5M956.7,624V623.3M963.5,624V622.4M970.3,624V622.3M973.7,624V621.5M983.9,624V623.4M987.4,624V622.3M990.8,624V620.4M994.2,624V623M997.6,624V622.9M1001,624V621.5M1006.1,624V621.7M1007.8,624V616.4M1011.2,624V622.7M1014.6,624V623.4M1016.3,624V622.4M1028.3,624V622.5M1031.7,624V623.1M1033.4,624V617M1035.1,624V620.4M1038.5,624V617.6M1040.2,624V622M1041.9,624V620.7M1043.6,624V623.3M1050.4,624V623.5M1059,624V621.1M1062.4,624V623.3M1069.2,624V622.7M1072.6,624V622.4M1076,624V622.6M1077.7,624V614M1079.4,624V617M1081.1,624V618.2M1084.5,624V622.7M1087.9,624V623.4M1089.7,624V618M1091.4,624V620.3M1093.1,624V622.6M1101.6,624V622.7M1103.3,624V619" stroke="#b83a3a" stroke-width="1.3" fill="none"/>
</g>
<g clip-path="url(#cmacd)">
<path d="M0.2,670.5V669M1.9,670.5V669.5M3.6,670.5V669.9M10.4,670.5V669.9M12.1,670.5V669.6M13.8,670.5V669.3M15.5,670.5V668.8M17.2,670.5V667.7M18.9,670.5V666.8M20.6,670.5V666.2M22.3,670.5V665.6M24,670.5V665.6M25.7,670.5V665.6M27.4,670.5V665.7M29.1,670.5V667.1M30.8,670.5V668.3M32.6,670.5V669.2M34.3,670.5V670.1M102.5,670.5V670M104.2,670.5V669.4M105.9,670.5V669M107.6,670.5V670.1M141.7,670.5V669.1M143.4,670.5V668M145.1,670.5V667.1M146.8,670.5V664.1M148.5,670.5V661.8M150.2,670.5V661.6M151.9,670.5V662.2M153.6,670.5V663.6M155.3,670.5V665.2M157,670.5V666.5M158.7,670.5V667.8M160.4,670.5V669M162.1,670.5V669.9M163.8,670.5V669.8M165.5,670.5V669.5M167.2,670.5V669.2M169,670.5V669M170.7,670.5V668.9M172.4,670.5V668.8M174.1,670.5V668.7M175.8,670.5V668.7M177.5,670.5V668.7M179.2,670.5V669.6M199.6,670.5V669.6M201.3,670.5V668.9M203.1,670.5V668.4M204.8,670.5V668M206.5,670.5V665.4M208.2,670.5V663M209.9,670.5V661.1M211.6,670.5V659.6M213.3,670.5V658.4M215,670.5V657.4M216.7,670.5V658.3M218.4,670.5V659M220.1,670.5V659.8M221.8,670.5V663.2M223.5,670.5V666M225.2,670.5V668.3M273,670.5V667.8M274.7,670.5V663.4M276.4,670.5V660.8M278.1,670.5V661.4M279.8,670.5V662M281.5,670.5V664.4M283.2,670.5V666.6M284.9,670.5V668.4M368.4,670.5V669.9M370.1,670.5V668.7M371.8,670.5V667.6M373.6,670.5V666.5M375.3,670.5V665.7M377,670.5V665M378.7,670.5V665M380.4,670.5V665.3M382.1,670.5V665.5M383.8,670.5V665.4M385.5,670.5V665.3M387.2,670.5V665.3M388.9,670.5V666.8M390.6,670.5V668.4M392.3,670.5V669.7M436.6,670.5V670.1M438.3,670.5V669.3M440,670.5V668.7M441.8,670.5V668.2M443.5,670.5V668M445.2,670.5V667.9M446.9,670.5V667.9M448.6,670.5V667.8M450.3,670.5V667.8M452,670.5V668.1M453.7,670.5V668.3M455.4,670.5V668.4M457.1,670.5V668.6M458.8,670.5V668.5M460.5,670.5V668.3M462.2,670.5V668.2M463.9,670.5V668.1M465.6,670.5V667.7M467.3,670.5V667M469,670.5V666.4M470.7,670.5V665.8M472.4,670.5V665M474.1,670.5V664.4M475.9,670.5V664.1M477.6,670.5V664.1M479.3,670.5V664.1M481,670.5V664.1M482.7,670.5V664.1M484.4,670.5V664.1M486.1,670.5V664.4M487.8,670.5V664.8M489.5,670.5V665.1M491.2,670.5V665.9M492.9,670.5V666.8M494.6,670.5V667.5M496.3,670.5V668.4M547.5,670.5V669.4M549.2,670.5V666.6M550.9,670.5V666.2M552.6,670.5V667.7M554.3,670.5V669M567.9,670.5V670.1M569.6,670.5V669.5M571.3,670.5V669.1M573,670.5V668.9M574.7,670.5V668.8M576.4,670.5V668.7M578.2,670.5V668.3M579.9,670.5V667.6M581.6,670.5V667.1M583.3,670.5V666.8M585,670.5V666.7M586.7,670.5V666.6M588.4,670.5V666.3M590.1,670.5V665.9M591.8,670.5V665.5M593.5,670.5V664.6M595.2,670.5V663.3M596.9,670.5V662.8M598.6,670.5V662.7M600.3,670.5V662.8M602,670.5V663.5M603.7,670.5V664M605.4,670.5V664.7M607.1,670.5V665.9M608.8,670.5V666.8M610.5,670.5V669M632.7,670.5V669.4M634.4,670.5V668.8M636.1,670.5V668.4M637.8,670.5V669.5M661.7,670.5V669.9M663.4,670.5V670.1M670.2,670.5V669.9M671.9,670.5V669.6M673.6,670.5V668M675.3,670.5V666.1M677,670.5V665.5M678.7,670.5V665.6M680.5,670.5V665.8M682.2,670.5V666.2M683.9,670.5V666.8M685.6,670.5V668.1M704.3,670.5V669.6M706,670.5V669.5M707.7,670.5V669.5M709.4,670.5V669.5M711.1,670.5V669.8M712.8,670.5V670.1M718,670.5V669.8M719.7,670.5V669.3M721.4,670.5V669.1M723.1,670.5V670.1M750.4,670.5V669.5M752.1,670.5V668.6M753.8,670.5V668.3M755.5,670.5V668.2M757.2,670.5V668.1M758.9,670.5V668M760.6,670.5V667.9M762.3,670.5V667.9M764,670.5V667.8M765.7,670.5V667.8M767.4,670.5V667.8M769.1,670.5V667.7M770.8,670.5V667.7M772.5,670.5V667.6M774.2,670.5V668M775.9,670.5V668.2M777.6,670.5V668.5M779.3,670.5V669.5M840.7,670.5V670.2M842.4,670.5V669.9M844.1,670.5V669.7M845.8,670.5V669.7M847.5,670.5V670M849.2,670.5V670.2M859.5,670.5V669.2M861.2,670.5V667.9M862.9,670.5V667.4M864.6,670.5V666.9M866.3,670.5V667.3M868,670.5V667.8M869.7,670.5V668.3M871.4,670.5V668.6M873.1,670.5V668.8M874.8,670.5V668.9M876.5,670.5V668.9M878.2,670.5V668.9M879.9,670.5V669M881.6,670.5V669.1M883.3,670.5V669.2M885.1,670.5V669.3M886.8,670.5V669.4M888.5,670.5V669.6M890.2,670.5V670M900.4,670.5V670M902.1,670.5V669.4M903.8,670.5V669M905.5,670.5V668.7M907.2,670.5V668.8M908.9,670.5V668.9M910.6,670.5V669.5M966.9,670.5V669.4M968.6,670.5V666.9M970.3,670.5V665.3M972,670.5V665.5M973.7,670.5V665.6M975.4,670.5V665.3M977.1,670.5V663.7M978.8,670.5V662.4M980.5,670.5V657M982.2,670.5V655.6M983.9,670.5V655.7M985.6,670.5V656.8M987.4,670.5V659.3M989.1,670.5V661.3M990.8,670.5V663.1M992.5,670.5V664.8M994.2,670.5V666.2M995.9,670.5V667.7M997.6,670.5V669.4M1004.4,670.5V670.2M1006.1,670.5V669.6M1007.8,670.5V669.4M1055.6,670.5V668.7M1057.3,670.5V666.6M1059,670.5V666.3M1060.7,670.5V666.3M1062.4,670.5V666.3M1064.1,670.5V666.7M1065.8,670.5V667M1067.5,670.5V667.3M1069.2,670.5V667.8M1070.9,670.5V668.1M1072.6,670.5V668.5M1074.3,670.5V669.9" stroke="#63cf63" stroke-opacity="0.8" stroke-width="0.9" fill="none"/>
<path d="M37.7,670.5V671.2M39.4,670.5V671.7M41.1,670.5V672.2M42.8,670.5V672.7M44.5,670.5V673.1M46.2,670.5V673.4M47.9,670.5V673.7M49.6,670.5V673.9M51.3,670.5V674.1M53,670.5V674.2M54.7,670.5V674.3M56.4,670.5V673.9M58.1,670.5V673.5M59.8,670.5V673.2M61.5,670.5V673M63.2,670.5V672.7M64.9,670.5V672.6M66.7,670.5V672.5M68.4,670.5V672.3M70.1,670.5V672.3M71.8,670.5V672.3M73.5,670.5V672.2M75.2,670.5V672.2M76.9,670.5V672.2M78.6,670.5V672.2M80.3,670.5V672.2M82,670.5V672M83.7,670.5V671.9M85.4,670.5V671.8M87.1,670.5V671.7M88.8,670.5V671.6M90.5,670.5V671.5M92.2,670.5V671.4M93.9,670.5V671.2M95.6,670.5V671.1M97.3,670.5V671M99,670.5V671M109.3,670.5V671.1M111,670.5V671.9M112.7,670.5V671.8M114.4,670.5V671.6M116.1,670.5V671.5M117.8,670.5V671.4M119.5,670.5V671.3M121.2,670.5V671.3M122.9,670.5V671.4M124.6,670.5V671.4M126.3,670.5V671.4M128,670.5V671.5M129.7,670.5V671.5M131.4,670.5V671.2M133.1,670.5V671M134.9,670.5V670.8M182.6,670.5V671M184.3,670.5V672.3M186,670.5V673.3M187.7,670.5V674M189.4,670.5V673.4M191.1,670.5V672.9M192.8,670.5V672.6M194.5,670.5V672M196.2,670.5V671M226.9,670.5V671.3M228.6,670.5V673.7M230.3,670.5V675.4M232,670.5V676.2M233.7,670.5V676.7M235.4,670.5V677.1M237.2,670.5V677M238.9,670.5V677M240.6,670.5V676.7M242.3,670.5V675.9M244,670.5V675.3M245.7,670.5V674.8M247.4,670.5V674.4M249.1,670.5V675M250.8,670.5V675.5M252.5,670.5V676M254.2,670.5V675.2M255.9,670.5V674.5M257.6,670.5V674M259.3,670.5V673.6M261,670.5V673.6M262.7,670.5V673.8M264.4,670.5V674M266.1,670.5V674.1M267.8,670.5V674.1M269.5,670.5V673.2M288.3,670.5V672.6M290,670.5V672.8M291.7,670.5V672.1M293.4,670.5V671.5M295.1,670.5V673.2M296.8,670.5V675.7M298.5,670.5V679M300.2,670.5V681.9M301.9,670.5V681.3M303.6,670.5V680.9M305.4,670.5V680.2M307.1,670.5V678.2M308.8,670.5V676.7M310.5,670.5V675.4M312.2,670.5V674.5M313.9,670.5V674M315.6,670.5V673.7M317.3,670.5V673.5M319,670.5V675.2M320.7,670.5V676.8M322.4,670.5V678.1M324.1,670.5V679.6M325.8,670.5V680.8M327.5,670.5V679.3M329.2,670.5V677.8M330.9,670.5V676.6M332.6,670.5V674.3M334.3,670.5V672.5M336,670.5V671M337.7,670.5V670.9M339.5,670.5V670.8M346.3,670.5V670.8M348,670.5V670.9M349.7,670.5V670.9M351.4,670.5V671.8M353.1,670.5V672.6M354.8,670.5V673.3M356.5,670.5V674.3M358.2,670.5V675.1M359.9,670.5V676.2M361.6,670.5V677.5M363.3,670.5V676.5M365,670.5V673.5M366.7,670.5V671.3M395.7,670.5V671.3M397.4,670.5V671.1M404.2,670.5V671M405.9,670.5V671.5M407.7,670.5V671.9M409.4,670.5V672.7M411.1,670.5V673.4M412.8,670.5V673.8M414.5,670.5V673.6M416.2,670.5V673.4M417.9,670.5V673.4M419.6,670.5V674.1M421.3,670.5V674.7M423,670.5V676M424.7,670.5V677M426.4,670.5V677.4M428.1,670.5V677.6M429.8,670.5V676.5M431.5,670.5V674M433.2,670.5V672.3M434.9,670.5V671.1M499.7,670.5V672.1M501.4,670.5V673.4M503.1,670.5V674.6M504.8,670.5V675.4M506.5,670.5V675.8M508.2,670.5V676M510,670.5V676.2M511.7,670.5V675.9M513.4,670.5V675.7M515.1,670.5V675.5M516.8,670.5V674.8M518.5,670.5V674.2M520.2,670.5V673.7M521.9,670.5V673.4M523.6,670.5V672.8M525.3,670.5V672.2M527,670.5V671.8M528.7,670.5V671.4M530.4,670.5V671.3M532.1,670.5V671.7M533.8,670.5V672.1M535.5,670.5V672.7M537.2,670.5V673.8M538.9,670.5V674.8M540.6,670.5V674.2M542.3,670.5V673.7M544.1,670.5V673.3M545.8,670.5V671.1M557.7,670.5V672.1M559.4,670.5V672.7M561.1,670.5V673M562.8,670.5V672.2M564.5,670.5V671.5M566.2,670.5V670.9M612.3,670.5V671.7M614,670.5V673.8M615.7,670.5V674.9M617.4,670.5V675.7M619.1,670.5V676.3M620.8,670.5V675.5M622.5,670.5V674.8M624.2,670.5V674.3M625.9,670.5V673.4M627.6,670.5V672.1M629.3,670.5V671.1M641.2,670.5V671M642.9,670.5V671.1M644.6,670.5V671.1M646.4,670.5V671.4M648.1,670.5V672.7M649.8,670.5V673.7M651.5,670.5V674.4M653.2,670.5V674.6M654.9,670.5V674.7M656.6,670.5V673.5M658.3,670.5V671.8M687.3,670.5V671M689,670.5V673.4M690.7,670.5V673.9M692.4,670.5V674.4M694.1,670.5V674.6M695.8,670.5V673.8M697.5,670.5V673.1M699.2,670.5V672.5M700.9,670.5V671.3M724.8,670.5V670.9M726.5,670.5V671.4M728.2,670.5V671.7M729.9,670.5V671.9M731.6,670.5V672.1M733.3,670.5V672.3M735,670.5V672.5M736.7,670.5V672.7M738.4,670.5V672.9M740.1,670.5V673.1M741.8,670.5V673.3M743.5,670.5V672.9M745.2,670.5V672.2M746.9,670.5V671.7M782.8,670.5V670.9M784.5,670.5V671.4M786.2,670.5V671.7M787.9,670.5V672M789.6,670.5V672.4M791.3,670.5V673.1M793,670.5V673.6M794.7,670.5V674.1M796.4,670.5V673.7M798.1,670.5V673.2M799.8,670.5V672.8M801.5,670.5V672.6M803.2,670.5V672.2M804.9,670.5V671.7M806.6,670.5V671.3M808.3,670.5V670.9M811.7,670.5V670.9M813.4,670.5V671.1M815.1,670.5V671.3M816.9,670.5V671.4M818.6,670.5V671.5M820.3,670.5V671.7M822,670.5V671.8M823.7,670.5V671.8M825.4,670.5V672.3M827.1,670.5V672.8M828.8,670.5V673.2M830.5,670.5V673.3M832.2,670.5V673.3M833.9,670.5V673.4M835.6,670.5V672.3M837.3,670.5V671.3M856.1,670.5V671M857.8,670.5V670.8M914,670.5V671.8M915.7,670.5V672.5M917.4,670.5V672.7M919.2,670.5V672.8M920.9,670.5V672.9M922.6,670.5V673M924.3,670.5V673.1M926,670.5V673.1M927.7,670.5V673.2M929.4,670.5V673M931.1,670.5V672.8M932.8,670.5V672.7M934.5,670.5V672.6M936.2,670.5V672.4M937.9,670.5V672.3M939.6,670.5V672.1M941.3,670.5V672M943,670.5V672.1M944.7,670.5V672.5M946.4,670.5V672.8M948.1,670.5V673.2M949.8,670.5V673.9M951.5,670.5V674.5M953.3,670.5V674.8M955,670.5V674.8M956.7,670.5V674.8M958.4,670.5V674.4M960.1,670.5V673.6M961.8,670.5V673M963.5,670.5V672.1M965.2,670.5V671.2M1002.7,670.5V670.8M1011.2,670.5V670.9M1012.9,670.5V671.5M1014.6,670.5V672.1M1016.3,670.5V672.7M1018,670.5V673M1019.7,670.5V673.2M1021.5,670.5V673.3M1023.2,670.5V673.4M1024.9,670.5V673.4M1026.6,670.5V673.4M1028.3,670.5V673.1M1030,670.5V672.3M1031.7,670.5V671.6M1033.4,670.5V671.1M1036.8,670.5V671.1M1038.5,670.5V671.4M1040.2,670.5V671.7M1041.9,670.5V672.3M1043.6,670.5V672.8M1045.3,670.5V673.1M1047,670.5V672.8M1048.7,670.5V672.6M1050.4,670.5V672.3M1052.1,670.5V671.6M1053.8,670.5V671.1M1076,670.5V671.1M1077.7,670.5V672M1079.4,670.5V673M1081.1,670.5V673.8M1082.8,670.5V674.5M1084.5,670.5V675.5M1086.2,670.5V676.5M1087.9,670.5V678.5M1089.7,670.5V680.1M1091.4,670.5V680.1M1093.1,670.5V679.8M1094.8,670.5V678.8M1096.5,670.5V677.2M1098.2,670.5V675.8M1099.9,670.5V674.8M1101.6,670.5V674.1M1103.3,670.5V673.5M1105,670.5V673.1" stroke="#e27f7f" stroke-opacity="0.8" stroke-width="0.9" fill="none"/>
<path d="M0.2,662L1.9,662.2 3.6,662.5 5.3,662.7 7,662.9 7,662.9 5.3,662.9 3.6,662.9 1.9,663 0.2,663.2ZM7,662.9L8.7,662.7 10.4,662.2 12.1,661.8 13.8,661.3 15.5,660.6 17.2,659.2 18.9,657.7 20.6,656.3 22.3,654.9 24,653.9 25.7,653 27.4,652 29.1,652.5 30.8,653 32.6,653.5 34.3,654.1 36,654.7 36,654.5 34.3,654.4 32.6,654.5 30.8,654.8 29.1,655.2 27.4,655.9 25.7,656.9 24,657.8 22.3,658.8 20.6,659.8 18.9,660.7 17.2,661.4 15.5,661.9 13.8,662.3 12.1,662.5 10.4,662.7 8.7,662.8 7,662.9ZM100.8,669L102.5,668.3 104.2,667.7 105.9,667 107.6,667.9 109.3,668.8 109.3,668.3 107.6,668.2 105.9,668.2 104.2,668.5 102.5,668.8 100.8,668.9ZM138.3,671.1L140,671 141.7,669.7 143.4,668.3 145.1,666.8 146.8,663.2 148.5,659.6 150.2,657.6 151.9,656.4 153.6,656.2 155.3,656.4 157,656.7 158.7,657.2 160.4,657.8 162.1,658.4 163.8,658.1 165.5,657.7 167.2,657.2 169,656.8 170.7,656.3 172.4,655.9 174.1,655.6 175.8,655.2 177.5,654.8 179.2,655.3 180.9,655.9 182.6,656.6 182.6,656.1 180.9,656 179.2,656 177.5,656.2 175.8,656.6 174.1,657 172.4,657.3 170.7,657.6 169,658 167.2,658.3 165.5,658.5 163.8,658.7 162.1,658.9 160.4,659 158.7,659.3 157,659.9 155.3,660.7 153.6,661.7 151.9,663.1 150.2,664.8 148.5,666.6 146.8,668.3 145.1,669.6 143.4,670.3 141.7,670.8 140,671 138.3,671ZM196.2,660.1L197.9,659.4 199.6,658.6 201.3,657.8 203.1,657 204.8,656.1 206.5,653.1 208.2,649.7 209.9,646.3 211.6,642.8 213.3,639.4 215,636 216.7,634.3 218.4,632.6 220.1,631.1 221.8,632.4 223.5,633.6 225.2,635.1 226.9,637.6 226.9,637 225.2,636.8 223.5,637.3 221.8,638.2 220.1,639.6 218.4,641.8 216.7,644.1 215,646.5 213.3,649.1 211.6,651.6 209.9,653.8 208.2,655.6 206.5,657.1 204.8,658.2 203.1,658.7 201.3,659.1 199.6,659.4 197.9,659.6 196.2,659.7ZM271.3,660L273,657.2 274.7,652.3 276.4,648.2 278.1,646.9 279.8,645.7 281.5,646.4 283.2,647.4 284.9,648.4 286.6,650.3 286.6,650.1 284.9,650.1 283.2,650.5 281.5,651.3 279.8,652.5 278.1,654.2 276.4,656 274.7,658 273,659.4 271.3,659.9ZM366.7,691.7L368.4,690.4 370.1,689.1 371.8,687.7 373.6,686 375.3,684.4 377,682.8 378.7,681.7 380.4,680.8 382.1,680 383.8,678.9 385.5,677.8 387.2,676.7 388.9,677.2 390.6,678.1 392.3,678.9 394,679.6 394,679.6 392.3,679.6 390.6,679.7 388.9,680.2 387.2,680.9 385.5,681.9 383.8,683 382.1,684 380.4,685 378.7,686.1 377,687.2 375.3,688.2 373.6,689.2 371.8,690 370.1,690.6 368.4,690.9 366.7,691.1ZM400.8,679.9L402.5,679.8 404.2,680.4 404.2,680 402.5,679.9 400.8,679.9ZM434.9,693.5L436.6,692.7 438.3,691.8 440,691 441.8,690.1 443.5,689.4 445.2,688.9 446.9,688.3 448.6,687.7 450.3,687.2 452,686.9 453.7,686.6 455.4,686.4 457.1,686.1 458.8,685.6 460.5,685 462.2,684.4 463.9,683.9 465.6,683 467.3,681.8 469,680.5 470.7,679 472.4,677.3 474.1,675.6 475.9,674.1 477.6,672.8 479.3,671.6 481,670.3 482.7,669 484.4,667.7 486.1,666.7 487.8,665.9 489.5,665 491.2,664.8 492.9,664.8 494.6,664.8 496.3,665 498,666.6 499.7,668.2 499.7,667 498,666.7 496.3,666.7 494.6,667.1 492.9,667.7 491.2,668.4 489.5,669.4 487.8,670.5 486.1,671.6 484.4,672.8 482.7,674.1 481,675.4 479.3,676.7 477.6,677.9 475.9,679.2 474.1,680.5 472.4,681.7 470.7,682.8 469,683.7 467.3,684.6 465.6,685.3 463.9,685.8 462.2,686.3 460.5,686.8 458.8,687.2 457.1,687.6 455.4,688 453.7,688.4 452,688.9 450.3,689.3 448.6,689.9 446.9,690.4 445.2,690.9 443.5,691.4 441.8,692 440,692.4 438.3,692.8 436.6,693 434.9,693.1ZM545.8,685.1L547.5,683.5 549.2,680.5 550.9,679.3 552.6,680 554.3,680.7 556,682.2 556,682 554.3,681.9 552.6,682.2 550.9,682.8 549.2,683.6 547.5,684.4 545.8,684.6ZM566.2,684.2L567.9,683.5 569.6,682.8 571.3,682.2 573,681.7 574.7,681.2 576.4,680.8 578.2,680.1 579.9,679 581.6,677.9 583.3,676.9 585,676 586.7,675.2 588.4,674.1 590.1,672.8 591.8,671.5 593.5,669.6 595.2,667.1 596.9,665.1 598.6,663.5 600.3,662.1 602,661.2 603.7,660.4 605.4,659.8 607.1,659.8 608.8,659.8 610.5,661.2 612.3,663.6 612.3,662.6 610.5,662.4 608.8,662.7 607.1,663.5 605.4,664.4 603.7,665.6 602,666.8 600.3,668.2 598.6,669.8 596.9,671.3 595.2,672.9 593.5,674.3 591.8,675.5 590.1,676.5 588.4,677.4 586.7,678.3 585,679.1 583.3,679.8 581.6,680.6 579.9,681.2 578.2,681.8 576.4,682.3 574.7,682.6 573,683 571.3,683.3 569.6,683.6 567.9,683.8 566.2,683.8ZM629.3,670.5L631,669.7 632.7,668.9 634.4,668 636.1,667.3 637.8,668 639.5,668.7 641.2,669.3 641.2,668.9 639.5,668.8 637.8,668.8 636.1,669 634.4,669.4 632.7,669.7 631,670 629.3,670ZM658.3,674.7L660,673.6 661.7,673.1 663.4,673.2 665.1,673.3 666.8,673.4 666.8,673.4 665.1,673.4 663.4,673.5 661.7,673.5 660,673.7 658.3,673.7ZM666.8,673.4L668.5,673.2 670.2,672.8 671.9,672.4 673.6,670.6 675.3,668.2 677,666.7 678.7,665.9 680.5,665 682.2,664.5 683.9,664.2 685.6,664.8 687.3,667.3 687.3,666.8 685.6,666.7 683.9,667.2 682.2,668 680.5,668.8 678.7,669.8 677,670.7 675.3,671.7 673.6,672.6 671.9,673.1 670.2,673.3 668.5,673.4 666.8,673.4ZM700.9,672L702.6,671.2 704.3,670.5 706,670.2 707.7,670 709.4,669.8 711.1,669.9 712.8,670.1 714.6,670.3 716.3,670.4 716.3,670.4 714.6,670.4 712.8,670.4 711.1,670.5 709.4,670.6 707.7,670.8 706,671 704.3,671.2 702.6,671.4 700.9,671.4ZM716.3,670.4L718,669.7 719.7,669 721.4,668.6 723.1,669.3 724.8,670 724.8,669.7 723.1,669.7 721.4,669.7 719.7,670 718,670.3 716.3,670.4ZM748.7,674.7L750.4,673.6 752.1,672.5 753.8,671.8 755.5,671.3 757.2,670.7 758.9,670.1 760.6,669.6 762.3,669 764,668.4 765.7,667.8 767.4,667.3 769.1,666.7 770.8,666.1 772.5,665.5 774.2,665.2 775.9,665 777.6,664.8 779.3,665.4 781,666 782.8,666.6 782.8,666.2 781,666.2 779.3,666.2 777.6,666.4 775.9,666.8 774.2,667.3 772.5,667.8 770.8,668.3 769.1,668.9 767.4,669.5 765.7,670 764,670.6 762.3,671.1 760.6,671.6 758.9,672.1 757.2,672.6 755.5,673.1 753.8,673.6 752.1,674 750.4,674.4 748.7,674.6ZM839,677.2L840.7,676.9 842.4,676.5 844.1,676.2 845.8,676.1 847.5,676.2 849.2,676.3 851,676.4 852.7,676.5 852.7,676.5 851,676.5 849.2,676.5 847.5,676.6 845.8,676.7 844.1,676.9 842.4,677 840.7,677.1 839,677.2ZM857.8,677L859.5,675.4 861.2,673.9 862.9,672.8 864.6,671.8 866.3,671.4 868,671.3 869.7,671.2 871.4,671.1 873.1,670.9 874.8,670.6 876.5,670.3 878.2,670 879.9,669.8 881.6,669.6 883.3,669.4 885.1,669.2 886.8,669.1 888.5,669.1 890.2,669.3 891.9,669.5 893.6,669.7 893.6,669.7 891.9,669.7 890.2,669.7 888.5,669.8 886.8,670 885.1,670.2 883.3,670.5 881.6,670.7 879.9,671 878.2,671.3 876.5,671.6 874.8,671.9 873.1,672.3 871.4,672.6 869.7,673 868,673.4 866.3,674 864.6,674.6 862.9,675.3 861.2,675.9 859.5,676.5 857.8,676.7ZM893.6,669.7L895.3,669.6 897,669.5 898.7,669.4 900.4,669.1 902.1,668.4 903.8,667.7 905.5,667.2 907.2,666.9 908.9,666.7 910.6,666.9 912.3,668 912.3,667.8 910.6,667.7 908.9,667.9 907.2,668.3 905.5,668.6 903.8,669 902.1,669.3 900.4,669.5 898.7,669.6 897,669.6 895.3,669.7 893.6,669.7ZM965.2,683.8L966.9,682.1 968.6,679.4 970.3,677.1 972,676.2 973.7,675.4 975.4,674.1 977.1,671.4 978.8,668.8 980.5,661.8 982.2,657.7 983.9,654.8 985.6,652.9 987.4,652.6 989.1,652.4 990.8,652.4 992.5,652.6 994.2,652.9 995.9,653.5 997.6,654.6 999.3,655.5 999.3,655.5 997.6,655.5 995.9,655.8 994.2,656.3 992.5,657.2 990.8,658.3 989.1,659.8 987.4,661.6 985.6,663.9 983.9,666.6 982.2,669.6 980.5,672.6 978.8,675.3 977.1,676.9 975.4,678.2 973.7,679.3 972,680.3 970.3,681.3 968.6,682.3 966.9,683 965.2,683.2ZM1002.7,655.9L1004.4,655.3 1006.1,654.7 1007.8,654.4 1009.5,655 1011.2,655.6 1011.2,655.2 1009.5,655.2 1007.8,655.2 1006.1,655.4 1004.4,655.6 1002.7,655.7ZM1053.8,664.8L1055.6,662.5 1057.3,660.1 1059,659 1060.7,658.2 1062.4,657.3 1064.1,656.9 1065.8,656.4 1067.5,656 1069.2,655.8 1070.9,655.7 1072.6,655.6 1074.3,656.6 1076,657.6 1076,657.2 1074.3,657 1072.6,657.2 1070.9,657.6 1069.2,658 1067.5,658.6 1065.8,659.2 1064.1,659.9 1062.4,660.7 1060.7,661.5 1059,662.4 1057.3,663.2 1055.6,664 1053.8,664.3Z" fill="#6fe06f" stroke="none"/>
<path d="M5.3,662.7L7,662.9 8.7,662.7 8.7,662.8 7,662.9 5.3,662.9ZM34.3,654.1L36,654.7 37.7,655.2 39.4,655.8 41.1,656.5 42.8,657.4 44.5,658.2 46.2,659.1 47.9,659.9 49.6,660.8 51.3,661.7 53,662.5 54.7,663.4 56.4,663.7 58.1,664 59.8,664.3 61.5,664.6 63.2,664.9 64.9,665.2 66.7,665.4 68.4,665.7 70.1,666 71.8,666.4 73.5,666.7 75.2,667 76.9,667.4 78.6,667.7 80.3,668 82,668.2 83.7,668.4 85.4,668.5 87.1,668.7 88.8,668.9 90.5,669 92.2,669.1 93.9,669.1 95.6,669.1 97.3,669.2 99,669.2 100.8,669 102.5,668.3 102.5,668.8 100.8,668.9 99,668.8 97.3,668.7 95.6,668.6 93.9,668.5 92.2,668.4 90.5,668.2 88.8,668 87.1,667.8 85.4,667.5 83.7,667.3 82,667 80.3,666.7 78.6,666.3 76.9,666 75.2,665.6 73.5,665.3 71.8,665 70.1,664.6 68.4,664.3 66.7,663.9 64.9,663.5 63.2,663.1 61.5,662.6 59.8,662.1 58.1,661.6 56.4,661 54.7,660.3 53,659.5 51.3,658.8 49.6,658.1 47.9,657.4 46.2,656.7 44.5,656.2 42.8,655.6 41.1,655.2 39.4,654.9 37.7,654.6 36,654.5 34.3,654.4ZM107.6,667.9L109.3,668.8 111,669.7 112.7,669.8 114.4,669.9 116.1,670 117.8,670.1 119.5,670.2 121.2,670.4 122.9,670.6 124.6,670.8 126.3,671 128,671.3 129.7,671.5 131.4,671.4 133.1,671.3 134.9,671.3 136.6,671.2 138.3,671.1 140,671 140,671 138.3,671 136.6,671 134.9,671 133.1,670.9 131.4,670.8 129.7,670.7 128,670.5 126.3,670.3 124.6,670.1 122.9,669.9 121.2,669.7 119.5,669.6 117.8,669.4 116.1,669.3 114.4,669.1 112.7,668.8 111,668.6 109.3,668.3 107.6,668.2ZM180.9,655.9L182.6,656.6 184.3,657.9 186,659.3 187.7,660.5 189.4,660.6 191.1,660.8 192.8,660.9 194.5,660.8 196.2,660.1 197.9,659.4 197.9,659.6 196.2,659.7 194.5,659.5 192.8,659.2 191.1,658.8 189.4,658.3 187.7,657.8 186,657.1 184.3,656.5 182.6,656.1 180.9,656ZM225.2,635.1L226.9,637.6 228.6,640.2 230.3,642.6 232,644.3 233.7,646 235.4,647.6 237.2,648.9 238.9,650.1 240.6,651.2 242.3,651.6 244,652.1 245.7,652.5 247.4,653 249.1,654.4 250.8,655.8 252.5,657.2 254.2,657.5 255.9,657.8 257.6,658.1 259.3,658.4 261,659 262.7,659.9 264.4,660.7 266.1,661.5 267.8,662.2 269.5,662.1 271.3,660 273,657.2 273,659.4 271.3,659.9 269.5,659.9 267.8,659.3 266.1,658.6 264.4,657.9 262.7,657.2 261,656.5 259.3,655.9 257.6,655.3 255.9,654.6 254.2,653.8 252.5,652.9 250.8,651.8 249.1,650.8 247.4,649.9 245.7,649.1 244,648.2 242.3,647.3 240.6,646.2 238.9,644.9 237.2,643.6 235.4,642.3 233.7,641 232,639.8 230.3,638.6 228.6,637.6 226.9,637 225.2,636.8ZM284.9,648.4L286.6,650.3 288.3,652.2 290,652.8 291.7,652.6 293.4,652.3 295.1,654.3 296.8,657.3 298.5,661.6 300.2,666.2 301.9,667.9 303.6,669.6 305.4,671 307.1,671 308.8,671 310.5,671 312.2,671 313.9,671.3 315.6,671.8 317.3,672.2 319,674.5 320.7,677 322.4,679.6 324.1,682.6 325.8,685.7 327.5,686.2 329.2,686.5 330.9,686.7 332.6,685.7 334.3,684.6 336,683.5 337.7,683.5 339.5,683.5 341.2,683.5 342.9,683.5 344.6,683.6 346.3,683.8 348,683.9 349.7,684 351.4,684.9 353.1,686 354.8,687.1 356.5,688.7 358.2,690.3 359.9,692.3 361.6,694.7 363.3,695.1 365,693.3 366.7,691.7 368.4,690.4 368.4,690.9 366.7,691.1 365,690.9 363.3,690.3 361.6,689.1 359.9,687.7 358.2,686.6 356.5,685.6 354.8,684.9 353.1,684.3 351.4,683.9 349.7,683.6 348,683.6 346.3,683.5 344.6,683.4 342.9,683.3 341.2,683.3 339.5,683.3 337.7,683.2 336,683.1 334.3,683 332.6,682.6 330.9,681.9 329.2,680.6 327.5,679.2 325.8,677.4 324.1,675.3 322.4,673.5 320.7,672 319,670.7 317.3,669.8 315.6,669.2 313.9,668.5 312.2,667.8 310.5,667 308.8,666.1 307.1,664.8 305.4,663.3 303.6,661.3 301.9,659.3 300.2,657.1 298.5,654.8 296.8,653.1 295.1,652.1 293.4,651.5 291.7,651.3 290,651 288.3,650.5 286.6,650.1 284.9,650.1ZM392.3,678.9L394,679.6 395.7,680.4 397.4,680.3 399.1,680.1 400.8,679.9 402.5,679.8 402.5,679.9 400.8,679.9 399.1,679.9 397.4,679.9 395.7,679.7 394,679.6 392.3,679.6ZM402.5,679.8L404.2,680.4 405.9,681 407.7,681.6 409.4,682.7 411.1,683.8 412.8,684.8 414.5,685.2 416.2,685.7 417.9,686.3 419.6,687.5 421.3,688.9 423,691 424.7,693.1 426.4,694.8 428.1,696.4 429.8,696.7 431.5,695.4 433.2,694.4 434.9,693.5 436.6,692.7 436.6,693 434.9,693.1 433.2,693 431.5,692.6 429.8,691.9 428.1,690.7 426.4,689.3 424.7,687.9 423,686.6 421.3,685.5 419.6,684.6 417.9,683.9 416.2,683.4 414.5,682.8 412.8,682.2 411.1,681.5 409.4,680.9 407.7,680.5 405.9,680.2 404.2,680 402.5,679.9ZM498,666.6L499.7,668.2 501.4,669.9 503.1,671.6 504.8,673.3 506.5,674.7 508.2,675.9 510,677.2 511.7,678.1 513.4,678.9 515.1,679.8 516.8,680 518.5,680.3 520.2,680.6 521.9,680.9 523.6,680.9 525.3,680.8 527,680.7 528.7,680.6 530.4,680.6 532.1,681.2 533.8,681.8 535.5,682.7 537.2,684.3 538.9,685.9 540.6,686.2 542.3,686.5 544.1,686.7 545.8,685.1 547.5,683.5 547.5,684.4 545.8,684.6 544.1,684.5 542.3,683.9 540.6,683.3 538.9,682.5 537.2,681.7 535.5,681 533.8,680.6 532.1,680.3 530.4,680 528.7,679.9 527,679.7 525.3,679.4 523.6,679.1 521.9,678.6 520.2,678 518.5,677.4 516.8,676.6 515.1,675.8 513.4,674.8 511.7,673.8 510,672.7 508.2,671.5 506.5,670.4 504.8,669.4 503.1,668.4 501.4,667.6 499.7,667 498,666.7ZM554.3,680.7L556,682.2 557.7,683.6 559.4,684.4 561.1,685.2 562.8,684.9 564.5,684.5 566.2,684.2 567.9,683.5 567.9,683.8 566.2,683.8 564.5,683.8 562.8,683.6 561.1,683.2 559.4,682.7 557.7,682.3 556,682 554.3,681.9ZM610.5,661.2L612.3,663.6 614,665.9 615.7,667.7 617.4,669.4 619.1,671 620.8,671.4 622.5,671.7 624.2,672.1 625.9,671.9 627.6,671.2 629.3,670.5 631,669.7 631,670 629.3,670 627.6,669.9 625.9,669.6 624.2,669 622.5,668.2 620.8,667.4 619.1,666.4 617.4,665.2 615.7,664.2 614,663.3 612.3,662.6 610.5,662.4ZM639.5,668.7L641.2,669.3 642.9,669.4 644.6,669.6 646.4,670.1 648.1,671.5 649.8,673 651.5,674.3 653.2,675.2 654.9,676.2 656.6,675.8 658.3,674.7 660,673.6 660,673.7 658.3,673.7 656.6,673.4 654.9,672.8 653.2,672 651.5,671.2 649.8,670.4 648.1,669.7 646.4,669.3 644.6,669.1 642.9,669 641.2,668.9 639.5,668.8ZM665.1,673.3L666.8,673.4 668.5,673.2 668.5,673.4 666.8,673.4 665.1,673.4ZM685.6,664.8L687.3,667.3 689,669.7 690.7,670.8 692.4,672 694.1,673 695.8,673 697.5,673 699.2,672.9 700.9,672 702.6,671.2 702.6,671.4 700.9,671.4 699.2,671.3 697.5,670.9 695.8,670.4 694.1,669.7 692.4,668.9 690.7,668.1 689,667.4 687.3,666.8 685.6,666.7ZM714.6,670.3L716.3,670.4 718,669.7 718,670.3 716.3,670.4 714.6,670.4ZM723.1,669.3L724.8,670 726.5,670.6 728.2,671.1 729.9,671.5 731.6,672 733.3,672.5 735,673.1 736.7,673.7 738.4,674.4 740.1,675.1 741.8,675.7 743.5,675.9 745.2,675.7 746.9,675.6 748.7,674.7 750.4,673.6 750.4,674.4 748.7,674.6 746.9,674.6 745.2,674.3 743.5,674 741.8,673.5 740.1,673 738.4,672.4 736.7,672 735,671.5 733.3,671.1 731.6,670.7 729.9,670.4 728.2,670.1 726.5,669.9 724.8,669.7 723.1,669.7ZM781,666L782.8,666.6 784.5,667.1 786.2,667.6 787.9,668.2 789.6,668.9 791.3,669.9 793,671 794.7,672.1 796.4,672.4 798.1,672.6 799.8,672.7 801.5,672.9 803.2,672.9 804.9,672.8 806.6,672.6 808.3,672.4 810,672.3 811.7,672.5 813.4,672.8 815.1,673.1 816.9,673.4 818.6,673.7 820.3,674 822,674.4 823.7,674.7 825.4,675.4 827.1,676.3 828.8,677.1 830.5,677.8 832.2,678.4 833.9,679 835.6,678.4 837.3,677.8 839,677.2 840.7,676.9 840.7,677.1 839,677.2 837.3,677.2 835.6,677 833.9,676.7 832.2,676.1 830.5,675.5 828.8,675 827.1,674.4 825.4,674 823.7,673.6 822,673.4 820.3,673.1 818.6,672.9 816.9,672.7 815.1,672.5 813.4,672.3 811.7,672.2 810,672.1 808.3,672.1 806.6,672 804.9,671.8 803.2,671.6 801.5,671.3 799.8,670.9 798.1,670.4 796.4,669.8 794.7,669.2 793,668.5 791.3,667.9 789.6,667.3 787.9,667 786.2,666.7 784.5,666.4 782.8,666.2 781,666.2ZM851,676.4L852.7,676.5 854.4,676.8 856.1,677 857.8,677 859.5,675.4 859.5,676.5 857.8,676.7 856.1,676.7 854.4,676.6 852.7,676.5 851,676.5ZM891.9,669.5L893.6,669.7 895.3,669.6 895.3,669.7 893.6,669.7 891.9,669.7ZM910.6,666.9L912.3,668 914,669.1 915.7,670 917.4,670.6 919.2,671.2 920.9,671.8 922.6,672.4 924.3,672.9 926,673.5 927.7,674 929.4,674.4 931.1,674.7 932.8,675.1 934.5,675.4 936.2,675.7 937.9,675.9 939.6,676.1 941.3,676.3 943,676.7 944.7,677.4 946.4,678.1 948.1,679 949.8,680.3 951.5,681.5 953.3,682.6 955,683.5 956.7,684.3 958.4,684.8 960.1,684.8 961.8,684.8 963.5,684.4 965.2,683.8 966.9,682.1 966.9,683 965.2,683.2 963.5,683.1 961.8,682.8 960.1,682.3 958.4,681.7 956.7,680.9 955,680 953.3,679.2 951.5,678.3 949.8,677.5 948.1,676.8 946.4,676.3 944.7,675.8 943,675.4 941.3,675.1 939.6,674.8 937.9,674.5 936.2,674.1 934.5,673.7 932.8,673.3 931.1,672.9 929.4,672.4 927.7,671.9 926,671.4 924.3,670.9 922.6,670.3 920.9,669.8 919.2,669.3 917.4,668.9 915.7,668.4 914,668.1 912.3,667.8 910.6,667.7ZM997.6,654.6L999.3,655.5 1001,655.8 1002.7,655.9 1004.4,655.3 1004.4,655.6 1002.7,655.7 1001,655.6 999.3,655.5 997.6,655.5ZM1009.5,655L1011.2,655.6 1012.9,656.2 1014.6,657.1 1016.3,657.9 1018,658.7 1019.7,659.4 1021.5,660.1 1023.2,660.7 1024.9,661.3 1026.6,661.9 1028.3,662.1 1030,661.8 1031.7,661.6 1033.4,661.3 1035.1,661 1036.8,661.5 1038.5,661.9 1040.2,662.4 1041.9,663.2 1043.6,664.1 1045.3,664.8 1047,665.1 1048.7,665.3 1050.4,665.4 1052.1,665.1 1053.8,664.8 1055.6,662.5 1055.6,664 1053.8,664.3 1052.1,664.2 1050.4,664 1048.7,663.6 1047,663.2 1045.3,662.7 1043.6,662.2 1041.9,661.7 1040.2,661.4 1038.5,661.1 1036.8,661 1035.1,660.8 1033.4,660.8 1031.7,660.7 1030,660.4 1028.3,660.1 1026.6,659.6 1024.9,659 1023.2,658.4 1021.5,657.8 1019.7,657.2 1018,656.7 1016.3,656.2 1014.6,655.8 1012.9,655.4 1011.2,655.2 1009.5,655.2ZM1074.3,656.6L1076,657.6 1077.7,658.7 1079.4,659.9 1081.1,661.2 1082.8,662.6 1084.5,664.4 1086.2,666.5 1087.9,669.7 1089.7,672.9 1091.4,674.8 1093.1,676.4 1094.8,677.2 1096.5,677.2 1098.2,677.2 1099.9,677.2 1101.6,677.4 1103.3,677.6 1105,677.8 1105,675.7 1103.3,675.2 1101.6,674.6 1099.9,673.8 1098.2,673 1096.5,671.9 1094.8,670.6 1093.1,668.9 1091.4,667.1 1089.7,665.2 1087.9,663.2 1086.2,661.6 1084.5,660.4 1082.8,659.4 1081.1,658.6 1079.4,658 1077.7,657.5 1076,657.2 1074.3,657Z" fill="#e58a8a" stroke="none"/>
<path d="M0.2,663.2L1.9,663 3.6,662.9 5.3,662.9 7,662.9 8.7,662.8 10.4,662.7 12.1,662.5 13.8,662.3 15.5,661.9 17.2,661.4 18.9,660.7 20.6,659.8 22.3,658.8 24,657.8 25.7,656.9 27.4,655.9 29.1,655.2 30.8,654.8 32.6,654.5 34.3,654.4 36,654.5 37.7,654.6 39.4,654.9 41.1,655.2 42.8,655.6 44.5,656.2 46.2,656.7 47.9,657.4 49.6,658.1 51.3,658.8 53,659.5 54.7,660.3 56.4,661 58.1,661.6 59.8,662.1 61.5,662.6 63.2,663.1 64.9,663.5 66.7,663.9 68.4,664.3 70.1,664.6 71.8,665 73.5,665.3 75.2,665.6 76.9,666 78.6,666.3 80.3,666.7 82,667 83.7,667.3 85.4,667.5 87.1,667.8 88.8,668 90.5,668.2 92.2,668.4 93.9,668.5 95.6,668.6 97.3,668.7 99,668.8 100.8,668.9 102.5,668.8 104.2,668.5 105.9,668.2 107.6,668.2 109.3,668.3 111,668.6 112.7,668.8 114.4,669.1 116.1,669.3 117.8,669.4 119.5,669.6 121.2,669.7 122.9,669.9 124.6,670.1 126.3,670.3 128,670.5 129.7,670.7 131.4,670.8 133.1,670.9 134.9,671 136.6,671 138.3,671 140,671 141.7,670.8 143.4,670.3 145.1,669.6 146.8,668.3 148.5,666.6 150.2,664.8 151.9,663.1 153.6,661.7 155.3,660.7 157,659.9 158.7,659.3 160.4,659 162.1,658.9 163.8,658.7 165.5,658.5 167.2,658.3 169,658 170.7,657.6 172.4,657.3 174.1,657 175.8,656.6 177.5,656.2 179.2,656 180.9,656 182.6,656.1 184.3,656.5 186,657.1 187.7,657.8 189.4,658.3 191.1,658.8 192.8,659.2 194.5,659.5 196.2,659.7 197.9,659.6 199.6,659.4 201.3,659.1 203.1,658.7 204.8,658.2 206.5,657.1 208.2,655.6 209.9,653.8 211.6,651.6 213.3,649.1 215,646.5 216.7,644.1 218.4,641.8 220.1,639.6 221.8,638.2 223.5,637.3 225.2,636.8 226.9,637 228.6,637.6 230.3,638.6 232,639.8 233.7,641 235.4,642.3 237.2,643.6 238.9,644.9 240.6,646.2 242.3,647.3 244,648.2 245.7,649.1 247.4,649.9 249.1,650.8 250.8,651.8 252.5,652.9 254.2,653.8 255.9,654.6 257.6,655.3 259.3,655.9 261,656.5 262.7,657.2 264.4,657.9 266.1,658.6 267.8,659.3 269.5,659.9 271.3,659.9 273,659.4 274.7,658 276.4,656 278.1,654.2 279.8,652.5 281.5,651.3 283.2,650.5 284.9,650.1 286.6,650.1 288.3,650.5 290,651 291.7,651.3 293.4,651.5 295.1,652.1 296.8,653.1 298.5,654.8 300.2,657.1 301.9,659.3 303.6,661.3 305.4,663.3 307.1,664.8 308.8,666.1 310.5,667 312.2,667.8 313.9,668.5 315.6,669.2 317.3,669.8 319,670.7 320.7,672 322.4,673.5 324.1,675.3 325.8,677.4 327.5,679.2 329.2,680.6 330.9,681.9 332.6,682.6 334.3,683 336,683.1 337.7,683.2 339.5,683.3 341.2,683.3 342.9,683.3 344.6,683.4 346.3,683.5 348,683.6 349.7,683.6 351.4,683.9 353.1,684.3 354.8,684.9 356.5,685.6 358.2,686.6 359.9,687.7 361.6,689.1 363.3,690.3 365,690.9 366.7,691.1 368.4,690.9 370.1,690.6 371.8,690 373.6,689.2 375.3,688.2 377,687.2 378.7,686.1 380.4,685 382.1,684 383.8,683 385.5,681.9 387.2,680.9 388.9,680.2 390.6,679.7 392.3,679.6 394,679.6 395.7,679.7 397.4,679.9 399.1,679.9 400.8,679.9 402.5,679.9 404.2,680 405.9,680.2 407.7,680.5 409.4,680.9 411.1,681.5 412.8,682.2 414.5,682.8 416.2,683.4 417.9,683.9 419.6,684.6 421.3,685.5 423,686.6 424.7,687.9 426.4,689.3 428.1,690.7 429.8,691.9 431.5,692.6 433.2,693 434.9,693.1 436.6,693 438.3,692.8 440,692.4 441.8,692 443.5,691.4 445.2,690.9 446.9,690.4 448.6,689.9 450.3,689.3 452,688.9 453.7,688.4 455.4,688 457.1,687.6 458.8,687.2 460.5,686.8 462.2,686.3 463.9,685.8 465.6,685.3 467.3,684.6 469,683.7 470.7,682.8 472.4,681.7 474.1,680.5 475.9,679.2 477.6,677.9 479.3,676.7 481,675.4 482.7,674.1 484.4,672.8 486.1,671.6 487.8,670.5 489.5,669.4 491.2,668.4 492.9,667.7 494.6,667.1 496.3,666.7 498,666.7 499.7,667 501.4,667.6 503.1,668.4 504.8,669.4 506.5,670.4 508.2,671.5 510,672.7 511.7,673.8 513.4,674.8 515.1,675.8 516.8,676.6 518.5,677.4 520.2,678 521.9,678.6 523.6,679.1 525.3,679.4 527,679.7 528.7,679.9 530.4,680 532.1,680.3 533.8,680.6 535.5,681 537.2,681.7 538.9,682.5 540.6,683.3 542.3,683.9 544.1,684.5 545.8,684.6 547.5,684.4 549.2,683.6 550.9,682.8 552.6,682.2 554.3,681.9 556,682 557.7,682.3 559.4,682.7 561.1,683.2 562.8,683.6 564.5,683.8 566.2,683.8 567.9,683.8 569.6,683.6 571.3,683.3 573,683 574.7,682.6 576.4,682.3 578.2,681.8 579.9,681.2 581.6,680.6 583.3,679.8 585,679.1 586.7,678.3 588.4,677.4 590.1,676.5 591.8,675.5 593.5,674.3 595.2,672.9 596.9,671.3 598.6,669.8 600.3,668.2 602,666.8 603.7,665.6 605.4,664.4 607.1,663.5 608.8,662.7 610.5,662.4 612.3,662.6 614,663.3 615.7,664.2 617.4,665.2 619.1,666.4 620.8,667.4 622.5,668.2 624.2,669 625.9,669.6 627.6,669.9 629.3,670 631,670 632.7,669.7 634.4,669.4 636.1,669 637.8,668.8 639.5,668.8 641.2,668.9 642.9,669 644.6,669.1 646.4,669.3 648.1,669.7 649.8,670.4 651.5,671.2 653.2,672 654.9,672.8 656.6,673.4 658.3,673.7 660,673.7 661.7,673.5 663.4,673.5 665.1,673.4 666.8,673.4 668.5,673.4 670.2,673.3 671.9,673.1 673.6,672.6 675.3,671.7 677,670.7 678.7,669.8 680.5,668.8 682.2,668 683.9,667.2 685.6,666.7 687.3,666.8 689,667.4 690.7,668.1 692.4,668.9 694.1,669.7 695.8,670.4 697.5,670.9 699.2,671.3 700.9,671.4 702.6,671.4 704.3,671.2 706,671 707.7,670.8 709.4,670.6 711.1,670.5 712.8,670.4 714.6,670.4 716.3,670.4 718,670.3 719.7,670 721.4,669.7 723.1,669.7 724.8,669.7 726.5,669.9 728.2,670.1 729.9,670.4 731.6,670.7 733.3,671.1 735,671.5 736.7,672 738.4,672.4 740.1,673 741.8,673.5 743.5,674 745.2,674.3 746.9,674.6 748.7,674.6 750.4,674.4 752.1,674 753.8,673.6 755.5,673.1 757.2,672.6 758.9,672.1 760.6,671.6 762.3,671.1 764,670.6 765.7,670 767.4,669.5 769.1,668.9 770.8,668.3 772.5,667.8 774.2,667.3 775.9,666.8 777.6,666.4 779.3,666.2 781,666.2 782.8,666.2 784.5,666.4 786.2,666.7 787.9,667 789.6,667.3 791.3,667.9 793,668.5 794.7,669.2 796.4,669.8 798.1,670.4 799.8,670.9 801.5,671.3 803.2,671.6 804.9,671.8 806.6,672 808.3,672.1 810,672.1 811.7,672.2 813.4,672.3 815.1,672.5 816.9,672.7 818.6,672.9 820.3,673.1 822,673.4 823.7,673.6 825.4,674 827.1,674.4 828.8,675 830.5,675.5 832.2,676.1 833.9,676.7 835.6,677 837.3,677.2 839,677.2 840.7,677.1 842.4,677 844.1,676.9 845.8,676.7 847.5,676.6 849.2,676.5 851,676.5 852.7,676.5 854.4,676.6 856.1,676.7 857.8,676.7 859.5,676.5 861.2,675.9 862.9,675.3 864.6,674.6 866.3,674 868,673.4 869.7,673 871.4,672.6 873.1,672.3 874.8,671.9 876.5,671.6 878.2,671.3 879.9,671 881.6,670.7 883.3,670.5 885.1,670.2 886.8,670 888.5,669.8 890.2,669.7 891.9,669.7 893.6,669.7 895.3,669.7 897,669.6 898.7,669.6 900.4,669.5 902.1,669.3 903.8,669 905.5,668.6 907.2,668.3 908.9,667.9 910.6,667.7 912.3,667.8 914,668.1 915.7,668.4 917.4,668.9 919.2,669.3 920.9,669.8 922.6,670.3 924.3,670.9 926,671.4 927.7,671.9 929.4,672.4 931.1,672.9 932.8,673.3 934.5,673.7 936.2,674.1 937.9,674.5 939.6,674.8 941.3,675.1 943,675.4 944.7,675.8 946.4,676.3 948.1,676.8 949.8,677.5 951.5,678.3 953.3,679.2 955,680 956.7,680.9 958.4,681.7 960.1,682.3 961.8,682.8 963.5,683.1 965.2,683.2 966.9,683 968.6,682.3 970.3,681.3 972,680.3 973.7,679.3 975.4,678.2 977.1,676.9 978.8,675.3 980.5,672.6 982.2,669.6 983.9,666.6 985.6,663.9 987.4,661.6 989.1,659.8 990.8,658.3 992.5,657.2 994.2,656.3 995.9,655.8 997.6,655.5 999.3,655.5 1001,655.6 1002.7,655.7 1004.4,655.6 1006.1,655.4 1007.8,655.2 1009.5,655.2 1011.2,655.2 1012.9,655.4 1014.6,655.8 1016.3,656.2 1018,656.7 1019.7,657.2 1021.5,657.8 1023.2,658.4 1024.9,659 1026.6,659.6 1028.3,660.1 1030,660.4 1031.7,660.7 1033.4,660.8 1035.1,660.8 1036.8,661 1038.5,661.1 1040.2,661.4 1041.9,661.7 1043.6,662.2 1045.3,662.7 1047,663.2 1048.7,663.6 1050.4,664 1052.1,664.2 1053.8,664.3 1055.6,664 1057.3,663.2 1059,662.4 1060.7,661.5 1062.4,660.7 1064.1,659.9 1065.8,659.2 1067.5,658.6 1069.2,658 1070.9,657.6 1072.6,657.2 1074.3,657 1076,657.2 1077.7,657.5 1079.4,658 1081.1,658.6 1082.8,659.4 1084.5,660.4 1086.2,661.6 1087.9,663.2 1089.7,665.2 1091.4,667.1 1093.1,668.9 1094.8,670.6 1096.5,671.9 1098.2,673 1099.9,673.8 1101.6,674.6 1103.3,675.2 1105,675.7" fill="none" stroke="#e47c7c" stroke-width="1"/>
<path d="M0,670.5H1140.5" stroke="#3838e0" stroke-width="1.1"/>
<path d="M0,662L7.5,663 15,661 22.5,654.8 27.5,652 32.5,653.5 40,656 47.5,659.8 55,663.5 62.5,664.8 70,666 80,668 90,669 100,669.2 106,667 111,669.8 120,670.2 130,671.5 140,671 145,667 149,658.5 152.5,656 157.5,656.8 162.5,658.5 170,656.5 177.5,654.8 182.5,656.5 187.5,660.5 194,661 200,658.5 205,656 210,646 215,636 220,631 225,634.8 230,642.2 235,647.2 240,651 247.5,653 252.5,657.2 260,658.5 265,661 269,662.8 272.5,658.5 276,648.5 280,645.5 285,648.5 289,653 294,652.2 297.5,658.5 300,666 305,671 312.5,671 317.5,672.2 322.5,679.8 326,686 331,686.8 336,683.5 342.5,683.5 350,684 355,687.2 359,691 362.5,696 366,692.2 371,688.5 377.5,682.2 382.5,679.8 387.5,676.5 392.5,679 396,680.5 402.5,679.8 407.5,681.5 412.5,684.8 417.5,686 421,688.5 425,693.5 429,697.2 432.5,694.8 437.5,692.2 442.5,689.8 450,687.2 457.5,686 465,683.5 470,679.8 475,674.8 480,671 485,667.2 490,664.8 496,664.8 500,668.5 505,673.5 510,677.2 515,679.8 522.5,681 530,680.5 535,682.2 539,686 544,686.8 547.5,683.5 550,679 554,680.5 557.5,683.5 561,685.2 566,684.2 571,682.2 577.5,680.5 582.5,677.2 587.5,674.8 592.5,671 596,666 600,662.2 605,659.8 609.5,659.8 614,666 619,671 625,672.2 631,669.8 636,667.2 641,669.2 646,669.8 651,674 655.5,676.5 661,673 667.5,673.5 672.5,672.2 676,667.2 681,664.8 685,664 689,669.8 694,673 699,673 704,670.5 710,669.8 716,670.5 721,668.5 726,670.5 732.5,672.2 737.5,674 742.5,676 747.5,675.5 752.5,672.2 760,669.8 767.5,667.2 772.5,665.5 777.5,664.8 782.5,666.5 789,668.5 795,672.2 802.5,673 810,672.2 817.5,673.5 824,674.8 829,677.2 834,679 839,677.2 845,676 852.5,676.5 857.5,677.2 861,674 865,671.5 872.5,671 880,669.8 887.5,669 894,669.8 900,669.2 905,667.2 910,666.5 915,669.8 920,671.5 927.5,674 935,675.5 942.5,676.5 947.5,678.5 952.5,682.2 957.5,684.8 962.5,684.8 966,683.5 970,677.2 975,674.8 979,668.5 981,659.8 985,653 990,652.2 995,653 999,655.5 1002.5,656 1007.5,654.2 1012.5,656 1017.5,658.5 1022.5,660.5 1027.5,662.2 1035,661 1040,662.2 1045,664.8 1050,665.5 1054,664.8 1057.5,659.8 1062.5,657.2 1067.5,656 1072.5,655.5 1077.5,658.5 1082.5,662.2 1086,666 1090,673.5 1094,677.2 1100,677.2 1105,677.8" fill="none" stroke="#3a3ae6" stroke-width="1.2" stroke-linejoin="round"/>
</g>
<path d="M0,744.5L2.5,748.8 5.5,753.8 7.5,752 9.5,755.5 12,754.5 14.5,746.2 17,737.5 19.5,738 22,733.8 25,728.8 27,731.2 29.5,743.8 32,744.5 34.5,748.8 37.5,745 40,752.5 42,756.2 44.5,751.2 47,762.5 49,771.2 51.5,767.5 53.8,766.2 56.2,760 58.8,760.5 61.8,751.2 63.8,759.5 66.2,760.5 69.5,761.2 72.5,771.2 75,775.5 78,762 80.5,765.5 83.8,766.2 86.8,763.8 88.8,770 92,759.5 93.8,766.2 95.5,762 98,768.8 100.8,770 103,760 104.5,753.8 107,757.5 109.2,777.5 112,771.2 114.5,765.5 117.5,765 120,768 122.5,765.5 125.5,774.2 128.8,770 131.2,766.2 133.8,770.8 137.5,771.2 140.5,761.2 143,757 145,742.5 147,733 149,737.5 151,746.2 153,747 155.5,753.8 158.8,761.2 162,753.8 164.5,752.5 165.5,745 168,753.8 170.5,752 172.5,753 175,746.2 177,745.5 179.5,752.5 182,758.8 185,766.2 188,762 191.2,755 195,747.5 198,747 201.2,743 203.8,748 206.2,742.5 208.8,735 211.2,727.5 213,727 215,732.5 217.5,731.2 220,730.5 222,741.2 224,743 226.2,753.8 228,758.8 230.5,751.2 232.5,750 235,757.5 237.5,765 240.5,759.5 243,753.8 245,750 247,753 249,752.5 251,760 253,767.5 255.5,758.8 258,757 260.5,761.2 263,764.5 265.5,760 268,765.5 270.5,752.5 272,755.5 274.5,743.8 277,743 279.5,743.8 282,751.2 284.5,758.8 287.5,765.5 290,757.5 292,751.2 294.5,765 297.5,773.8 300,775 302.5,770 305,770.5 308,766.2 311.2,765 314.5,767 316.2,773.8 318,771.2 320,775 323,788.8 325.5,783.8 328,783 330.5,780.5 333,768.8 335.5,772.5 338,775 339.5,780.5 341.5,776.2 344,777.5 346.5,779.5 349,780.5 351.5,785 354,786.2 356.5,791.2 359,796.2 362,799.5 364,782 366.5,778.8 369,779.5 371,781.2 373,773.8 375.5,767.5 378,772 380.5,775 383,768 385.5,767.5 388,768.8 390,776.2 392.5,782.5 395.5,783.8 398,780 400,776.2 402.5,780 405,785 407.5,788.8 409.5,793.8 411.5,785.5 413,788.8 415,795.5 416.5,782.5 418,773.8 420,781.2 422.5,787.5 425.5,794.5 428,787.5 430.5,779.5 433,780 436.2,781.2 438.8,778.8 441.2,777 443.8,780 445.8,785 447.5,775 450,782 453,778.8 456.2,778.8 460,782 463.8,779.5 467,777 469.5,766.2 472,761.2 474.5,761.2 477,762.5 480,759.5 483,750 485,747 487.5,753 490,754.5 492.5,753.8 495,756.2 498,766.2 500.5,777.5 503,787 505.5,787.5 508.8,785 511.2,787.5 514,794.5 516,778.8 518.5,783.8 521,785.5 524,784.5 526.5,783.8 529,780.5 531.5,785 534,792.5 536,798.8 538,802 539.5,792.5 541,787 543,788.8 545,787.5 547,770 549.5,755 551,772.5 553.5,779.5 556,780.5 559,785.5 561.5,777.5 564,777 566.5,778 569,773.8 571,768.8 573,774.5 575.5,772.5 578,776.2 581,768 583.5,766.2 586,762 589,761.2 592,763.8 594.5,756.2 597,748 600,751.2 603,749.5 606.2,752.5 609.5,758.8 611.5,767.5 614,771.2 616.5,780.5 619.5,771.2 622.5,770.8 625,770.5 626.5,762 628.5,765.5 631,762.5 633,760.5 635,758 637.5,770 639,771.2 641.5,762.5 644,766.2 646.5,771.2 649,775 651.5,780 654.5,779.5 657.5,763.8 659.5,766.2 661.5,762 664,771.2 667.5,772.5 670.5,765.5 673.8,757 676.2,752 678.8,757 682,756.2 685,754.5 687,776.2 690,772.5 693,773.8 696.2,774.5 699.5,765 701.8,760.5 704.2,763.8 707,767 710,765.5 713,765.5 715,772 717.5,762.5 720.5,761.2 723,762.5 726,774.5 729,771.2 731.5,770.5 734.5,775 737,780 739.5,782 741.5,783.8 743.8,776.2 746.5,771.2 749,763.8 751.5,760.5 753.5,762.5 755,768.8 757.5,760 760,759.5 762.5,760.5 765,758 768,755 770,752.5 771.5,748.8 773,760.5 775.5,753.8 777.5,753.8 780,767.5 782.5,765.5 784.5,762 787,765.5 789.5,773 792.5,775.5 796.2,778 799.5,772 802,775 804.5,776.2 807,771.2 810,771.2 812.5,772 815,775 817.5,778.8 820,785 822,777.5 824,782.5 826,781.2 828,792 830,792.5 832,783.8 834,785 836.5,777.5 839,771.2 841,770.5 843,776.2 845.5,782.5 848,774.5 850,777.5 852.5,781.2 855,784.5 858,783.8 860,770 862,754.5 864.5,760 866.5,762.5 868.5,770.5 871,768.8 874.5,768.8 877.5,760.5 880,762.5 882.5,758 885,765.5 888,767 891,768 893,760.5 895,766.2 897.5,761.2 900,760 902.5,758.8 905.5,751.2 908,753.8 910.5,767.5 913,783.8 915,771.2 918,768 920.5,773.8 923,778.8 926,779.5 929,778.8 932,774.5 934.5,777.5 937,776.2 939.5,781.2 942,787 944.5,780 947,779.5 949,795 951.5,797.5 954.5,798 958,798.8 960.5,785 962.5,788.8 964.5,782.5 966.2,780.5 968,761.2 970,765 972.5,765.5 975,769.5 977,760 978.5,743.8 980.5,738.8 982,736.2 984,745 986.5,746.2 989,753.8 991.5,750.5 995,758.8 997.5,758 1000,758.8 1002.5,754.5 1005,751.2 1008.8,751.2 1012,752.5 1014.5,757 1017,758.8 1019.5,755.5 1022,756.2 1023.8,753 1026.2,755 1028,761.2 1030,751.2 1032.5,753.8 1035,752 1037.5,753 1040,759.5 1042,760 1044.5,767.5 1047,758 1049.5,759.5 1052,760 1054,750 1056.5,738.8 1059,738 1062,740 1064,743 1066,738.8 1068,737 1070.5,736.2 1072.5,746.2 1074.5,743 1076,743.8 1078,765 1080,770 1082,760.5 1085,766.2 1087,780 1089,787.5 1091,782.5 1092.5,786.2 1095,775 1097,773 1099,774.5 1101,772.5 1103,775.5 1105,776.2 1105,766 0,766Z" fill="url(#rsiu)" clip-path="url(#c70)"/>
<path d="M0,744.5L2.5,748.8 5.5,753.8 7.5,752 9.5,755.5 12,754.5 14.5,746.2 17,737.5 19.5,738 22,733.8 25,728.8 27,731.2 29.5,743.8 32,744.5 34.5,748.8 37.5,745 40,752.5 42,756.2 44.5,751.2 47,762.5 49,771.2 51.5,767.5 53.8,766.2 56.2,760 58.8,760.5 61.8,751.2 63.8,759.5 66.2,760.5 69.5,761.2 72.5,771.2 75,775.5 78,762 80.5,765.5 83.8,766.2 86.8,763.8 88.8,770 92,759.5 93.8,766.2 95.5,762 98,768.8 100.8,770 103,760 104.5,753.8 107,757.5 109.2,777.5 112,771.2 114.5,765.5 117.5,765 120,768 122.5,765.5 125.5,774.2 128.8,770 131.2,766.2 133.8,770.8 137.5,771.2 140.5,761.2 143,757 145,742.5 147,733 149,737.5 151,746.2 153,747 155.5,753.8 158.8,761.2 162,753.8 164.5,752.5 165.5,745 168,753.8 170.5,752 172.5,753 175,746.2 177,745.5 179.5,752.5 182,758.8 185,766.2 188,762 191.2,755 195,747.5 198,747 201.2,743 203.8,748 206.2,742.5 208.8,735 211.2,727.5 213,727 215,732.5 217.5,731.2 220,730.5 222,741.2 224,743 226.2,753.8 228,758.8 230.5,751.2 232.5,750 235,757.5 237.5,765 240.5,759.5 243,753.8 245,750 247,753 249,752.5 251,760 253,767.5 255.5,758.8 258,757 260.5,761.2 263,764.5 265.5,760 268,765.5 270.5,752.5 272,755.5 274.5,743.8 277,743 279.5,743.8 282,751.2 284.5,758.8 287.5,765.5 290,757.5 292,751.2 294.5,765 297.5,773.8 300,775 302.5,770 305,770.5 308,766.2 311.2,765 314.5,767 316.2,773.8 318,771.2 320,775 323,788.8 325.5,783.8 328,783 330.5,780.5 333,768.8 335.5,772.5 338,775 339.5,780.5 341.5,776.2 344,777.5 346.5,779.5 349,780.5 351.5,785 354,786.2 356.5,791.2 359,796.2 362,799.5 364,782 366.5,778.8 369,779.5 371,781.2 373,773.8 375.5,767.5 378,772 380.5,775 383,768 385.5,767.5 388,768.8 390,776.2 392.5,782.5 395.5,783.8 398,780 400,776.2 402.5,780 405,785 407.5,788.8 409.5,793.8 411.5,785.5 413,788.8 415,795.5 416.5,782.5 418,773.8 420,781.2 422.5,787.5 425.5,794.5 428,787.5 430.5,779.5 433,780 436.2,781.2 438.8,778.8 441.2,777 443.8,780 445.8,785 447.5,775 450,782 453,778.8 456.2,778.8 460,782 463.8,779.5 467,777 469.5,766.2 472,761.2 474.5,761.2 477,762.5 480,759.5 483,750 485,747 487.5,753 490,754.5 492.5,753.8 495,756.2 498,766.2 500.5,777.5 503,787 505.5,787.5 508.8,785 511.2,787.5 514,794.5 516,778.8 518.5,783.8 521,785.5 524,784.5 526.5,783.8 529,780.5 531.5,785 534,792.5 536,798.8 538,802 539.5,792.5 541,787 543,788.8 545,787.5 547,770 549.5,755 551,772.5 553.5,779.5 556,780.5 559,785.5 561.5,777.5 564,777 566.5,778 569,773.8 571,768.8 573,774.5 575.5,772.5 578,776.2 581,768 583.5,766.2 586,762 589,761.2 592,763.8 594.5,756.2 597,748 600,751.2 603,749.5 606.2,752.5 609.5,758.8 611.5,767.5 614,771.2 616.5,780.5 619.5,771.2 622.5,770.8 625,770.5 626.5,762 628.5,765.5 631,762.5 633,760.5 635,758 637.5,770 639,771.2 641.5,762.5 644,766.2 646.5,771.2 649,775 651.5,780 654.5,779.5 657.5,763.8 659.5,766.2 661.5,762 664,771.2 667.5,772.5 670.5,765.5 673.8,757 676.2,752 678.8,757 682,756.2 685,754.5 687,776.2 690,772.5 693,773.8 696.2,774.5 699.5,765 701.8,760.5 704.2,763.8 707,767 710,765.5 713,765.5 715,772 717.5,762.5 720.5,761.2 723,762.5 726,774.5 729,771.2 731.5,770.5 734.5,775 737,780 739.5,782 741.5,783.8 743.8,776.2 746.5,771.2 749,763.8 751.5,760.5 753.5,762.5 755,768.8 757.5,760 760,759.5 762.5,760.5 765,758 768,755 770,752.5 771.5,748.8 773,760.5 775.5,753.8 777.5,753.8 780,767.5 782.5,765.5 784.5,762 787,765.5 789.5,773 792.5,775.5 796.2,778 799.5,772 802,775 804.5,776.2 807,771.2 810,771.2 812.5,772 815,775 817.5,778.8 820,785 822,777.5 824,782.5 826,781.2 828,792 830,792.5 832,783.8 834,785 836.5,777.5 839,771.2 841,770.5 843,776.2 845.5,782.5 848,774.5 850,777.5 852.5,781.2 855,784.5 858,783.8 860,770 862,754.5 864.5,760 866.5,762.5 868.5,770.5 871,768.8 874.5,768.8 877.5,760.5 880,762.5 882.5,758 885,765.5 888,767 891,768 893,760.5 895,766.2 897.5,761.2 900,760 902.5,758.8 905.5,751.2 908,753.8 910.5,767.5 913,783.8 915,771.2 918,768 920.5,773.8 923,778.8 926,779.5 929,778.8 932,774.5 934.5,777.5 937,776.2 939.5,781.2 942,787 944.5,780 947,779.5 949,795 951.5,797.5 954.5,798 958,798.8 960.5,785 962.5,788.8 964.5,782.5 966.2,780.5 968,761.2 970,765 972.5,765.5 975,769.5 977,760 978.5,743.8 980.5,738.8 982,736.2 984,745 986.5,746.2 989,753.8 991.5,750.5 995,758.8 997.5,758 1000,758.8 1002.5,754.5 1005,751.2 1008.8,751.2 1012,752.5 1014.5,757 1017,758.8 1019.5,755.5 1022,756.2 1023.8,753 1026.2,755 1028,761.2 1030,751.2 1032.5,753.8 1035,752 1037.5,753 1040,759.5 1042,760 1044.5,767.5 1047,758 1049.5,759.5 1052,760 1054,750 1056.5,738.8 1059,738 1062,740 1064,743 1066,738.8 1068,737 1070.5,736.2 1072.5,746.2 1074.5,743 1076,743.8 1078,765 1080,770 1082,760.5 1085,766.2 1087,780 1089,787.5 1091,782.5 1092.5,786.2 1095,775 1097,773 1099,774.5 1101,772.5 1103,775.5 1105,776.2 1105,766 0,766Z" fill="url(#rsid)" clip-path="url(#c30)"/>
<path d="M0,743.75H1140.5 M0,789.25H1140.5" stroke="#4444e2" stroke-width="1.1"/>
<path d="M0,744.5L2.5,748.8 5.5,753.8 7.5,752 9.5,755.5 12,754.5 14.5,746.2 17,737.5 19.5,738 22,733.8 25,728.8 27,731.2 29.5,743.8 32,744.5 34.5,748.8 37.5,745 40,752.5 42,756.2 44.5,751.2 47,762.5 49,771.2 51.5,767.5 53.8,766.2 56.2,760 58.8,760.5 61.8,751.2 63.8,759.5 66.2,760.5 69.5,761.2 72.5,771.2 75,775.5 78,762 80.5,765.5 83.8,766.2 86.8,763.8 88.8,770 92,759.5 93.8,766.2 95.5,762 98,768.8 100.8,770 103,760 104.5,753.8 107,757.5 109.2,777.5 112,771.2 114.5,765.5 117.5,765 120,768 122.5,765.5 125.5,774.2 128.8,770 131.2,766.2 133.8,770.8 137.5,771.2 140.5,761.2 143,757 145,742.5 147,733 149,737.5 151,746.2 153,747 155.5,753.8 158.8,761.2 162,753.8 164.5,752.5 165.5,745 168,753.8 170.5,752 172.5,753 175,746.2 177,745.5 179.5,752.5 182,758.8 185,766.2 188,762 191.2,755 195,747.5 198,747 201.2,743 203.8,748 206.2,742.5 208.8,735 211.2,727.5 213,727 215,732.5 217.5,731.2 220,730.5 222,741.2 224,743 226.2,753.8 228,758.8 230.5,751.2 232.5,750 235,757.5 237.5,765 240.5,759.5 243,753.8 245,750 247,753 249,752.5 251,760 253,767.5 255.5,758.8 258,757 260.5,761.2 263,764.5 265.5,760 268,765.5 270.5,752.5 272,755.5 274.5,743.8 277,743 279.5,743.8 282,751.2 284.5,758.8 287.5,765.5 290,757.5 292,751.2 294.5,765 297.5,773.8 300,775 302.5,770 305,770.5 308,766.2 311.2,765 314.5,767 316.2,773.8 318,771.2 320,775 323,788.8 325.5,783.8 328,783 330.5,780.5 333,768.8 335.5,772.5 338,775 339.5,780.5 341.5,776.2 344,777.5 346.5,779.5 349,780.5 351.5,785 354,786.2 356.5,791.2 359,796.2 362,799.5 364,782 366.5,778.8 369,779.5 371,781.2 373,773.8 375.5,767.5 378,772 380.5,775 383,768 385.5,767.5 388,768.8 390,776.2 392.5,782.5 395.5,783.8 398,780 400,776.2 402.5,780 405,785 407.5,788.8 409.5,793.8 411.5,785.5 413,788.8 415,795.5 416.5,782.5 418,773.8 420,781.2 422.5,787.5 425.5,794.5 428,787.5 430.5,779.5 433,780 436.2,781.2 438.8,778.8 441.2,777 443.8,780 445.8,785 447.5,775 450,782 453,778.8 456.2,778.8 460,782 463.8,779.5 467,777 469.5,766.2 472,761.2 474.5,761.2 477,762.5 480,759.5 483,750 485,747 487.5,753 490,754.5 492.5,753.8 495,756.2 498,766.2 500.5,777.5 503,787 505.5,787.5 508.8,785 511.2,787.5 514,794.5 516,778.8 518.5,783.8 521,785.5 524,784.5 526.5,783.8 529,780.5 531.5,785 534,792.5 536,798.8 538,802 539.5,792.5 541,787 543,788.8 545,787.5 547,770 549.5,755 551,772.5 553.5,779.5 556,780.5 559,785.5 561.5,777.5 564,777 566.5,778 569,773.8 571,768.8 573,774.5 575.5,772.5 578,776.2 581,768 583.5,766.2 586,762 589,761.2 592,763.8 594.5,756.2 597,748 600,751.2 603,749.5 606.2,752.5 609.5,758.8 611.5,767.5 614,771.2 616.5,780.5 619.5,771.2 622.5,770.8 625,770.5 626.5,762 628.5,765.5 631,762.5 633,760.5 635,758 637.5,770 639,771.2 641.5,762.5 644,766.2 646.5,771.2 649,775 651.5,780 654.5,779.5 657.5,763.8 659.5,766.2 661.5,762 664,771.2 667.5,772.5 670.5,765.5 673.8,757 676.2,752 678.8,757 682,756.2 685,754.5 687,776.2 690,772.5 693,773.8 696.2,774.5 699.5,765 701.8,760.5 704.2,763.8 707,767 710,765.5 713,765.5 715,772 717.5,762.5 720.5,761.2 723,762.5 726,774.5 729,771.2 731.5,770.5 734.5,775 737,780 739.5,782 741.5,783.8 743.8,776.2 746.5,771.2 749,763.8 751.5,760.5 753.5,762.5 755,768.8 757.5,760 760,759.5 762.5,760.5 765,758 768,755 770,752.5 771.5,748.8 773,760.5 775.5,753.8 777.5,753.8 780,767.5 782.5,765.5 784.5,762 787,765.5 789.5,773 792.5,775.5 796.2,778 799.5,772 802,775 804.5,776.2 807,771.2 810,771.2 812.5,772 815,775 817.5,778.8 820,785 822,777.5 824,782.5 826,781.2 828,792 830,792.5 832,783.8 834,785 836.5,777.5 839,771.2 841,770.5 843,776.2 845.5,782.5 848,774.5 850,777.5 852.5,781.2 855,784.5 858,783.8 860,770 862,754.5 864.5,760 866.5,762.5 868.5,770.5 871,768.8 874.5,768.8 877.5,760.5 880,762.5 882.5,758 885,765.5 888,767 891,768 893,760.5 895,766.2 897.5,761.2 900,760 902.5,758.8 905.5,751.2 908,753.8 910.5,767.5 913,783.8 915,771.2 918,768 920.5,773.8 923,778.8 926,779.5 929,778.8 932,774.5 934.5,777.5 937,776.2 939.5,781.2 942,787 944.5,780 947,779.5 949,795 951.5,797.5 954.5,798 958,798.8 960.5,785 962.5,788.8 964.5,782.5 966.2,780.5 968,761.2 970,765 972.5,765.5 975,769.5 977,760 978.5,743.8 980.5,738.8 982,736.2 984,745 986.5,746.2 989,753.8 991.5,750.5 995,758.8 997.5,758 1000,758.8 1002.5,754.5 1005,751.2 1008.8,751.2 1012,752.5 1014.5,757 1017,758.8 1019.5,755.5 1022,756.2 1023.8,753 1026.2,755 1028,761.2 1030,751.2 1032.5,753.8 1035,752 1037.5,753 1040,759.5 1042,760 1044.5,767.5 1047,758 1049.5,759.5 1052,760 1054,750 1056.5,738.8 1059,738 1062,740 1064,743 1066,738.8 1068,737 1070.5,736.2 1072.5,746.2 1074.5,743 1076,743.8 1078,765 1080,770 1082,760.5 1085,766.2 1087,780 1089,787.5 1091,782.5 1092.5,786.2 1095,775 1097,773 1099,774.5 1101,772.5 1103,775.5 1105,776.2" fill="none" stroke="#fb0707" stroke-width="1.9" stroke-linejoin="round"/>
<path d="M1141.0,582.8h3.5 M1141.0,550.6h3.5 M1141.0,518.4h3.5 M1141.0,486.3h3.5 M1141.0,454.1h3.5 M1141.0,421.9h3.5 M1141.0,389.8h3.5 M1141.0,357.6h3.5 M1141.0,325.4h3.5 M1141.0,293.2h3.5 M1141.0,261h3.5 M1141.0,228.9h3.5 M1141.0,196.7h3.5 M1141.0,164.5h3.5 M1141.0,132.3h3.5 M1141.0,100.2h3.5 M1141.0,68h3.5 M1141.0,598.5h3.5 M1141.0,640.5h3.5 M1141.0,695h3.5 M1141.0,670.5h2 M1141.0,710.6h3.5 M1141.0,732.9h3.5 M1141.0,755.3h3.5 M1141.0,777.6h3.5 M1141.0,800h3.5 M1141.0,822.3h3.5 M1141.0,721.8h2 M1141.0,744.1h2 M1141.0,766.4h2 M1141.0,788.8h2 M1141.0,811.1h2" stroke="#b5b5b5" stroke-width="1" fill="none"/>
<path d="M55.6,829v4M130.3,829v4M200.3,829v4M272,829v4M341.3,829v4M413,829v4M488,829v4M565,829v4M635,829v4M705,829v4M776.5,829v4M848.3,829v4M923.7,829v4M998.6,829v4M1071.8,829v4" stroke="#b5b5b5" stroke-width="1" fill="none"/>
<g font-family='"Liberation Sans", Arial, sans-serif'>
<text x="1146.6" y="587.1" font-size="12" fill="#333">4,5</text>
<text x="1146.6" y="554.9" font-size="12" fill="#000" font-weight="bold">5</text>
<text x="1146.6" y="522.7" font-size="12" fill="#333">5,5</text>
<text x="1146.6" y="490.6" font-size="12" fill="#333">6</text>
<text x="1146.6" y="458.4" font-size="12" fill="#333">6,5</text>
<text x="1146.6" y="394.1" font-size="12" fill="#333">7,5</text>
<text x="1146.6" y="361.9" font-size="12" fill="#333">8</text>
<text x="1146.6" y="329.7" font-size="12" fill="#333">8,5</text>
<text x="1146.6" y="297.5" font-size="12" fill="#333">9</text>
<text x="1146.6" y="265.3" font-size="12" fill="#333">9,5</text>
<text x="1146.6" y="233.2" font-size="12" fill="#000" font-weight="bold">10</text>
<text x="1146.6" y="201" font-size="12" fill="#333">10,5</text>
<text x="1146.6" y="168.8" font-size="12" fill="#333">11</text>
<text x="1146.6" y="136.7" font-size="12" fill="#333">11,5</text>
<text x="1146.6" y="104.5" font-size="12" fill="#333">12</text>
<text x="1146.6" y="72.3" font-size="12" fill="#333">12,5</text>
<text x="1146" y="602.8" font-size="12" fill="#333">200 000</text>
<text x="1146" y="644.8" font-size="12" fill="#333">0,5</text>
<text x="1143.5" y="699.3" font-size="12" fill="#333">-0,5</text>
<text x="1146.2" y="714.9" font-size="12" fill="#000" font-weight="bold">100</text>
<text x="1146.2" y="737.2" font-size="12" fill="#333">80</text>
<text x="1146.2" y="759.6" font-size="12" fill="#333">60</text>
<text x="1146.2" y="804.3" font-size="12" fill="#333">20</text>
<text x="1146.2" y="826.6" font-size="12" fill="#000" font-weight="bold">0</text>
<text x="55.6" y="845" font-size="12" fill="#333" text-anchor="middle">sept.</text>
<text x="130.3" y="845" font-size="12" fill="#333" text-anchor="middle">nov.</text>
<text x="200.3" y="845" font-size="12" fill="#000" font-weight="bold" text-anchor="middle">2014</text>
<text x="272" y="845" font-size="12" fill="#333" text-anchor="middle">mars</text>
<text x="341.3" y="845" font-size="12" fill="#333" text-anchor="middle">mai</text>
<text x="413" y="845" font-size="12" fill="#333" text-anchor="middle">juil.</text>
<text x="488" y="845" font-size="12" fill="#333" text-anchor="middle">sept.</text>
<text x="565" y="845" font-size="12" fill="#333" text-anchor="middle">nov.</text>
<text x="635" y="845" font-size="12" fill="#000" font-weight="bold" text-anchor="middle">2015</text>
<text x="705" y="845" font-size="12" fill="#333" text-anchor="middle">mars</text>
<text x="776.5" y="845" font-size="12" fill="#333" text-anchor="middle">mai</text>
<text x="848.3" y="845" font-size="12" fill="#333" text-anchor="middle">juil.</text>
<text x="923.7" y="845" font-size="12" fill="#333" text-anchor="middle">sept.</text>
<text x="998.6" y="845" font-size="12" fill="#333" text-anchor="middle">nov.</text>
<text x="1071.8" y="845" font-size="12" fill="#000" font-weight="bold" text-anchor="middle">2016</text>
<path d="M1140.7,358.3h4.5" stroke="#9a32cd" stroke-width="1.3"/>
<rect x="1144.5" y="350.7" width="40" height="15.2" fill="#f8f8f8" stroke="#c4c4c4" stroke-width="1"/>
<text x="1146.1" y="362.8" font-size="12" fill="#9a32cd">7,9987</text>
<path d="M1140.7,405.3h4.5" stroke="#2a4af0" stroke-width="1.3"/>
<rect x="1144.5" y="391.3" width="40" height="15.2" fill="#f8f8f8" stroke="#c4c4c4" stroke-width="1"/>
<text x="1146.1" y="403.4" font-size="12" fill="#2a4af0">7,2640</text>
<rect x="1144.5" y="398.4" width="40" height="15.2" fill="#f8f8f8" stroke="#c4c4c4" stroke-width="1"/>
<text x="1146.1" y="410.5" font-size="12" fill="#ee8a8a">7,2486</text>
<rect x="1144.5" y="403.3" width="40" height="15.2" fill="#f8f8f8" stroke="#c4c4c4" stroke-width="1"/>
<text x="1146.1" y="415.4" font-size="12" fill="#e46a6a">7,2485</text>
<path d="M1140.7,440.6h4.5" stroke="#6be830" stroke-width="1.3"/>
<rect x="1144.5" y="433.4" width="40" height="15.2" fill="#f8f8f8" stroke="#c4c4c4" stroke-width="1"/>
<text x="1146.1" y="445.5" font-size="12" fill="#6be830">6,7216</text>
<path d="M1140.7,451.6h4.5" stroke="#22e6cf" stroke-width="1.3"/>
<rect x="1144.5" y="444.5" width="40" height="15.2" fill="#f8f8f8" stroke="#c4c4c4" stroke-width="1"/>
<text x="1146.1" y="456.6" font-size="12" fill="#22e6cf">6,5450</text>
<path d="M1140.7,455.2h4.5" stroke="#9a32cd" stroke-width="1.3"/>
<rect x="1144.5" y="453.3" width="40" height="15.2" fill="#f8f8f8" stroke="#c4c4c4" stroke-width="1"/>
<text x="1146.1" y="465.4" font-size="12" fill="#9a32cd">6,4983</text>
<path d="M1140.7,426.8h4.5" stroke="#000" stroke-width="1.3"/>
<rect x="1145" y="420.4" width="25.6" height="13.8" fill="#ffc20e"/>
<text x="1146" y="431.6" font-size="12" fill="#000">6,93</text>
<path d="M1140.7,623.2h4.5" stroke="#2faa2f" stroke-width="1.3"/>
<rect x="1144.5" y="608.3" width="33.4" height="14.9" fill="#f8f8f8" stroke="#c4c4c4" stroke-width="1"/>
<text x="1146.1" y="620.1" font-size="12" fill="#2faa2f">8 169</text>
<path d="M1140.7,672.3h4.5" stroke="#e27a7a" stroke-width="1.3"/>
<rect x="1144.5" y="659.3" width="44.3" height="14.5" fill="#f8f8f8" stroke="#c4c4c4" stroke-width="1"/>
<text x="1146.1" y="670.7" font-size="12" fill="#e27a7a">-0,0303</text>
<path d="M1140.7,675h4.5" stroke="#e27a7a" stroke-width="1.3"/>
<rect x="1144.5" y="668.2" width="44.3" height="14.5" fill="#f8f8f8" stroke="#c4c4c4" stroke-width="1"/>
<text x="1146.1" y="679.6" font-size="12" fill="#e27a7a">-0,0993</text>
<path d="M1140.7,677.6h4.5" stroke="#3a3ae6" stroke-width="1.3"/>
<rect x="1144.5" y="677.2" width="44.3" height="14.2" fill="#f8f8f8" stroke="#c4c4c4" stroke-width="1"/>
<text x="1146.1" y="688.3" font-size="12" fill="#3a3ae6">-0,1296</text>
<path d="M1140.7,774.9h4.5" stroke="#fb0707" stroke-width="1.3"/>
<rect x="1144.5" y="767.6" width="40.4" height="14.6" fill="#f8f8f8" stroke="#c4c4c4" stroke-width="1"/>
<text x="1146.1" y="779.1" font-size="12" fill="#fb0707">42,204</text>
</g>
</svg>
<div class="plab" style="top:46.5px;width:100.5px;height:16.5px"><span class="pt"><span class="nar">Prix</span></span><svg width="12" height="12" viewBox="0 0 12 12" style="position:absolute;left:26px;top:2.45px"><path d="M0.6,9.3 L5.1,4.5 C4.3,2.8 4.9,1 6.1,0.6 L8.3,0.7 L8.1,3.3 L9.1,4.1 L9.4,2.9 L11,3 C11.2,4.6 10.6,5.9 9.6,6.2 C8.8,6.4 8.2,6.1 7.7,5.8 L2.4,10.9 C1.6,11.5 0.2,10.4 0.6,9.3Z" fill="#fff" stroke="#2e2e2e" stroke-width="1.05" stroke-linejoin="round"/></svg><svg width="12" height="12" viewBox="0 0 12 12" style="position:absolute;left:41px;top:2.45px"><rect x="0.8" y="1" width="10.4" height="10" rx="1.4" fill="#fff" stroke="#111" stroke-width="1.3"/><rect x="0.8" y="1" width="10.4" height="2.6" rx="1" fill="#111"/></svg><svg width="12" height="12" viewBox="0 0 12 12" style="position:absolute;left:56.6px;top:2.45px"><circle cx="6" cy="6" r="5.6" fill="#2c2c2c"/><path d="M3.6,3.6L8.4,8.4M8.4,3.6L3.6,8.4" stroke="#fff" stroke-width="1.9" stroke-linecap="butt"/></svg><svg width="12" height="12" viewBox="0 0 12 12" style="position:absolute;left:71.5px;top:2.45px"><path d="M0.7,0.8H8l3.3,3.2V11.2H0.7Z" fill="#e6e6e6" stroke="#c2c2c2" stroke-width="1"/><path d="M6,2.5V8M3.5,6L6,8.6L8.5,6" fill="none" stroke="#bdbdbd" stroke-width="1.4"/></svg><svg width="12" height="12" viewBox="0 0 12 12" style="position:absolute;left:86.6px;top:2.45px"><path d="M0.7,0.8H8l3.3,3.2V11.2H0.7Z" fill="#e6e6e6" stroke="#c2c2c2" stroke-width="1"/><path d="M6,9.5V4M3.5,6.2L6,3.6L8.5,6.2" fill="none" stroke="#bdbdbd" stroke-width="1.4"/></svg></div><div id="yr">Ann&eacute;e :+Haut 7,94 +Bas 6,50</div>
<div id="copy">&copy; ProRealTime.com <em>Donn&eacute;es en fin de journ&eacute;e</em></div>
<div class="plab" style="top:592px;width:91.5px;height:16.4px"><span class="pt"><span class="nar">Volume</span></span><svg width="12" height="12" viewBox="0 0 12 12" style="position:absolute;left:46.5px;top:2.3999999999999995px"><path d="M0.6,9.3 L5.1,4.5 C4.3,2.8 4.9,1 6.1,0.6 L8.3,0.7 L8.1,3.3 L9.1,4.1 L9.4,2.9 L11,3 C11.2,4.6 10.6,5.9 9.6,6.2 C8.8,6.4 8.2,6.1 7.7,5.8 L2.4,10.9 C1.6,11.5 0.2,10.4 0.6,9.3Z" fill="#fff" stroke="#2e2e2e" stroke-width="1.05" stroke-linejoin="round"/></svg><svg width="12" height="12" viewBox="0 0 12 12" style="position:absolute;left:61.5px;top:2.3999999999999995px"><rect x="0.8" y="1" width="10.4" height="10" rx="1.4" fill="#fff" stroke="#111" stroke-width="1.3"/><rect x="0.8" y="1" width="10.4" height="2.6" rx="1" fill="#111"/></svg><svg width="12" height="12" viewBox="0 0 12 12" style="position:absolute;left:77px;top:2.3999999999999995px"><circle cx="6" cy="6" r="5.6" fill="#2c2c2c"/><path d="M3.6,3.6L8.4,8.4M8.4,3.6L3.6,8.4" stroke="#fff" stroke-width="1.9" stroke-linecap="butt"/></svg></div><div class="plab" style="top:627px;width:138px;height:17px"><span class="pt">MACD (12 26 9)</span><svg width="12" height="12" viewBox="0 0 12 12" style="position:absolute;left:92.5px;top:2.7px"><path d="M0.6,9.3 L5.1,4.5 C4.3,2.8 4.9,1 6.1,0.6 L8.3,0.7 L8.1,3.3 L9.1,4.1 L9.4,2.9 L11,3 C11.2,4.6 10.6,5.9 9.6,6.2 C8.8,6.4 8.2,6.1 7.7,5.8 L2.4,10.9 C1.6,11.5 0.2,10.4 0.6,9.3Z" fill="#fff" stroke="#2e2e2e" stroke-width="1.05" stroke-linejoin="round"/></svg><svg width="12" height="12" viewBox="0 0 12 12" style="position:absolute;left:108px;top:2.7px"><rect x="0.8" y="1" width="10.4" height="10" rx="1.4" fill="#fff" stroke="#111" stroke-width="1.3"/><rect x="0.8" y="1" width="10.4" height="2.6" rx="1" fill="#111"/></svg><svg width="12" height="12" viewBox="0 0 12 12" style="position:absolute;left:123.5px;top:2.7px"><circle cx="6" cy="6" r="5.6" fill="#2c2c2c"/><path d="M3.6,3.6L8.4,8.4M8.4,3.6L3.6,8.4" stroke="#fff" stroke-width="1.9" stroke-linecap="butt"/></svg></div><div class="plab" style="top:705px;width:227.5px;height:16px"><span class="pt">Relative strength index (RSI) (14)</span><svg width="12" height="12" viewBox="0 0 12 12" style="position:absolute;left:183.5px;top:2.2px"><path d="M0.6,9.3 L5.1,4.5 C4.3,2.8 4.9,1 6.1,0.6 L8.3,0.7 L8.1,3.3 L9.1,4.1 L9.4,2.9 L11,3 C11.2,4.6 10.6,5.9 9.6,6.2 C8.8,6.4 8.2,6.1 7.7,5.8 L2.4,10.9 C1.6,11.5 0.2,10.4 0.6,9.3Z" fill="#fff" stroke="#2e2e2e" stroke-width="1.05" stroke-linejoin="round"/></svg><svg width="12" height="12" viewBox="0 0 12 12" style="position:absolute;left:199px;top:2.2px"><rect x="0.8" y="1" width="10.4" height="10" rx="1.4" fill="#fff" stroke="#111" stroke-width="1.3"/><rect x="0.8" y="1" width="10.4" height="2.6" rx="1" fill="#111"/></svg><svg width="12" height="12" viewBox="0 0 12 12" style="position:absolute;left:214.5px;top:2.2px"><circle cx="6" cy="6" r="5.6" fill="#2c2c2c"/><path d="M3.6,3.6L8.4,8.4M8.4,3.6L3.6,8.4" stroke="#fff" stroke-width="1.9" stroke-linecap="butt"/></svg></div></body></html>
